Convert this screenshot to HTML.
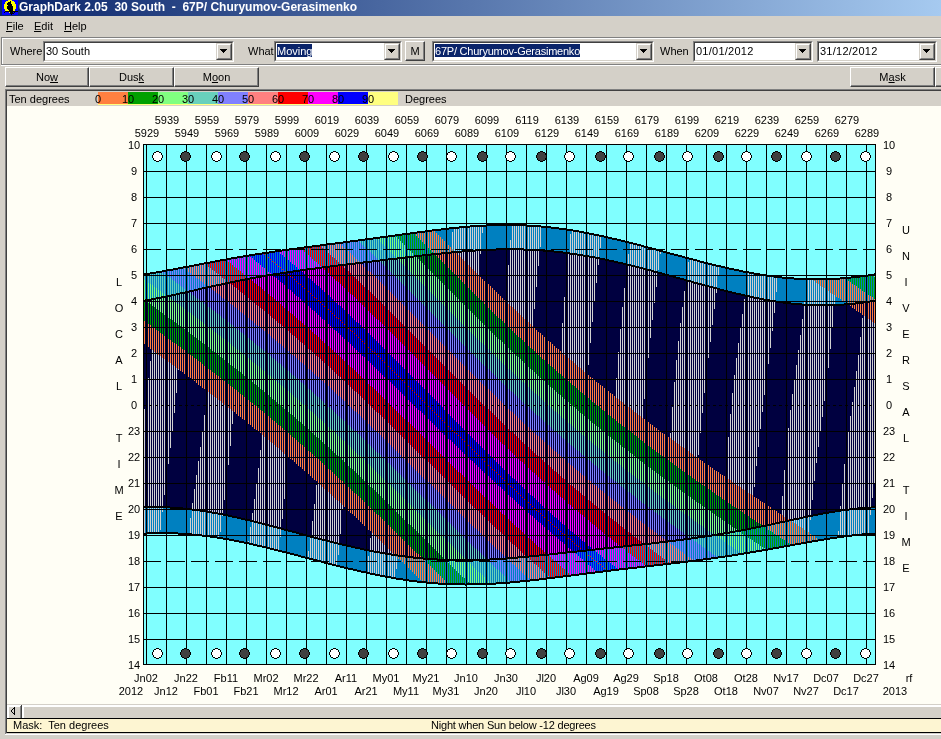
<!DOCTYPE html>
<html><head><meta charset="utf-8">
<style>
*{box-sizing:border-box}
html,body{margin:0;padding:0}
body{width:941px;height:739px;overflow:hidden;position:relative;background:#d4d0c8;font-family:"Liberation Sans",sans-serif;font-size:11px;line-height:13px;color:#000}
.a{position:absolute}
.lb{position:absolute;white-space:nowrap;line-height:13px;will-change:transform}
.title{left:0;top:0;width:941px;height:16px;background:linear-gradient(to right,#0a246a,#a6caf0)}
.ttext{left:19px;top:0px;color:#fff;font-weight:bold;font-size:12px;line-height:14px;white-space:pre;will-change:transform}
.menu span{position:absolute;top:20px;will-change:transform}
u{text-decoration:underline;text-decoration-thickness:1px;text-underline-offset:1px}
.etch{border-top:1px solid #808080;border-left:1px solid #808080;box-shadow:inset 1px 1px 0 #fff, 0 1px 0 #fff}
.combo{position:absolute;height:20px;background:#fff;border-top:1px solid #808080;border-left:1px solid #808080;border-right:1px solid #fff;border-bottom:1px solid #fff}
.combo .in{position:absolute;left:0;top:0;right:0;bottom:0;border-top:1px solid #404040;border-left:1px solid #404040;border-right:1px solid #d4d0c8;border-bottom:1px solid #d4d0c8}
.combo .txt{position:absolute;left:2px;top:3px;white-space:nowrap;will-change:transform}
.dd{position:absolute;right:0;top:0;width:16px;height:17px;background:#d4d0c8;border-top:1px solid #d4d0c8;border-left:1px solid #d4d0c8;border-right:1px solid #404040;border-bottom:1px solid #404040}
.dd .i{position:absolute;left:0;top:0;right:0;bottom:0;border-top:1px solid #fff;border-left:1px solid #fff;border-right:1px solid #808080;border-bottom:1px solid #808080}
.dd .tri{position:absolute;left:3px;top:5px}
.sel{background:#0a246a;color:#fff;display:inline-block;height:13px;line-height:14px;vertical-align:top;position:relative;top:-1px}
.btn{position:absolute;height:20px;background:#d4d0c8;border-top:1px solid #fff;border-left:1px solid #fff;border-right:1px solid #404040;border-bottom:1px solid #404040;text-align:center}
.btn .i{position:absolute;left:0;top:0;right:0;bottom:0;border-right:1px solid #808080;border-bottom:1px solid #808080}
.btn .bt{position:absolute;left:0;right:0;top:3px;text-align:center;will-change:transform}
svg.chart{position:absolute;left:0;top:0}
</style></head><body>
<div class="a title"></div>
<svg class="a" style="left:2px;top:0" width="16" height="15" viewBox="0 0 16 15" shape-rendering="crispEdges"><path fill="#0000ff" d="M0 0h6v1h-6zM10 0h6v1h-6zM0 1h4v1h-4zM12 1h4v1h-4zM0 2h3v1h-3zM13 2h3v1h-3zM0 3h3v1h-3zM13 3h3v1h-3zM0 4h2v1h-2zM14 4h2v1h-2zM0 5h2v1h-2zM14 5h2v1h-2zM0 6h2v1h-2zM14 6h2v1h-2zM0 7h2v1h-2zM14 7h2v1h-2zM0 8h2v1h-2zM14 8h2v1h-2zM0 9h3v1h-3zM13 9h3v1h-3zM0 10h3v1h-3zM13 10h3v1h-3zM0 11h3v1h-3zM0 12h2v1h-2zM3 12h4v1h-4zM11 12h1v1h-1zM13 12h3v1h-3zM0 13h8v1h-8zM12 13h4v1h-4zM0 14h9v1h-9zM10 14h6v1h-6z"/><path fill="#ffff00" d="M6 0h4v1h-4zM4 1h4v1h-4zM9 1h3v1h-3zM3 2h3v1h-3zM9 2h4v1h-4zM3 3h2v1h-2zM9 3h4v1h-4zM2 4h3v1h-3zM10 4h4v1h-4zM2 5h4v1h-4zM10 5h4v1h-4zM2 6h3v1h-3zM11 6h3v1h-3zM2 7h3v1h-3zM11 7h3v1h-3zM2 8h3v1h-3zM11 8h3v1h-3zM3 9h3v1h-3zM11 9h2v1h-2zM3 10h4v1h-4zM11 10h2v1h-2zM7 12h1v1h-1z"/><path fill="#000" d="M8 1h1v1h-1zM6 2h3v1h-3zM5 3h4v1h-4zM5 4h5v1h-5zM6 5h4v1h-4zM5 6h6v1h-6zM5 7h6v1h-6zM5 8h6v1h-6zM6 9h5v1h-5zM7 10h4v1h-4zM3 11h13v1h-13zM2 12h1v1h-1zM8 12h3v1h-3zM12 12h1v1h-1zM8 13h4v1h-4zM9 14h1v1h-1z"/></svg>
<div class="a ttext">GraphDark 2.05  30 South  -  67P/ Churyumov-Gerasimenko</div>
<div class="a menu" style="left:0;top:0">
<span style="left:6px"><u>F</u>ile</span><span style="left:34px"><u>E</u>dit</span><span style="left:64px"><u>H</u>elp</span>
</div>
<!-- panel 1 -->
<div class="a" style="left:1px;top:37px;width:945px;height:1px;background:#808080"></div>
<div class="a" style="left:2px;top:38px;width:945px;height:1px;background:#fff"></div>
<div class="a" style="left:1px;top:37px;width:1px;height:28px;background:#808080"></div>
<div class="a" style="left:2px;top:38px;width:1px;height:26px;background:#fff"></div>
<div class="a" style="left:1px;top:64px;width:945px;height:1px;background:#808080"></div>
<div class="a" style="left:1px;top:65px;width:945px;height:1px;background:#fff"></div>

<div class="lb" style="left:10px;top:45px">Where</div>
<div class="combo" style="left:43px;top:41px;width:191px;height:21px"><div class="in"></div><div class="txt">30 South</div><div class="dd" style="right:1px;top:1px"><div class="i"></div><svg class="tri" width="7" height="4" viewBox="0 0 7 4" shape-rendering="crispEdges"><path fill="#000" d="M0 0h7v1H0zM1 1h5v1H1zM2 2h3v1H2zM3 3h1v1H3z"/></svg></div></div>
<div class="lb" style="left:248px;top:45px">What</div>
<div class="combo" style="left:274px;top:41px;width:128px;height:21px"><div class="in"></div><div class="txt"><span class="sel">Moving</span></div><div class="dd" style="right:1px;top:1px"><div class="i"></div><svg class="tri" width="7" height="4" viewBox="0 0 7 4" shape-rendering="crispEdges"><path fill="#000" d="M0 0h7v1H0zM1 1h5v1H1zM2 2h3v1H2zM3 3h1v1H3z"/></svg></div></div>
<div class="btn" style="left:405px;top:41px;width:20px;height:20px"><div class="i"></div><div class="bt">M</div></div>
<div class="combo" style="left:432px;top:41px;width:222px;height:21px"><div class="in"></div><div class="txt"><span class="sel" style="letter-spacing:-0.23px">67P/ Churyumov-Gerasimenko</span></div><div class="dd" style="right:1px;top:1px"><div class="i"></div><svg class="tri" width="7" height="4" viewBox="0 0 7 4" shape-rendering="crispEdges"><path fill="#000" d="M0 0h7v1H0zM1 1h5v1H1zM2 2h3v1H2zM3 3h1v1H3z"/></svg></div></div>
<div class="lb" style="left:660px;top:45px">When</div>
<div class="combo" style="left:693px;top:41px;width:120px;height:21px"><div class="in"></div><div class="txt" style="letter-spacing:0.25px">01/01/2012</div><div class="dd" style="right:1px;top:1px"><div class="i"></div><svg class="tri" width="7" height="4" viewBox="0 0 7 4" shape-rendering="crispEdges"><path fill="#000" d="M0 0h7v1H0zM1 1h5v1H1zM2 2h3v1H2zM3 3h1v1H3z"/></svg></div></div>
<div class="combo" style="left:817px;top:41px;width:120px;height:21px"><div class="in"></div><div class="txt" style="letter-spacing:0.25px">31/12/2012</div><div class="dd" style="right:1px;top:1px"><div class="i"></div><svg class="tri" width="7" height="4" viewBox="0 0 7 4" shape-rendering="crispEdges"><path fill="#000" d="M0 0h7v1H0zM1 1h5v1H1zM2 2h3v1H2zM3 3h1v1H3z"/></svg></div></div>

<!-- buttons -->
<div class="btn" style="left:5px;top:67px;width:84px"><div class="i"></div><div class="bt">No<u>w</u></div></div>
<div class="btn" style="left:89px;top:67px;width:85px"><div class="i"></div><div class="bt">Dus<u>k</u></div></div>
<div class="btn" style="left:174px;top:67px;width:85px"><div class="i"></div><div class="bt">M<u>o</u>on</div></div>
<div class="btn" style="left:850px;top:67px;width:85px"><div class="i"></div><div class="bt">M<u>a</u>sk</div></div>
<div class="btn" style="left:935px;top:67px;width:85px"><div class="i"></div></div>

<!-- sunken frame -->
<div class="a" style="left:5px;top:89px;width:940px;height:1px;background:#808080"></div>
<div class="a" style="left:5px;top:89px;width:1px;height:645px;background:#808080"></div>
<div class="a" style="left:6px;top:90px;width:940px;height:1px;background:#404040"></div>
<div class="a" style="left:6px;top:90px;width:1px;height:643px;background:#404040"></div>
<div class="a" style="left:7px;top:91px;width:934px;height:15px;background:#d4d0c8"></div>
<div class="lb" style="left:9px;top:92.5px">Ten degrees</div>
<div style="position:absolute;left:98px;top:92px;width:30px;height:12px;background:#ff8040"></div><div style="position:absolute;left:128px;top:92px;width:30px;height:12px;background:#00a000"></div><div style="position:absolute;left:158px;top:92px;width:30px;height:12px;background:#80ff80"></div><div style="position:absolute;left:188px;top:92px;width:30px;height:12px;background:#68d0bc"></div><div style="position:absolute;left:218px;top:92px;width:30px;height:12px;background:#8080ff"></div><div style="position:absolute;left:248px;top:92px;width:30px;height:12px;background:#ff8080"></div><div style="position:absolute;left:278px;top:92px;width:30px;height:12px;background:#ff0000"></div><div style="position:absolute;left:308px;top:92px;width:30px;height:12px;background:#ff00ff"></div><div style="position:absolute;left:338px;top:92px;width:30px;height:12px;background:#0000ff"></div><div style="position:absolute;left:368px;top:92px;width:30px;height:12px;background:#ffff80"></div><div class="lb" style="left:98px;top:92.5px;width:40px;margin-left:-20px;text-align:center">0</div><div class="lb" style="left:128px;top:92.5px;width:40px;margin-left:-20px;text-align:center">10</div><div class="lb" style="left:158px;top:92.5px;width:40px;margin-left:-20px;text-align:center">20</div><div class="lb" style="left:188px;top:92.5px;width:40px;margin-left:-20px;text-align:center">30</div><div class="lb" style="left:218px;top:92.5px;width:40px;margin-left:-20px;text-align:center">40</div><div class="lb" style="left:248px;top:92.5px;width:40px;margin-left:-20px;text-align:center">50</div><div class="lb" style="left:278px;top:92.5px;width:40px;margin-left:-20px;text-align:center">60</div><div class="lb" style="left:308px;top:92.5px;width:40px;margin-left:-20px;text-align:center">70</div><div class="lb" style="left:338px;top:92.5px;width:40px;margin-left:-20px;text-align:center">80</div><div class="lb" style="left:368px;top:92.5px;width:40px;margin-left:-20px;text-align:center">90</div>
<div class="lb" style="left:405px;top:92.5px">Degrees</div>
<div class="a" style="left:98px;top:104px;width:300px;height:1px;background:#ffff80"></div>
<div class="a" style="left:7px;top:106px;width:934px;height:598px;background:#fffef5"></div>
<svg class="chart" width="941" height="739" viewBox="0 0 941 739" shape-rendering="crispEdges" fill="none" stroke-width="1"><rect x="144" y="145" width="731" height="519" fill="#80ffff"/><path stroke="#000000" d="M144.5 273v3M144.5 300v2M144.5 506v2M144.5 533v3M145.5 273v3M145.5 299v3M145.5 506v2M145.5 533v3M147.5 273v3M147.5 299v3M147.5 506v2M147.5 532v2M148.5 273v3M148.5 299v3M148.5 506v2M148.5 532v2M149.5 273v3M149.5 299v3M149.5 506v2M149.5 532v2M150.5 272v2M150.5 299v3M150.5 506v2M150.5 532v2M151.5 272v2M151.5 298v2M151.5 506v2M151.5 532v2M152.5 272v2M152.5 298v2M152.5 506v2M152.5 532v2M153.5 272v2M153.5 298v2M153.5 506v2M153.5 532v2M154.5 272v2M154.5 298v2M154.5 506v2M154.5 532v2M155.5 272v2M155.5 298v2M155.5 506v2M155.5 532v2M156.5 271v2M156.5 297v2M156.5 506v2M156.5 532v2M157.5 271v2M157.5 297v2M157.5 506v2M157.5 532v2M158.5 271v2M158.5 297v2M158.5 506v2M158.5 532v2M159.5 271v2M159.5 297v2M159.5 506v2M159.5 532v2M160.5 271v2M160.5 297v2M160.5 506v2M160.5 532v2M161.5 271v2M161.5 296v2M161.5 506v2M161.5 532v2M162.5 270v2M162.5 296v2M162.5 506v2M162.5 532v2M163.5 270v2M163.5 296v2M163.5 506v2M163.5 532v2M164.5 270v2M164.5 296v2M164.5 506v2M164.5 532v2M165.5 270v2M165.5 296v2M165.5 506v2M165.5 532v2M167.5 269v2M167.5 295v2M167.5 506v2M167.5 532v2M168.5 269v2M168.5 295v2M168.5 506v2M168.5 532v2M169.5 269v2M169.5 295v2M169.5 506v2M169.5 532v2M170.5 269v2M170.5 295v2M170.5 507v3M170.5 532v2M171.5 269v2M171.5 294v2M171.5 507v3M171.5 532v2M172.5 269v2M172.5 294v2M172.5 507v3M172.5 532v2M173.5 268v2M173.5 294v2M173.5 507v3M173.5 532v2M174.5 268v2M174.5 294v2M174.5 507v3M174.5 532v2M175.5 268v2M175.5 294v2M175.5 507v3M175.5 532v2M176.5 268v2M176.5 293v2M176.5 507v3M176.5 532v2M177.5 268v2M177.5 293v2M177.5 507v3M177.5 532v2M178.5 267v2M178.5 293v2M178.5 507v3M178.5 533v3M179.5 267v2M179.5 293v2M179.5 507v3M179.5 533v3M180.5 267v2M180.5 292v2M180.5 507v3M180.5 533v3M181.5 267v2M181.5 292v2M181.5 507v3M181.5 533v3M182.5 267v2M182.5 292v2M182.5 507v3M182.5 533v3M183.5 266v2M183.5 292v2M183.5 508v2M183.5 533v3M184.5 266v2M184.5 292v2M184.5 508v2M184.5 533v3M185.5 266v2M185.5 291v2M185.5 508v2M185.5 533v3M187.5 266v2M187.5 291v2M187.5 508v2M187.5 533v3M188.5 266v2M188.5 291v2M188.5 508v2M188.5 533v3M189.5 265v2M189.5 290v2M189.5 508v2M189.5 533v3M190.5 265v2M190.5 290v2M190.5 508v2M190.5 533v3M191.5 265v2M191.5 290v2M191.5 508v2M191.5 533v3M192.5 265v2M192.5 290v2M192.5 509v2M192.5 534v2M193.5 265v2M193.5 290v2M193.5 509v2M193.5 534v2M194.5 264v2M194.5 289v2M194.5 509v2M194.5 534v2M195.5 264v2M195.5 289v2M195.5 509v2M195.5 534v2M196.5 264v2M196.5 289v2M196.5 509v2M196.5 534v2M197.5 264v2M197.5 289v2M197.5 509v2M197.5 534v2M198.5 264v2M198.5 288v2M198.5 509v2M198.5 534v2M199.5 263v2M199.5 288v2M199.5 509v2M199.5 534v2M200.5 263v2M200.5 288v2M200.5 510v2M200.5 534v2M201.5 263v2M201.5 288v2M201.5 510v2M201.5 534v2M202.5 263v2M202.5 287v2M202.5 510v2M202.5 535v2M203.5 263v2M203.5 287v2M203.5 510v2M203.5 535v2M204.5 262v2M204.5 287v2M204.5 510v2M204.5 535v2M205.5 262v2M205.5 287v2M205.5 510v2M205.5 535v2M207.5 262v2M207.5 286v2M207.5 511v2M207.5 535v2M208.5 262v2M208.5 286v2M208.5 511v2M208.5 535v2M209.5 262v2M209.5 286v2M209.5 511v2M209.5 535v2M210.5 261v2M210.5 286v2M210.5 511v2M210.5 536v2M211.5 261v2M211.5 285v2M211.5 511v2M211.5 536v2M212.5 261v2M212.5 285v2M212.5 512v2M212.5 536v2M213.5 261v2M213.5 285v2M213.5 512v2M213.5 536v2M214.5 261v2M214.5 285v2M214.5 512v2M214.5 536v2M215.5 260v2M215.5 285v2M215.5 512v2M215.5 536v2M216.5 260v2M216.5 284v2M216.5 512v2M216.5 536v2M217.5 260v2M217.5 284v2M217.5 512v2M217.5 537v2M218.5 260v2M218.5 284v2M218.5 513v2M218.5 537v2M219.5 260v2M219.5 284v2M219.5 513v2M219.5 537v2M220.5 259v2M220.5 284v2M220.5 513v2M220.5 537v2M221.5 259v2M221.5 283v2M221.5 513v2M221.5 537v2M222.5 259v2M222.5 283v2M222.5 513v2M222.5 537v2M223.5 259v2M223.5 283v2M223.5 514v2M223.5 538v2M224.5 259v2M224.5 283v2M224.5 514v2M224.5 538v2M225.5 259v2M225.5 282v2M225.5 514v2M225.5 538v2M227.5 258v2M227.5 282v2M227.5 514v2M227.5 538v2M228.5 258v2M228.5 282v2M228.5 515v2M228.5 538v2M229.5 258v2M229.5 282v2M229.5 515v2M229.5 539v2M230.5 258v2M230.5 281v2M230.5 515v2M230.5 539v2M231.5 257v2M231.5 281v2M231.5 515v2M231.5 539v2M232.5 257v2M232.5 281v2M232.5 516v2M232.5 539v2M233.5 257v2M233.5 281v2M233.5 516v2M233.5 539v2M234.5 257v2M234.5 281v2M234.5 516v2M234.5 540v2M235.5 257v2M235.5 280v2M235.5 516v2M235.5 540v2M236.5 257v2M236.5 280v2M236.5 516v2M236.5 540v2M237.5 256v2M237.5 280v2M237.5 517v2M237.5 540v2M238.5 256v2M238.5 280v2M238.5 517v2M238.5 540v2M239.5 256v2M239.5 280v2M239.5 517v2M239.5 541v2M240.5 256v2M240.5 279v2M240.5 517v2M240.5 541v2M241.5 256v2M241.5 279v2M241.5 518v2M241.5 541v2M242.5 256v2M242.5 279v2M242.5 518v2M242.5 541v2M243.5 255v2M243.5 279v2M243.5 518v2M243.5 541v2M244.5 255v2M244.5 279v2M244.5 518v2M244.5 542v2M245.5 255v2M245.5 278v2M245.5 519v2M245.5 542v2M247.5 255v2M247.5 278v2M247.5 519v2M247.5 542v2M248.5 255v2M248.5 278v2M248.5 519v2M248.5 542v2M249.5 254v2M249.5 278v2M249.5 519v2M249.5 543v2M250.5 254v2M250.5 277v2M250.5 520v2M250.5 543v2M251.5 254v2M251.5 277v2M251.5 520v2M251.5 543v2M252.5 254v2M252.5 277v2M252.5 520v2M252.5 543v2M253.5 254v2M253.5 277v2M253.5 520v2M253.5 544v2M254.5 254v2M254.5 277v2M254.5 521v2M254.5 544v2M255.5 253v2M255.5 277v2M255.5 521v2M255.5 544v2M256.5 253v2M256.5 276v2M256.5 521v2M256.5 544v2M257.5 253v2M257.5 276v2M257.5 521v2M257.5 545v2M258.5 253v2M258.5 276v2M258.5 522v2M258.5 545v2M259.5 253v2M259.5 276v2M259.5 522v2M259.5 545v2M260.5 253v2M260.5 276v2M260.5 522v2M260.5 545v2M261.5 253v2M261.5 276v2M261.5 522v2M261.5 545v2M262.5 252v2M262.5 275v2M262.5 523v2M262.5 546v2M263.5 252v2M263.5 275v2M263.5 523v2M263.5 546v2M264.5 252v2M264.5 275v2M264.5 523v2M264.5 546v2M265.5 252v2M265.5 275v2M265.5 524v2M265.5 546v2M267.5 252v2M267.5 274v2M267.5 524v2M267.5 547v2M268.5 252v2M268.5 274v2M268.5 524v2M268.5 547v2M269.5 251v2M269.5 274v2M269.5 525v2M269.5 547v2M270.5 251v2M270.5 274v2M270.5 525v2M270.5 548v2M271.5 251v2M271.5 274v2M271.5 525v2M271.5 548v2M272.5 251v2M272.5 274v2M272.5 525v2M272.5 548v2M273.5 251v2M273.5 273v3M273.5 526v2M273.5 548v2M274.5 251v2M274.5 273v3M274.5 526v2M274.5 549v2M275.5 250v2M275.5 273v3M275.5 526v2M275.5 549v2M276.5 250v2M276.5 273v3M276.5 526v2M276.5 549v2M277.5 250v2M277.5 273v3M277.5 527v2M277.5 549v2M278.5 250v2M278.5 273v3M278.5 527v2M278.5 550v2M279.5 250v2M279.5 273v3M279.5 527v2M279.5 550v2M280.5 250v2M280.5 272v2M280.5 527v2M280.5 550v2M281.5 250v2M281.5 272v2M281.5 528v2M281.5 550v2M282.5 249v2M282.5 272v2M282.5 528v2M282.5 551v2M283.5 249v2M283.5 272v2M283.5 528v2M283.5 551v2M284.5 249v2M284.5 272v2M284.5 529v2M284.5 551v2M285.5 249v2M285.5 272v2M285.5 529v2M285.5 551v2M287.5 249v2M287.5 271v2M287.5 529v2M287.5 552v2M288.5 249v2M288.5 271v2M288.5 530v2M288.5 552v2M289.5 248v2M289.5 271v2M289.5 530v2M289.5 552v2M290.5 248v2M290.5 271v2M290.5 530v2M290.5 553v2M291.5 248v2M291.5 271v2M291.5 530v2M291.5 553v2M292.5 248v2M292.5 271v2M292.5 531v2M292.5 553v2M293.5 248v2M293.5 270v2M293.5 531v2M293.5 553v2M294.5 248v2M294.5 270v2M294.5 531v2M294.5 554v2M295.5 248v2M295.5 270v2M295.5 531v2M295.5 554v2M296.5 248v2M296.5 270v2M296.5 532v2M296.5 554v2M297.5 247v2M297.5 270v2M297.5 532v2M297.5 554v2M298.5 247v2M298.5 270v2M298.5 532v2M298.5 555v2M299.5 247v2M299.5 270v2M299.5 533v3M299.5 555v2M300.5 247v2M300.5 269v2M300.5 533v3M300.5 555v2M301.5 247v2M301.5 269v2M301.5 533v3M301.5 556v2M302.5 247v2M302.5 269v2M302.5 533v3M302.5 556v2M303.5 247v2M303.5 269v2M303.5 534v2M303.5 556v2M304.5 246v2M304.5 269v2M304.5 534v2M304.5 556v2M305.5 246v2M305.5 269v2M305.5 534v2M305.5 557v2M307.5 246v2M307.5 268v2M307.5 535v2M307.5 557v2M308.5 246v2M308.5 268v2M308.5 535v2M308.5 557v2M309.5 246v2M309.5 268v2M309.5 535v2M309.5 558v2M310.5 246v2M310.5 268v2M310.5 536v2M310.5 558v2M311.5 246v2M311.5 268v2M311.5 536v2M311.5 558v2M312.5 245v2M312.5 268v2M312.5 536v2M312.5 558v2M313.5 245v2M313.5 268v2M313.5 536v2M313.5 559v2M314.5 245v2M314.5 268v2M314.5 537v2M314.5 559v2M315.5 245v2M315.5 267v2M315.5 537v2M315.5 559v2M316.5 245v2M316.5 267v2M316.5 537v2M316.5 559v2M317.5 245v2M317.5 267v2M317.5 537v2M317.5 560v2M318.5 245v2M318.5 267v2M318.5 538v2M318.5 560v2M319.5 245v2M319.5 267v2M319.5 538v2M319.5 560v2M320.5 244v2M320.5 267v2M320.5 538v2M320.5 560v2M321.5 244v2M321.5 267v2M321.5 538v2M321.5 561v2M322.5 244v2M322.5 266v2M322.5 539v2M322.5 561v2M323.5 244v2M323.5 266v2M323.5 539v2M323.5 561v2M324.5 244v2M324.5 266v2M324.5 539v2M324.5 562v2M325.5 244v2M325.5 266v2M325.5 539v2M325.5 562v2M327.5 243v2M327.5 266v2M327.5 540v2M327.5 562v2M328.5 243v2M328.5 266v2M328.5 540v2M328.5 563v2M329.5 243v2M329.5 266v2M329.5 540v2M329.5 563v2M330.5 243v2M330.5 265v2M330.5 541v2M330.5 563v2M331.5 243v2M331.5 265v2M331.5 541v2M331.5 563v2M332.5 243v2M332.5 265v2M332.5 541v2M332.5 564v2M333.5 243v2M333.5 265v2M333.5 541v2M333.5 564v2M334.5 243v2M334.5 265v2M334.5 542v2M334.5 564v2M335.5 242v2M335.5 265v2M335.5 542v2M335.5 564v2M336.5 242v2M336.5 265v2M336.5 542v2M336.5 565v2M337.5 242v2M337.5 265v2M337.5 542v2M337.5 565v2M338.5 242v2M338.5 264v2M338.5 543v2M338.5 565v2M339.5 242v2M339.5 264v2M339.5 543v2M339.5 565v2M340.5 242v2M340.5 264v2M340.5 543v2M340.5 566v2M341.5 242v2M341.5 264v2M341.5 543v2M341.5 566v2M342.5 242v2M342.5 264v2M342.5 544v2M342.5 566v2M343.5 241v2M343.5 264v2M343.5 544v2M343.5 566v2M344.5 241v2M344.5 264v2M344.5 544v2M344.5 567v2M345.5 241v2M345.5 264v2M345.5 544v2M345.5 567v2M347.5 241v2M347.5 263v2M347.5 545v2M347.5 567v2M348.5 241v2M348.5 263v2M348.5 545v2M348.5 568v2M349.5 241v2M349.5 263v2M349.5 545v2M349.5 568v2M350.5 240v2M350.5 263v2M350.5 545v2M350.5 568v2M351.5 240v2M351.5 263v2M351.5 546v2M351.5 568v2M352.5 240v2M352.5 263v2M352.5 546v2M352.5 568v2M353.5 240v2M353.5 263v2M353.5 546v2M353.5 569v2M354.5 240v2M354.5 263v2M354.5 546v2M354.5 569v2M355.5 240v2M355.5 262v2M355.5 547v2M355.5 569v2M356.5 240v2M356.5 262v2M356.5 547v2M356.5 569v2M357.5 240v2M357.5 262v2M357.5 547v2M357.5 570v2M358.5 239v2M358.5 262v2M358.5 547v2M358.5 570v2M359.5 239v2M359.5 262v2M359.5 547v2M359.5 570v2M360.5 239v2M360.5 262v2M360.5 548v2M360.5 570v2M361.5 239v2M361.5 262v2M361.5 548v2M361.5 571v2M362.5 239v2M362.5 262v2M362.5 548v2M362.5 571v2M363.5 239v2M363.5 261v2M363.5 548v2M363.5 571v2M364.5 239v2M364.5 261v2M364.5 549v2M364.5 571v2M365.5 238v2M365.5 261v2M365.5 549v2M365.5 571v2M367.5 238v2M367.5 261v2M367.5 549v2M367.5 572v2M368.5 238v2M368.5 261v2M368.5 549v2M368.5 572v2M369.5 238v2M369.5 261v2M369.5 550v2M369.5 572v2M370.5 238v2M370.5 261v2M370.5 550v2M370.5 573v2M371.5 238v2M371.5 261v2M371.5 550v2M371.5 573v2M372.5 238v2M372.5 260v2M372.5 550v2M372.5 573v2M373.5 237v2M373.5 260v2M373.5 550v2M373.5 573v2M374.5 237v2M374.5 260v2M374.5 551v2M374.5 573v2M375.5 237v2M375.5 260v2M375.5 551v2M375.5 574v2M376.5 237v2M376.5 260v2M376.5 551v2M376.5 574v2M377.5 237v2M377.5 260v2M377.5 551v2M377.5 574v2M378.5 237v2M378.5 260v2M378.5 551v2M378.5 574v2M379.5 237v2M379.5 260v2M379.5 551v2M379.5 574v2M380.5 236v2M380.5 259v2M380.5 552v2M380.5 575v2M381.5 236v2M381.5 259v2M381.5 552v2M381.5 575v2M382.5 236v2M382.5 259v2M382.5 552v2M382.5 575v2M383.5 236v2M383.5 259v2M383.5 552v2M383.5 575v2M384.5 236v2M384.5 259v2M384.5 552v2M384.5 575v2M385.5 236v2M385.5 259v2M385.5 553v2M385.5 576v2M387.5 236v2M387.5 259v2M387.5 553v2M387.5 576v2M388.5 235v2M388.5 258v2M388.5 553v2M388.5 576v2M389.5 235v2M389.5 258v2M389.5 553v2M389.5 576v2M390.5 235v2M390.5 258v2M390.5 553v2M390.5 576v2M391.5 235v2M391.5 258v2M391.5 554v2M391.5 577v2M392.5 235v2M392.5 258v2M392.5 554v2M392.5 577v2M393.5 235v2M393.5 258v2M393.5 554v2M393.5 577v2M394.5 235v2M394.5 258v2M394.5 554v2M394.5 577v2M395.5 234v2M395.5 258v2M395.5 554v2M395.5 577v2M396.5 234v2M396.5 258v2M396.5 554v2M396.5 578v2M397.5 234v2M397.5 257v2M397.5 554v2M397.5 578v2M398.5 234v2M398.5 257v2M398.5 555v2M398.5 578v2M399.5 234v2M399.5 257v2M399.5 555v2M399.5 578v2M400.5 234v2M400.5 257v2M400.5 555v2M400.5 578v2M401.5 234v2M401.5 257v2M401.5 555v2M401.5 578v2M402.5 233v2M402.5 257v2M402.5 555v2M402.5 578v2M403.5 233v2M403.5 257v2M403.5 555v2M403.5 579v2M404.5 233v2M404.5 257v2M404.5 555v2M404.5 579v2M405.5 233v2M405.5 256v2M405.5 556v2M405.5 579v2M407.5 233v2M407.5 256v2M407.5 556v2M407.5 579v2M408.5 233v2M408.5 256v2M408.5 556v2M408.5 579v2M409.5 233v2M409.5 256v2M409.5 556v2M409.5 580v2M410.5 232v2M410.5 256v2M410.5 556v2M410.5 580v2M411.5 232v2M411.5 256v2M411.5 556v2M411.5 580v2M412.5 232v2M412.5 256v2M412.5 556v2M412.5 580v2M413.5 232v2M413.5 256v2M413.5 557v2M413.5 580v2M414.5 232v2M414.5 255v2M414.5 557v2M414.5 580v2M415.5 232v2M415.5 255v2M415.5 557v2M415.5 580v2M416.5 232v2M416.5 255v2M416.5 557v2M416.5 580v2M417.5 231v2M417.5 255v2M417.5 557v2M417.5 581v2M418.5 231v2M418.5 255v2M418.5 557v2M418.5 581v2M419.5 231v2M419.5 255v2M419.5 557v2M419.5 581v2M420.5 231v2M420.5 255v2M420.5 557v2M420.5 581v2M421.5 231v2M421.5 255v2M421.5 557v2M421.5 581v2M422.5 231v2M422.5 254v2M422.5 557v2M422.5 581v2M423.5 231v2M423.5 254v2M423.5 558v2M423.5 581v2M424.5 231v2M424.5 254v2M424.5 558v2M424.5 581v2M425.5 230v2M425.5 254v2M425.5 558v2M425.5 581v2M427.5 230v2M427.5 254v2M427.5 558v2M427.5 582v2M428.5 230v2M428.5 254v2M428.5 558v2M428.5 582v2M429.5 230v2M429.5 254v2M429.5 558v2M429.5 582v2M430.5 230v2M430.5 254v2M430.5 558v2M430.5 582v2M431.5 230v2M431.5 253v2M431.5 558v2M431.5 582v2M432.5 229v2M432.5 253v2M432.5 558v2M432.5 582v2M433.5 229v2M433.5 253v2M433.5 558v2M433.5 582v2M434.5 229v2M434.5 253v2M434.5 558v2M434.5 582v2M435.5 229v2M435.5 253v2M435.5 558v2M435.5 582v2M436.5 229v2M436.5 253v2M436.5 558v2M436.5 582v2M437.5 229v2M437.5 253v2M437.5 559v2M437.5 582v2M438.5 229v2M438.5 253v2M438.5 559v2M438.5 583v2M439.5 229v2M439.5 253v2M439.5 559v2M439.5 583v2M440.5 229v2M440.5 253v2M440.5 559v2M440.5 583v2M441.5 228v2M441.5 252v2M441.5 559v2M441.5 583v2M442.5 228v2M442.5 252v2M442.5 559v2M442.5 583v2M443.5 228v2M443.5 252v2M443.5 559v2M443.5 583v2M444.5 228v2M444.5 252v2M444.5 559v2M444.5 583v2M445.5 228v2M445.5 252v2M445.5 559v2M445.5 583v2M447.5 228v2M447.5 252v2M447.5 559v2M447.5 583v2M448.5 228v2M448.5 252v2M448.5 559v2M448.5 583v2M449.5 227v2M449.5 252v2M449.5 559v2M449.5 583v2M450.5 227v2M450.5 252v2M450.5 559v2M450.5 583v2M451.5 227v2M451.5 251v2M451.5 559v2M451.5 583v2M452.5 227v2M452.5 251v2M452.5 559v2M452.5 583v2M453.5 227v2M453.5 251v2M453.5 559v2M453.5 583v2M454.5 227v2M454.5 251v2M454.5 559v2M454.5 583v2M455.5 227v2M455.5 251v2M455.5 559v2M455.5 583v2M456.5 227v2M456.5 251v2M456.5 559v2M456.5 583v2M457.5 227v2M457.5 251v2M457.5 559v2M457.5 583v2M458.5 227v2M458.5 251v2M458.5 559v2M458.5 583v2M459.5 226v2M459.5 251v2M459.5 559v2M459.5 583v2M460.5 226v2M460.5 251v2M460.5 559v2M460.5 583v2M461.5 226v2M461.5 251v2M461.5 559v2M461.5 583v2M462.5 226v2M462.5 250v2M462.5 559v2M462.5 583v2M463.5 226v2M463.5 250v2M463.5 559v2M463.5 583v2M464.5 226v2M464.5 250v2M464.5 559v2M464.5 583v2M465.5 226v2M465.5 250v2M465.5 559v2M465.5 584v2M467.5 226v2M467.5 250v2M467.5 559v2M467.5 583v2M468.5 226v2M468.5 250v2M468.5 559v2M468.5 583v2M469.5 226v2M469.5 250v2M469.5 559v2M469.5 583v2M470.5 225v2M470.5 250v2M470.5 559v2M470.5 583v2M471.5 225v2M471.5 250v2M471.5 559v2M471.5 583v2M472.5 225v2M472.5 250v2M472.5 559v2M472.5 583v2M473.5 225v2M473.5 250v2M473.5 559v2M473.5 583v2M474.5 225v2M474.5 250v2M474.5 559v2M474.5 583v2M475.5 225v2M475.5 249v2M475.5 559v2M475.5 583v2M476.5 225v2M476.5 249v2M476.5 559v2M476.5 583v2M477.5 225v2M477.5 249v2M477.5 559v2M477.5 583v2M478.5 225v2M478.5 249v2M478.5 559v2M478.5 583v2M479.5 225v2M479.5 249v2M479.5 559v2M479.5 583v2M480.5 225v2M480.5 249v2M480.5 559v2M480.5 583v2M481.5 225v2M481.5 249v2M481.5 559v2M481.5 583v2M482.5 225v2M482.5 249v2M482.5 559v2M482.5 583v2M483.5 225v2M483.5 249v2M483.5 559v2M483.5 583v2M484.5 225v2M484.5 249v2M484.5 559v2M484.5 583v2M485.5 225v2M485.5 249v2M485.5 559v2M485.5 583v2M487.5 224v2M487.5 249v2M487.5 559v2M487.5 583v2M488.5 224v2M488.5 249v2M488.5 559v2M488.5 583v2M489.5 224v2M489.5 249v2M489.5 559v2M489.5 583v2M490.5 224v2M490.5 249v2M490.5 558v2M490.5 583v2M491.5 224v2M491.5 249v2M491.5 558v2M491.5 583v2M492.5 224v2M492.5 249v2M492.5 558v2M492.5 583v2M493.5 224v2M493.5 249v2M493.5 558v2M493.5 583v2M494.5 224v2M494.5 249v2M494.5 558v2M494.5 583v2M495.5 224v2M495.5 249v2M495.5 558v2M495.5 583v2M496.5 224v2M496.5 248v2M496.5 558v2M496.5 582v2M497.5 224v2M497.5 248v2M497.5 558v2M497.5 582v2M498.5 224v2M498.5 248v2M498.5 558v2M498.5 582v2M499.5 224v2M499.5 248v2M499.5 558v2M499.5 582v2M500.5 224v2M500.5 248v2M500.5 558v2M500.5 582v2M501.5 224v2M501.5 248v2M501.5 558v2M501.5 582v2M502.5 224v2M502.5 248v2M502.5 558v2M502.5 582v2M503.5 224v2M503.5 248v2M503.5 558v2M503.5 582v2M504.5 224v2M504.5 248v2M504.5 558v2M504.5 582v2M505.5 224v2M505.5 248v2M505.5 558v2M505.5 582v2M507.5 224v2M507.5 248v2M507.5 557v2M507.5 582v2M508.5 224v2M508.5 248v2M508.5 557v2M508.5 582v2M509.5 224v2M509.5 248v2M509.5 557v2M509.5 582v2M510.5 224v2M510.5 248v2M510.5 557v2M510.5 581v2M511.5 224v2M511.5 248v2M511.5 557v2M511.5 581v2M512.5 224v2M512.5 248v2M512.5 557v2M512.5 581v2M513.5 224v2M513.5 248v2M513.5 557v2M513.5 581v2M514.5 224v2M514.5 248v2M514.5 557v2M514.5 581v2M515.5 224v2M515.5 248v2M515.5 557v2M515.5 581v2M516.5 224v2M516.5 248v2M516.5 557v2M516.5 581v2M517.5 224v2M517.5 248v2M517.5 557v2M517.5 581v2M518.5 224v2M518.5 248v2M518.5 556v2M518.5 581v2M519.5 224v2M519.5 248v2M519.5 556v2M519.5 581v2M520.5 224v2M520.5 248v2M520.5 556v2M520.5 580v2M521.5 224v2M521.5 248v2M521.5 556v2M521.5 580v2M522.5 224v2M522.5 248v2M522.5 556v2M522.5 580v2M523.5 224v2M523.5 248v2M523.5 556v2M523.5 580v2M524.5 224v2M524.5 249v2M524.5 556v2M524.5 580v2M525.5 224v2M525.5 249v2M525.5 556v2M525.5 580v2M527.5 225v2M527.5 249v2M527.5 556v2M527.5 580v2M528.5 225v2M528.5 249v2M528.5 556v2M528.5 580v2M529.5 225v2M529.5 249v2M529.5 555v2M529.5 580v2M530.5 225v2M530.5 249v2M530.5 555v2M530.5 579v2M531.5 225v2M531.5 249v2M531.5 555v2M531.5 579v2M532.5 225v2M532.5 249v2M532.5 555v2M532.5 579v2M533.5 225v2M533.5 249v2M533.5 555v2M533.5 579v2M534.5 225v2M534.5 249v2M534.5 555v2M534.5 579v2M535.5 225v2M535.5 249v2M535.5 555v2M535.5 579v2M536.5 225v2M536.5 249v2M536.5 555v2M536.5 579v2M537.5 225v2M537.5 249v2M537.5 555v2M537.5 579v2M538.5 225v2M538.5 249v2M538.5 555v2M538.5 579v2M539.5 225v2M539.5 249v2M539.5 554v2M539.5 578v2M540.5 225v2M540.5 249v2M540.5 554v2M540.5 578v2M541.5 226v2M541.5 249v2M541.5 554v2M541.5 578v2M542.5 226v2M542.5 249v2M542.5 554v2M542.5 578v2M543.5 226v2M543.5 250v2M543.5 554v2M543.5 578v2M544.5 226v2M544.5 250v2M544.5 554v2M544.5 578v2M545.5 226v2M545.5 250v2M545.5 554v2M545.5 578v2M547.5 226v2M547.5 250v2M547.5 554v2M547.5 577v2M548.5 226v2M548.5 250v2M548.5 554v2M548.5 577v2M549.5 226v2M549.5 250v2M549.5 553v2M549.5 577v2M550.5 226v2M550.5 250v2M550.5 553v2M550.5 577v2M551.5 227v2M551.5 250v2M551.5 553v2M551.5 577v2M552.5 227v2M552.5 250v2M552.5 553v2M552.5 577v2M553.5 227v2M553.5 250v2M553.5 553v2M553.5 577v2M554.5 227v2M554.5 251v2M554.5 553v2M554.5 577v2M555.5 227v2M555.5 251v2M555.5 553v2M555.5 576v2M556.5 227v2M556.5 251v2M556.5 553v2M556.5 576v2M557.5 227v2M557.5 251v2M557.5 553v2M557.5 576v2M558.5 227v2M558.5 251v2M558.5 552v2M558.5 576v2M559.5 228v2M559.5 251v2M559.5 552v2M559.5 576v2M560.5 228v2M560.5 251v2M560.5 552v2M560.5 576v2M561.5 228v2M561.5 251v2M561.5 552v2M561.5 576v2M562.5 228v2M562.5 251v2M562.5 552v2M562.5 576v2M563.5 228v2M563.5 252v2M563.5 552v2M563.5 575v2M564.5 228v2M564.5 252v2M564.5 552v2M564.5 575v2M565.5 228v2M565.5 252v2M565.5 552v2M565.5 575v2M567.5 229v2M567.5 252v2M567.5 551v2M567.5 575v2M568.5 229v2M568.5 252v2M568.5 551v2M568.5 575v2M569.5 229v2M569.5 252v2M569.5 551v2M569.5 575v2M570.5 229v2M570.5 253v2M570.5 551v2M570.5 575v2M571.5 229v2M571.5 253v2M571.5 551v2M571.5 574v2M572.5 229v2M572.5 253v2M572.5 551v2M572.5 574v2M573.5 230v2M573.5 253v2M573.5 551v2M573.5 574v2M574.5 230v2M574.5 253v2M574.5 551v2M574.5 574v2M575.5 230v2M575.5 253v2M575.5 551v2M575.5 574v2M576.5 230v2M576.5 253v2M576.5 551v2M576.5 574v2M577.5 230v2M577.5 254v2M577.5 550v2M577.5 574v2M578.5 230v2M578.5 254v2M578.5 550v2M578.5 574v2M579.5 231v2M579.5 254v2M579.5 550v2M579.5 573v2M580.5 231v2M580.5 254v2M580.5 550v2M580.5 573v2M581.5 231v2M581.5 254v2M581.5 550v2M581.5 573v2M582.5 231v2M582.5 254v2M582.5 550v2M582.5 573v2M583.5 231v2M583.5 255v2M583.5 550v2M583.5 573v2M584.5 232v2M584.5 255v2M584.5 550v2M584.5 573v2M585.5 232v2M585.5 255v2M585.5 550v2M585.5 573v2M587.5 232v2M587.5 255v2M587.5 549v2M587.5 572v2M588.5 232v2M588.5 255v2M588.5 549v2M588.5 572v2M589.5 233v2M589.5 256v2M589.5 549v2M589.5 572v2M590.5 233v2M590.5 256v2M590.5 549v2M590.5 572v2M591.5 233v2M591.5 256v2M591.5 549v2M591.5 572v2M592.5 233v2M592.5 256v2M592.5 549v2M592.5 572v2M593.5 233v2M593.5 256v2M593.5 549v2M593.5 572v2M594.5 234v2M594.5 256v2M594.5 549v2M594.5 572v2M595.5 234v2M595.5 257v2M595.5 548v2M595.5 571v2M596.5 234v2M596.5 257v2M596.5 548v2M596.5 571v2M597.5 234v2M597.5 257v2M597.5 548v2M597.5 571v2M598.5 234v2M598.5 257v2M598.5 548v2M598.5 571v2M599.5 235v2M599.5 257v2M599.5 548v2M599.5 571v2M600.5 235v2M600.5 258v2M600.5 548v2M600.5 571v2M601.5 235v2M601.5 258v2M601.5 548v2M601.5 571v2M602.5 235v2M602.5 258v2M602.5 548v2M602.5 571v2M603.5 235v2M603.5 258v2M603.5 548v2M603.5 570v2M604.5 236v2M604.5 258v2M604.5 547v2M604.5 570v2M605.5 236v2M605.5 259v2M605.5 547v2M605.5 570v2M607.5 236v2M607.5 259v2M607.5 547v2M607.5 570v2M608.5 237v2M608.5 259v2M608.5 547v2M608.5 570v2M609.5 237v2M609.5 260v2M609.5 547v2M609.5 570v2M610.5 237v2M610.5 260v2M610.5 547v2M610.5 570v2M611.5 237v2M611.5 260v2M611.5 547v2M611.5 569v2M612.5 238v2M612.5 260v2M612.5 547v2M612.5 569v2M613.5 238v2M613.5 260v2M613.5 547v2M613.5 569v2M614.5 238v2M614.5 261v2M614.5 546v2M614.5 569v2M615.5 238v2M615.5 261v2M615.5 546v2M615.5 569v2M616.5 238v2M616.5 261v2M616.5 546v2M616.5 569v2M617.5 239v2M617.5 261v2M617.5 546v2M617.5 569v2M618.5 239v2M618.5 262v2M618.5 546v2M618.5 569v2M619.5 239v2M619.5 262v2M619.5 546v2M619.5 568v2M620.5 239v2M620.5 262v2M620.5 546v2M620.5 568v2M621.5 240v2M621.5 262v2M621.5 546v2M621.5 568v2M622.5 240v2M622.5 262v2M622.5 546v2M622.5 568v2M623.5 240v2M623.5 263v2M623.5 545v2M623.5 568v2M624.5 240v2M624.5 263v2M624.5 545v2M624.5 568v2M625.5 241v2M625.5 263v2M625.5 545v2M625.5 568v2M627.5 241v2M627.5 264v2M627.5 545v2M627.5 568v2M628.5 241v2M628.5 264v2M628.5 545v2M628.5 567v2M629.5 242v2M629.5 264v2M629.5 545v2M629.5 567v2M630.5 242v2M630.5 264v2M630.5 545v2M630.5 567v2M631.5 242v2M631.5 265v2M631.5 545v2M631.5 567v2M632.5 242v2M632.5 265v2M632.5 544v2M632.5 567v2M633.5 243v2M633.5 265v2M633.5 544v2M633.5 567v2M634.5 243v2M634.5 265v2M634.5 544v2M634.5 567v2M635.5 243v2M635.5 266v2M635.5 544v2M635.5 567v2M636.5 243v2M636.5 266v2M636.5 544v2M636.5 567v2M637.5 244v2M637.5 266v2M637.5 544v2M637.5 566v2M638.5 244v2M638.5 266v2M638.5 544v2M638.5 566v2M639.5 244v2M639.5 267v2M639.5 544v2M639.5 566v2M640.5 244v2M640.5 267v2M640.5 544v2M640.5 566v2M641.5 245v2M641.5 267v2M641.5 544v2M641.5 566v2M642.5 245v2M642.5 267v2M642.5 543v2M642.5 566v2M643.5 245v2M643.5 268v2M643.5 543v2M643.5 566v2M644.5 246v2M644.5 268v2M644.5 543v2M644.5 566v2M645.5 246v2M645.5 268v2M645.5 543v2M645.5 565v2M647.5 246v2M647.5 269v2M647.5 543v2M647.5 565v2M648.5 247v2M648.5 269v2M648.5 543v2M648.5 565v2M649.5 247v2M649.5 269v2M649.5 543v2M649.5 565v2M650.5 247v2M650.5 269v2M650.5 543v2M650.5 565v2M651.5 247v2M651.5 270v2M651.5 542v2M651.5 565v2M652.5 248v2M652.5 270v2M652.5 542v2M652.5 565v2M653.5 248v2M653.5 270v2M653.5 542v2M653.5 565v2M654.5 248v2M654.5 271v2M654.5 542v2M654.5 564v2M655.5 248v2M655.5 271v2M655.5 542v2M655.5 564v2M656.5 249v2M656.5 271v2M656.5 542v2M656.5 564v2M657.5 249v2M657.5 271v2M657.5 542v2M657.5 564v2M658.5 249v2M658.5 272v2M658.5 542v2M658.5 564v2M659.5 250v2M659.5 272v2M659.5 541v2M659.5 564v2M660.5 250v2M660.5 272v2M660.5 541v2M660.5 564v2M661.5 250v2M661.5 272v2M661.5 541v2M661.5 564v2M662.5 250v2M662.5 273v3M662.5 541v2M662.5 564v2M663.5 251v2M663.5 273v3M663.5 541v2M663.5 563v2M664.5 251v2M664.5 273v3M664.5 541v2M664.5 563v2M665.5 251v2M665.5 274v2M665.5 541v2M665.5 563v2M667.5 252v2M667.5 274v2M667.5 541v2M667.5 563v2M668.5 252v2M668.5 274v2M668.5 540v2M668.5 563v2M669.5 252v2M669.5 275v2M669.5 540v2M669.5 563v2M670.5 253v2M670.5 275v2M670.5 540v2M670.5 563v2M671.5 253v2M671.5 275v2M671.5 540v2M671.5 562v2M672.5 253v2M672.5 275v2M672.5 540v2M672.5 562v2M673.5 253v2M673.5 276v2M673.5 540v2M673.5 562v2M674.5 254v2M674.5 276v2M674.5 540v2M674.5 562v2M675.5 254v2M675.5 276v2M675.5 540v2M675.5 562v2M676.5 254v2M676.5 277v2M676.5 539v2M676.5 562v2M677.5 254v2M677.5 277v2M677.5 539v2M677.5 562v2M678.5 255v2M678.5 277v2M678.5 539v2M678.5 562v2M679.5 255v2M679.5 277v2M679.5 539v2M679.5 562v2M680.5 255v2M680.5 278v2M680.5 539v2M680.5 561v2M681.5 255v2M681.5 278v2M681.5 539v2M681.5 561v2M682.5 256v2M682.5 278v2M682.5 539v2M682.5 561v2M683.5 256v2M683.5 278v2M683.5 539v2M683.5 561v2M684.5 256v2M684.5 279v2M684.5 538v2M684.5 561v2M685.5 257v2M685.5 279v2M685.5 538v2M685.5 561v2M687.5 257v2M687.5 280v2M687.5 538v2M687.5 561v2M688.5 257v2M688.5 280v2M688.5 538v2M688.5 560v2M689.5 258v2M689.5 280v2M689.5 538v2M689.5 560v2M690.5 258v2M690.5 280v2M690.5 538v2M690.5 560v2M691.5 258v2M691.5 281v2M691.5 537v2M691.5 560v2M692.5 258v2M692.5 281v2M692.5 537v2M692.5 560v2M693.5 259v2M693.5 281v2M693.5 537v2M693.5 560v2M694.5 259v2M694.5 282v2M694.5 537v2M694.5 560v2M695.5 259v2M695.5 282v2M695.5 537v2M695.5 560v2M696.5 259v2M696.5 282v2M696.5 537v2M696.5 559v2M697.5 260v2M697.5 282v2M697.5 537v2M697.5 559v2M698.5 260v2M698.5 283v2M698.5 536v2M698.5 559v2M699.5 260v2M699.5 283v2M699.5 536v2M699.5 559v2M700.5 261v2M700.5 283v2M700.5 536v2M700.5 559v2M701.5 261v2M701.5 283v2M701.5 536v2M701.5 559v2M702.5 261v2M702.5 284v2M702.5 536v2M702.5 559v2M703.5 261v2M703.5 284v2M703.5 536v2M703.5 558v2M704.5 262v2M704.5 284v2M704.5 536v2M704.5 558v2M705.5 262v2M705.5 285v2M705.5 535v2M705.5 558v2M707.5 262v2M707.5 285v2M707.5 535v2M707.5 558v2M708.5 263v2M708.5 285v2M708.5 535v2M708.5 558v2M709.5 263v2M709.5 286v2M709.5 535v2M709.5 558v2M710.5 263v2M710.5 286v2M710.5 535v2M710.5 558v2M711.5 263v2M711.5 286v2M711.5 535v2M711.5 557v2M712.5 264v2M712.5 286v2M712.5 534v2M712.5 557v2M713.5 264v2M713.5 287v2M713.5 534v2M713.5 557v2M714.5 264v2M714.5 287v2M714.5 534v2M714.5 557v2M715.5 264v2M715.5 287v2M715.5 534v2M715.5 557v2M716.5 265v2M716.5 287v2M716.5 534v2M716.5 557v2M717.5 265v2M717.5 288v2M717.5 534v2M717.5 557v2M718.5 265v2M718.5 288v2M718.5 533v3M718.5 556v2M719.5 265v2M719.5 288v2M719.5 533v3M719.5 556v2M720.5 265v2M720.5 289v2M720.5 533v3M720.5 556v2M721.5 266v2M721.5 289v2M721.5 533v3M721.5 556v2M722.5 266v2M722.5 289v2M722.5 533v3M722.5 556v2M723.5 266v2M723.5 289v2M723.5 533v3M723.5 556v2M724.5 266v2M724.5 290v2M724.5 532v2M724.5 556v2M725.5 267v2M725.5 290v2M725.5 532v2M725.5 555v2M727.5 267v2M727.5 290v2M727.5 532v2M727.5 555v2M728.5 267v2M728.5 291v2M728.5 532v2M728.5 555v2M729.5 268v2M729.5 291v2M729.5 532v2M729.5 555v2M730.5 268v2M730.5 291v2M730.5 531v2M730.5 555v2M731.5 268v2M731.5 291v2M731.5 531v2M731.5 555v2M732.5 268v2M732.5 292v2M732.5 531v2M732.5 554v2M733.5 268v2M733.5 292v2M733.5 531v2M733.5 554v2M734.5 269v2M734.5 292v2M734.5 531v2M734.5 554v2M735.5 269v2M735.5 292v2M735.5 530v2M735.5 554v2M736.5 269v2M736.5 293v2M736.5 530v2M736.5 554v2M737.5 269v2M737.5 293v2M737.5 530v2M737.5 554v2M738.5 269v2M738.5 293v2M738.5 530v2M738.5 553v2M739.5 270v2M739.5 293v2M739.5 530v2M739.5 553v2M740.5 270v2M740.5 293v2M740.5 530v2M740.5 553v2M741.5 270v2M741.5 294v2M741.5 529v2M741.5 553v2M742.5 270v2M742.5 294v2M742.5 529v2M742.5 553v2M743.5 271v2M743.5 294v2M743.5 529v2M743.5 553v2M744.5 271v2M744.5 294v2M744.5 529v2M744.5 552v2M745.5 271v2M745.5 295v2M745.5 529v2M745.5 552v2M747.5 271v2M747.5 295v2M747.5 528v2M747.5 552v2M748.5 271v2M748.5 295v2M748.5 528v2M748.5 552v2M749.5 272v2M749.5 295v2M749.5 528v2M749.5 552v2M750.5 272v2M750.5 296v2M750.5 528v2M750.5 551v2M751.5 272v2M751.5 296v2M751.5 527v2M751.5 551v2M752.5 272v2M752.5 296v2M752.5 527v2M752.5 551v2M753.5 272v2M753.5 296v2M753.5 527v2M753.5 551v2M754.5 273v3M754.5 297v2M754.5 527v2M754.5 551v2M755.5 273v3M755.5 297v2M755.5 527v2M755.5 551v2M756.5 273v3M756.5 297v2M756.5 526v2M756.5 550v2M757.5 273v3M757.5 297v2M757.5 526v2M757.5 550v2M758.5 273v3M758.5 297v2M758.5 526v2M758.5 550v2M759.5 273v3M759.5 298v2M759.5 526v2M759.5 550v2M760.5 274v2M760.5 298v2M760.5 526v2M760.5 550v2M761.5 274v2M761.5 298v2M761.5 525v2M761.5 550v2M762.5 274v2M762.5 298v2M762.5 525v2M762.5 549v2M763.5 274v2M763.5 298v2M763.5 525v2M763.5 549v2M764.5 274v2M764.5 299v3M764.5 525v2M764.5 549v2M765.5 274v2M765.5 299v3M765.5 525v2M765.5 549v2M767.5 275v2M767.5 299v3M767.5 524v2M767.5 549v2M768.5 275v2M768.5 299v3M768.5 524v2M768.5 548v2M769.5 275v2M769.5 299v3M769.5 524v2M769.5 548v2M770.5 275v2M770.5 300v2M770.5 524v2M770.5 548v2M771.5 275v2M771.5 300v2M771.5 523v2M771.5 548v2M772.5 275v2M772.5 300v2M772.5 523v2M772.5 548v2M773.5 275v2M773.5 300v2M773.5 523v2M773.5 547v2M774.5 276v2M774.5 300v2M774.5 523v2M774.5 547v2M775.5 276v2M775.5 300v2M775.5 522v2M775.5 547v2M776.5 276v2M776.5 301v2M776.5 522v2M776.5 547v2M777.5 276v2M777.5 301v2M777.5 522v2M777.5 547v2M778.5 276v2M778.5 301v2M778.5 522v2M778.5 547v2M779.5 276v2M779.5 301v2M779.5 522v2M779.5 546v2M780.5 276v2M780.5 301v2M780.5 521v2M780.5 546v2M781.5 276v2M781.5 301v2M781.5 521v2M781.5 546v2M782.5 277v2M782.5 301v2M782.5 521v2M782.5 546v2M783.5 277v2M783.5 302v2M783.5 521v2M783.5 546v2M784.5 277v2M784.5 302v2M784.5 521v2M784.5 545v2M785.5 277v2M785.5 302v2M785.5 520v2M785.5 545v2M787.5 277v2M787.5 302v2M787.5 520v2M787.5 545v2M788.5 277v2M788.5 302v2M788.5 520v2M788.5 545v2M789.5 277v2M789.5 302v2M789.5 519v2M789.5 545v2M790.5 277v2M790.5 302v2M790.5 519v2M790.5 544v2M791.5 277v2M791.5 303v2M791.5 519v2M791.5 544v2M792.5 277v2M792.5 303v2M792.5 519v2M792.5 544v2M793.5 277v2M793.5 303v2M793.5 519v2M793.5 544v2M794.5 278v2M794.5 303v2M794.5 518v2M794.5 544v2M795.5 278v2M795.5 303v2M795.5 518v2M795.5 543v2M796.5 278v2M796.5 303v2M796.5 518v2M796.5 543v2M797.5 278v2M797.5 303v2M797.5 518v2M797.5 543v2M798.5 278v2M798.5 303v2M798.5 518v2M798.5 543v2M799.5 278v2M799.5 303v2M799.5 517v2M799.5 543v2M800.5 278v2M800.5 303v2M800.5 517v2M800.5 543v2M801.5 278v2M801.5 303v2M801.5 517v2M801.5 542v2M802.5 278v2M802.5 304v2M802.5 517v2M802.5 542v2M803.5 278v2M803.5 304v2M803.5 516v2M803.5 542v2M804.5 278v2M804.5 304v2M804.5 516v2M804.5 542v2M805.5 278v2M805.5 304v2M805.5 516v2M805.5 542v2M807.5 278v2M807.5 304v2M807.5 516v2M807.5 541v2M808.5 278v2M808.5 304v2M808.5 515v2M808.5 541v2M809.5 278v2M809.5 304v2M809.5 515v2M809.5 541v2M810.5 278v2M810.5 304v2M810.5 515v2M810.5 541v2M811.5 278v2M811.5 304v2M811.5 515v2M811.5 541v2M812.5 278v2M812.5 304v2M812.5 515v2M812.5 540v2M813.5 278v2M813.5 304v2M813.5 514v2M813.5 540v2M814.5 278v2M814.5 304v2M814.5 514v2M814.5 540v2M815.5 278v2M815.5 304v2M815.5 514v2M815.5 540v2M816.5 278v2M816.5 304v2M816.5 514v2M816.5 540v2M817.5 278v2M817.5 304v2M817.5 514v2M817.5 540v2M818.5 278v2M818.5 304v2M818.5 513v2M818.5 539v2M819.5 278v2M819.5 304v2M819.5 513v2M819.5 539v2M820.5 278v2M820.5 304v2M820.5 513v2M820.5 539v2M821.5 278v2M821.5 304v2M821.5 513v2M821.5 539v2M822.5 278v2M822.5 304v2M822.5 513v2M822.5 539v2M823.5 278v2M823.5 304v2M823.5 512v2M823.5 539v2M824.5 278v2M824.5 304v2M824.5 512v2M824.5 538v2M825.5 278v2M825.5 304v2M825.5 512v2M825.5 538v2M827.5 278v2M827.5 304v2M827.5 512v2M827.5 538v2M828.5 278v2M828.5 304v2M828.5 512v2M828.5 538v2M829.5 278v2M829.5 304v2M829.5 511v2M829.5 538v2M830.5 278v2M830.5 304v2M830.5 511v2M830.5 537v2M831.5 278v2M831.5 304v2M831.5 511v2M831.5 537v2M832.5 278v2M832.5 304v2M832.5 511v2M832.5 537v2M833.5 278v2M833.5 304v2M833.5 511v2M833.5 537v2M834.5 278v2M834.5 304v2M834.5 511v2M834.5 537v2M835.5 278v2M835.5 304v2M835.5 510v2M835.5 537v2M836.5 278v2M836.5 304v2M836.5 510v2M836.5 537v2M837.5 278v2M837.5 304v2M837.5 510v2M837.5 536v2M838.5 278v2M838.5 304v2M838.5 510v2M838.5 536v2M839.5 278v2M839.5 304v2M839.5 510v2M839.5 536v2M840.5 277v2M840.5 304v2M840.5 510v2M840.5 536v2M841.5 277v2M841.5 304v2M841.5 509v2M841.5 536v2M842.5 277v2M842.5 304v2M842.5 509v2M842.5 536v2M843.5 277v2M843.5 304v2M843.5 509v2M843.5 536v2M844.5 277v2M844.5 303v2M844.5 509v2M844.5 535v2M845.5 277v2M845.5 303v2M845.5 509v2M845.5 535v2M847.5 277v2M847.5 303v2M847.5 509v2M847.5 535v2M848.5 277v2M848.5 303v2M848.5 509v2M848.5 535v2M849.5 277v2M849.5 303v2M849.5 508v2M849.5 535v2M850.5 277v2M850.5 303v2M850.5 508v2M850.5 535v2M851.5 276v2M851.5 303v2M851.5 508v2M851.5 535v2M852.5 276v2M852.5 303v2M852.5 508v2M852.5 534v2M853.5 276v2M853.5 303v2M853.5 508v2M853.5 534v2M854.5 276v2M854.5 303v2M854.5 508v2M854.5 534v2M855.5 276v2M855.5 302v2M855.5 508v2M855.5 534v2M856.5 276v2M856.5 302v2M856.5 508v2M856.5 534v2M857.5 276v2M857.5 302v2M857.5 508v2M857.5 534v2M858.5 276v2M858.5 302v2M858.5 507v3M858.5 534v2M859.5 276v2M859.5 302v2M859.5 507v3M859.5 534v2M860.5 275v2M860.5 302v2M860.5 507v3M860.5 534v2M861.5 275v2M861.5 302v2M861.5 507v3M861.5 534v2M862.5 275v2M862.5 302v2M862.5 507v3M862.5 533v3M863.5 275v2M863.5 301v2M863.5 507v3M863.5 533v3M864.5 275v2M864.5 301v2M864.5 507v3M864.5 533v3M865.5 275v2M865.5 301v2M865.5 507v3M865.5 533v3M867.5 275v2M867.5 301v2M867.5 507v3M867.5 533v3M868.5 274v2M868.5 301v2M868.5 507v3M868.5 533v3M869.5 274v2M869.5 301v2M869.5 507v3M869.5 533v3M870.5 274v2M870.5 300v2M870.5 507v3M870.5 533v3M871.5 274v2M871.5 300v2M871.5 506v2M871.5 533v3M872.5 274v2M872.5 300v2M872.5 506v2M872.5 533v3M873.5 274v2M873.5 300v2M873.5 506v2M873.5 533v3M874.5 273v3M874.5 300v2M874.5 506v2M874.5 533v3"/>
<path stroke="#68d0bc" d="M144.5 276v4M148.5 276v7M150.5 274v10M152.5 274v11M154.5 274v13M156.5 273v15M158.5 273v17M160.5 273v18M162.5 273v20M164.5 274v20M168.5 277v18M170.5 278v17M170.5 297v2M172.5 280v14M172.5 296v4M174.5 281v13M174.5 296v6M176.5 283v10M176.5 295v8M178.5 284v9M178.5 295v9M180.5 286v6M180.5 294v12M182.5 287v5M182.5 294v13M184.5 289v3M184.5 294v15M188.5 293v19M190.5 293v20M192.5 295v20M194.5 296v20M196.5 298v20M198.5 299v20M200.5 302v19M202.5 302v20M204.5 304v20M208.5 307v21M210.5 308v20M212.5 310v20M214.5 311v21M216.5 313v20M218.5 314v21M220.5 316v20M222.5 318v20M224.5 319v20M228.5 322v20M230.5 324v20M232.5 325v21M234.5 328v19M236.5 329v20M238.5 330v20M240.5 332v20M242.5 333v21M244.5 335v20M248.5 338v20M250.5 340v20M252.5 341v21M254.5 343v20M256.5 345v20M258.5 346v20M260.5 348v20M262.5 349v21M264.5 351v20M268.5 354v21M270.5 356v20M272.5 358v20M274.5 359v21M276.5 361v20M278.5 363v20M280.5 364v21M282.5 366v20M284.5 368v20M288.5 371v20M290.5 373v20M292.5 375v20M294.5 376v21M296.5 378v20M298.5 380v20M300.5 382v20M302.5 383v21M304.5 385v20M308.5 389v20M310.5 390v21M312.5 392v20M314.5 394v20M316.5 396v20M318.5 397v21M320.5 399v20M322.5 401v20M324.5 403v20M328.5 407v20M330.5 408v21M332.5 410v20M334.5 412v20M336.5 414v20M338.5 416v20M340.5 418v20M342.5 419v21M344.5 421v20M348.5 425v20M350.5 427v20M352.5 429v20M354.5 432v19M356.5 432v21M358.5 434v21M360.5 241v2M360.5 436v20M362.5 241v4M362.5 438v20M364.5 241v6M364.5 440v20M368.5 240v10M368.5 444v20M370.5 240v12M370.5 446v20M372.5 240v14M372.5 448v20M374.5 239v17M374.5 450v20M376.5 239v19M376.5 452v20M378.5 240v20M378.5 453v21M380.5 242v17M380.5 261v1M380.5 455v21M382.5 244v15M382.5 261v3M382.5 458v20M384.5 246v13M384.5 261v5M384.5 459v21M388.5 250v8M388.5 260v10M388.5 463v21M390.5 252v6M390.5 260v12M390.5 465v20M392.5 254v4M392.5 260v14M392.5 467v20M394.5 256v2M394.5 260v16M394.5 469v20M396.5 260v18M396.5 471v20M398.5 260v20M398.5 473v20M400.5 262v20M400.5 475v20M402.5 264v20M402.5 477v20M404.5 266v20M404.5 479v20M408.5 270v20M408.5 484v19M410.5 272v20M410.5 485v20M412.5 274v20M412.5 487v20M414.5 276v20M414.5 489v21M416.5 278v20M416.5 491v20M418.5 280v20M418.5 493v20M420.5 282v20M420.5 495v20M422.5 284v20M422.5 497v20M424.5 286v20M424.5 499v20M428.5 290v20M428.5 502v21M430.5 292v20M430.5 504v21M432.5 294v20M432.5 506v21M434.5 296v20M434.5 508v21M436.5 298v20M436.5 510v21M438.5 300v20M438.5 512v21M440.5 302v20M440.5 514v22M442.5 304v20M442.5 516v20M444.5 306v20M444.5 518v20M448.5 310v20M448.5 522v20M450.5 312v20M450.5 524v20M452.5 314v20M452.5 526v20M454.5 316v20M454.5 528v20M456.5 318v20M456.5 530v20M458.5 320v20M458.5 532v20M460.5 322v20M460.5 534v20M462.5 324v20M462.5 536v20M464.5 326v20M464.5 538v20M468.5 330v20M468.5 542v17M468.5 561v1M470.5 332v20M470.5 544v15M470.5 561v3M472.5 334v20M472.5 546v13M472.5 561v5M474.5 336v20M474.5 548v11M474.5 561v7M476.5 338v20M476.5 549v10M476.5 561v9M478.5 340v20M478.5 551v8M478.5 561v11M480.5 342v20M480.5 553v6M480.5 561v12M482.5 343v21M482.5 555v4M482.5 561v14M484.5 345v21M484.5 557v2M484.5 561v16M488.5 349v20M488.5 561v20M490.5 351v20M490.5 563v20M492.5 354v19M492.5 565v18M494.5 355v20M494.5 567v16M496.5 357v20M496.5 569v13M498.5 359v21M498.5 570v12M500.5 361v20M500.5 572v10M502.5 363v20M502.5 574v8M504.5 365v20M504.5 576v6M508.5 369v20M508.5 580v2M510.5 370v21M512.5 372v20M514.5 374v20M516.5 376v20M518.5 378v20M520.5 380v20M522.5 382v20M524.5 383v21M528.5 387v20M530.5 389v20M532.5 391v20M534.5 393v20M536.5 394v21M538.5 396v20M540.5 398v20M542.5 400v20M544.5 402v20M548.5 405v20M550.5 407v20M552.5 409v20M554.5 411v21M556.5 412v20M558.5 414v20M560.5 416v20M562.5 418v20M564.5 419v20M568.5 423v20M570.5 424v21M572.5 426v20M574.5 428v20M576.5 430v20M578.5 432v19M580.5 433v20M582.5 435v20M584.5 436v20M588.5 440v20M590.5 441v20M592.5 443v20M594.5 445v20M596.5 446v20M598.5 448v20M600.5 449v21M602.5 451v20M604.5 453v20M608.5 456v20M610.5 458v20M612.5 459v20M614.5 461v20M616.5 462v20M618.5 464v20M620.5 465v21M622.5 467v20M624.5 469v20M628.5 472v20M630.5 473v20M632.5 475v20M634.5 476v20M636.5 478v20M638.5 479v21M640.5 481v20M642.5 482v21M644.5 484v20M648.5 487v20M650.5 489v21M652.5 490v20M654.5 492v20M656.5 493v20M658.5 495v20M660.5 496v20M662.5 498v20M664.5 499v20M668.5 502v20M670.5 503v21M672.5 505v20M674.5 506v20M676.5 508v20M678.5 510v19M680.5 511v20M682.5 512v20M684.5 514v20M688.5 516v21M690.5 518v20M692.5 519v18M694.5 521v16M694.5 539v2M696.5 522v15M696.5 539v3M698.5 524v12M698.5 538v6M700.5 525v11M700.5 538v7M702.5 526v10M702.5 538v9M704.5 528v8M704.5 538v10M708.5 531v4M708.5 537v14M710.5 532v3M710.5 537v15M712.5 533v1M712.5 536v18M714.5 536v19M716.5 536v20M718.5 538v18M720.5 539v17M722.5 540v16M724.5 542v14M728.5 545v10M730.5 546v9M732.5 547v7M734.5 549v5M736.5 550v4M738.5 551v2"/>
<path stroke="#80ff80" d="M144.5 280v20M148.5 283v16M148.5 302v1M150.5 284v15M150.5 302v2M152.5 285v13M152.5 300v6M154.5 287v11M154.5 300v7M156.5 288v9M156.5 299v10M158.5 290v7M158.5 299v11M160.5 291v6M160.5 299v13M162.5 293v3M162.5 298v15M164.5 294v2M164.5 298v17M168.5 297v21M170.5 299v20M172.5 300v20M174.5 302v20M176.5 303v20M178.5 304v21M180.5 306v20M182.5 307v21M184.5 309v20M188.5 312v20M190.5 313v21M192.5 315v20M194.5 316v21M196.5 318v20M198.5 319v21M200.5 321v20M202.5 322v21M204.5 324v20M208.5 328v19M210.5 328v21M212.5 330v21M214.5 332v20M216.5 333v21M218.5 335v20M220.5 336v21M222.5 338v20M224.5 339v21M228.5 342v21M230.5 344v21M232.5 346v20M234.5 347v21M236.5 349v20M238.5 350v21M240.5 352v20M242.5 354v20M244.5 355v21M248.5 358v22M250.5 360v20M252.5 362v20M254.5 363v21M256.5 365v20M258.5 366v21M260.5 368v21M262.5 370v20M264.5 371v21M268.5 375v20M270.5 376v21M272.5 378v21M274.5 380v20M276.5 381v21M278.5 383v21M280.5 385v20M282.5 386v21M284.5 388v21M288.5 391v21M290.5 393v21M292.5 395v20M294.5 397v20M296.5 398v21M298.5 400v21M300.5 402v20M302.5 404v20M304.5 405v21M308.5 409v20M310.5 411v21M312.5 412v21M314.5 414v21M316.5 416v21M318.5 418v20M320.5 419v21M322.5 421v21M324.5 423v21M328.5 427v20M330.5 429v20M332.5 430v21M334.5 432v21M336.5 434v21M338.5 436v20M340.5 438v20M342.5 440v20M344.5 441v21M348.5 445v21M350.5 447v21M352.5 449v20M354.5 451v20M356.5 453v20M358.5 455v20M360.5 456v21M362.5 458v21M364.5 460v21M368.5 464v21M370.5 466v21M372.5 468v20M374.5 470v20M376.5 472v20M378.5 239v1M378.5 474v20M380.5 238v4M380.5 476v20M382.5 238v6M382.5 478v20M384.5 238v8M384.5 480v20M388.5 237v13M388.5 484v20M390.5 237v15M390.5 485v21M392.5 237v17M392.5 487v21M394.5 237v19M394.5 489v21M396.5 237v21M396.5 491v21M398.5 239v18M398.5 259v1M398.5 493v21M400.5 241v16M400.5 259v3M400.5 495v21M402.5 243v14M402.5 259v5M402.5 497v21M404.5 245v12M404.5 259v7M404.5 499v21M408.5 249v7M408.5 258v12M408.5 503v21M410.5 251v5M410.5 258v14M410.5 505v20M412.5 253v3M412.5 258v16M412.5 507v20M414.5 257v19M414.5 510v19M416.5 257v21M416.5 511v20M418.5 259v21M418.5 513v20M420.5 261v21M420.5 515v21M422.5 263v21M422.5 517v20M424.5 265v21M424.5 519v20M428.5 269v21M428.5 523v20M430.5 271v21M430.5 525v20M432.5 273v21M432.5 527v20M434.5 276v20M434.5 529v20M436.5 277v21M436.5 531v20M438.5 279v21M438.5 533v20M440.5 281v21M440.5 536v19M442.5 283v21M442.5 536v21M444.5 285v21M444.5 538v21M448.5 289v21M448.5 542v17M448.5 561v2M450.5 291v21M450.5 544v15M450.5 561v4M452.5 293v21M452.5 546v13M452.5 561v6M454.5 295v21M454.5 548v11M454.5 561v8M456.5 297v21M456.5 550v9M456.5 561v10M458.5 299v21M458.5 552v7M458.5 561v12M460.5 302v20M460.5 554v5M460.5 561v14M462.5 303v21M462.5 556v3M462.5 561v16M464.5 305v21M464.5 558v1M464.5 561v17M468.5 309v21M468.5 562v20M470.5 311v21M470.5 564v19M472.5 313v21M472.5 566v17M474.5 315v21M474.5 568v15M476.5 317v21M476.5 570v13M478.5 319v21M478.5 572v11M480.5 321v21M480.5 573v10M482.5 323v20M482.5 575v8M484.5 325v20M484.5 577v6M488.5 329v20M488.5 581v2M490.5 331v20M492.5 333v21M494.5 335v20M496.5 337v20M498.5 339v20M500.5 340v21M502.5 342v21M504.5 344v21M508.5 348v21M510.5 350v20M512.5 352v20M514.5 354v20M516.5 356v20M518.5 357v21M520.5 359v21M522.5 361v21M524.5 363v20M528.5 367v20M530.5 369v20M532.5 370v21M534.5 372v21M536.5 374v20M538.5 376v20M540.5 378v20M542.5 380v20M544.5 381v21M548.5 385v20M550.5 387v20M552.5 388v21M554.5 390v21M556.5 392v20M558.5 394v20M560.5 395v21M562.5 397v21M564.5 399v20M568.5 402v21M570.5 404v20M572.5 406v20M574.5 407v21M576.5 409v21M578.5 411v21M580.5 413v20M582.5 414v21M584.5 416v20M588.5 419v21M590.5 421v20M592.5 423v20M594.5 424v21M596.5 426v20M598.5 427v21M600.5 429v20M602.5 432v19M604.5 432v21M608.5 436v20M610.5 437v21M612.5 439v20M614.5 440v21M616.5 442v20M618.5 443v21M620.5 445v20M622.5 447v20M624.5 448v21M628.5 451v21M630.5 453v20M632.5 454v21M634.5 456v20M636.5 458v20M638.5 459v20M640.5 461v20M642.5 462v20M644.5 464v20M648.5 467v20M650.5 468v21M652.5 470v20M654.5 471v21M656.5 473v20M658.5 474v21M660.5 476v20M662.5 477v21M664.5 479v20M668.5 481v21M670.5 484v19M672.5 484v21M674.5 486v20M676.5 487v21M678.5 489v21M680.5 490v21M682.5 492v20M684.5 493v21M688.5 496v20M690.5 497v21M692.5 499v20M694.5 500v21M696.5 502v20M698.5 503v21M700.5 504v21M702.5 506v20M704.5 507v21M708.5 510v21M710.5 511v21M712.5 513v20M714.5 514v20M716.5 516v18M718.5 517v16M718.5 536v2M720.5 518v15M720.5 536v3M722.5 520v13M722.5 536v4M724.5 521v11M724.5 534v8M728.5 524v8M728.5 534v11M730.5 525v6M730.5 533v13M732.5 527v4M732.5 533v14M734.5 528v3M734.5 533v16M736.5 529v1M736.5 532v18M738.5 532v19M740.5 532v21M742.5 534v19M744.5 536v16M748.5 538v14M750.5 539v12M752.5 540v11M754.5 542v9M756.5 543v7M758.5 544v6M760.5 546v4M762.5 547v2M764.5 548v1M874.5 276v1"/>
<path stroke="#00a000" d="M144.5 302v19M148.5 303v21M150.5 304v21M152.5 306v22M154.5 307v21M156.5 309v21M158.5 310v21M160.5 312v21M162.5 313v21M164.5 315v21M168.5 318v21M170.5 319v21M172.5 320v22M174.5 322v21M176.5 323v21M178.5 325v21M180.5 326v21M182.5 328v21M184.5 329v21M188.5 332v22M190.5 334v21M192.5 335v21M194.5 337v21M196.5 338v21M198.5 340v21M200.5 341v21M202.5 343v21M204.5 344v22M208.5 347v22M210.5 349v21M212.5 351v21M214.5 352v21M216.5 354v21M218.5 355v21M220.5 357v21M222.5 358v22M224.5 360v21M228.5 363v21M230.5 365v21M232.5 366v21M234.5 368v21M236.5 369v21M238.5 371v21M240.5 372v22M242.5 374v21M244.5 376v21M248.5 380v20M250.5 380v22M252.5 382v21M254.5 384v21M256.5 385v21M258.5 387v21M260.5 389v21M262.5 390v21M264.5 392v21M268.5 395v21M270.5 397v21M272.5 399v21M274.5 400v21M276.5 402v21M278.5 404v21M280.5 405v21M282.5 407v21M284.5 409v21M288.5 412v21M290.5 414v21M292.5 415v22M294.5 417v21M296.5 419v21M298.5 421v21M300.5 422v22M302.5 424v21M304.5 426v21M308.5 429v22M310.5 432v20M312.5 433v21M314.5 435v21M316.5 437v21M318.5 438v21M320.5 440v21M322.5 442v21M324.5 444v21M328.5 447v22M330.5 449v21M332.5 451v21M334.5 453v21M336.5 455v21M338.5 456v22M340.5 458v22M342.5 460v21M344.5 462v22M348.5 466v21M350.5 468v21M352.5 469v22M354.5 471v22M356.5 473v21M358.5 475v21M360.5 477v21M362.5 479v21M364.5 481v21M368.5 485v21M370.5 487v21M372.5 488v22M374.5 490v22M376.5 492v22M378.5 494v21M380.5 496v21M382.5 498v21M384.5 500v21M388.5 504v21M390.5 506v21M392.5 508v21M394.5 510v21M396.5 236v1M396.5 512v21M398.5 236v3M398.5 514v22M400.5 236v5M400.5 516v21M402.5 235v8M402.5 518v21M404.5 235v10M404.5 520v21M408.5 235v14M408.5 524v21M410.5 234v17M410.5 525v22M412.5 234v19M412.5 527v22M414.5 234v21M414.5 529v22M416.5 236v19M416.5 531v22M418.5 238v17M418.5 257v2M418.5 533v21M420.5 240v15M420.5 257v4M420.5 536v20M422.5 242v12M422.5 256v7M422.5 537v20M424.5 244v10M424.5 256v9M424.5 539v19M428.5 248v6M428.5 256v13M428.5 543v15M428.5 560v4M430.5 250v4M430.5 256v15M430.5 545v13M430.5 560v6M432.5 252v1M432.5 255v18M432.5 547v11M432.5 560v8M434.5 255v21M434.5 549v9M434.5 560v10M436.5 256v21M436.5 551v7M436.5 560v12M438.5 258v21M438.5 553v6M438.5 561v13M440.5 260v21M440.5 555v4M440.5 561v15M442.5 262v21M442.5 557v2M442.5 561v17M444.5 264v21M444.5 561v19M448.5 268v21M448.5 563v20M450.5 270v21M450.5 565v18M452.5 272v21M452.5 567v16M454.5 274v21M454.5 569v14M456.5 276v21M456.5 571v12M458.5 278v21M458.5 573v10M460.5 280v22M460.5 575v8M462.5 282v21M462.5 577v6M464.5 284v21M464.5 578v5M468.5 288v21M468.5 582v1M470.5 290v21M472.5 292v21M474.5 294v21M476.5 296v21M478.5 298v21M480.5 300v21M482.5 302v21M484.5 304v21M488.5 308v21M490.5 310v21M492.5 312v21M494.5 314v21M496.5 316v21M498.5 318v21M500.5 319v21M502.5 321v21M504.5 323v21M508.5 328v20M510.5 329v21M512.5 331v21M514.5 333v21M516.5 335v21M518.5 337v20M520.5 338v21M522.5 340v21M524.5 342v21M528.5 346v21M530.5 348v21M532.5 349v21M534.5 351v21M536.5 354v20M538.5 355v21M540.5 357v21M542.5 359v21M544.5 360v21M548.5 364v21M550.5 366v21M552.5 367v21M554.5 369v21M556.5 371v21M558.5 373v21M560.5 374v21M562.5 376v21M564.5 378v21M568.5 381v21M570.5 383v21M572.5 385v21M574.5 386v21M576.5 388v21M578.5 390v21M580.5 392v21M582.5 393v21M584.5 395v21M588.5 398v21M590.5 400v21M592.5 402v21M594.5 403v21M596.5 405v21M598.5 406v21M600.5 408v21M602.5 410v22M604.5 411v21M608.5 415v21M610.5 416v21M612.5 418v21M614.5 419v21M616.5 421v21M618.5 423v20M620.5 424v21M622.5 426v21M624.5 427v21M628.5 430v21M630.5 432v21M632.5 433v21M634.5 435v21M636.5 436v22M638.5 438v21M640.5 440v21M642.5 441v21M644.5 443v21M648.5 446v21M650.5 447v21M652.5 449v21M654.5 450v21M656.5 452v21M658.5 453v21M660.5 455v21M662.5 456v21M664.5 458v21M668.5 460v21M670.5 462v22M672.5 463v21M674.5 465v21M676.5 466v21M678.5 468v21M680.5 469v21M682.5 471v21M684.5 472v21M688.5 475v21M690.5 476v21M692.5 478v21M694.5 479v21M696.5 481v21M698.5 482v21M700.5 484v20M702.5 485v21M704.5 486v21M708.5 489v21M710.5 490v21M712.5 492v21M714.5 493v21M716.5 495v21M718.5 496v21M720.5 497v21M722.5 499v21M724.5 500v21M728.5 503v21M730.5 504v21M732.5 506v21M734.5 507v21M736.5 508v21M738.5 510v20M740.5 511v19M742.5 512v17M742.5 531v3M744.5 514v15M744.5 531v5M748.5 516v12M748.5 530v8M750.5 518v10M750.5 530v9M752.5 519v8M752.5 529v11M754.5 520v7M754.5 529v13M756.5 522v4M756.5 528v15M758.5 523v3M758.5 528v16M760.5 524v2M760.5 528v18M762.5 527v20M764.5 527v21M768.5 530v18M770.5 531v17M772.5 532v16M774.5 534v13M776.5 536v11M778.5 536v11M780.5 538v8M782.5 539v7M784.5 540v5M788.5 543v2M848.5 279v2M850.5 279v3M852.5 278v6M854.5 278v7M856.5 278v8M858.5 278v10M860.5 277v12M862.5 277v14M864.5 277v15M868.5 276v19M870.5 276v20M872.5 276v21M874.5 277v22"/>
<path stroke="#ff8040" d="M144.5 321v23M148.5 324v23M150.5 325v24M152.5 328v22M154.5 328v24M156.5 330v24M158.5 331v24M160.5 333v23M162.5 334v24M164.5 336v23M168.5 339v23M170.5 340v23M172.5 342v23M174.5 343v23M176.5 344v24M178.5 346v23M180.5 347v24M182.5 349v23M184.5 350v24M188.5 354v23M190.5 355v23M192.5 356v24M194.5 358v23M196.5 359v24M198.5 361v24M200.5 362v24M202.5 364v24M204.5 366v23M208.5 369v23M210.5 370v24M212.5 372v23M214.5 373v24M216.5 375v23M218.5 376v24M220.5 378v23M222.5 380v23M224.5 381v24M228.5 384v24M230.5 386v23M232.5 387v24M234.5 389v23M236.5 390v24M238.5 392v24M240.5 394v23M242.5 395v24M244.5 397v23M248.5 400v24M250.5 402v23M252.5 403v24M254.5 405v24M256.5 406v24M258.5 408v24M260.5 410v23M262.5 411v24M264.5 413v24M268.5 416v24M270.5 418v24M272.5 420v23M274.5 421v24M276.5 423v24M278.5 425v23M280.5 426v24M282.5 428v24M284.5 430v24M288.5 433v25M290.5 435v24M292.5 437v23M294.5 438v24M296.5 440v24M298.5 442v24M300.5 444v23M302.5 445v24M304.5 447v24M308.5 451v23M310.5 452v24M312.5 454v24M314.5 456v24M316.5 458v23M318.5 459v25M320.5 461v24M322.5 463v24M324.5 465v24M328.5 469v23M330.5 470v24M332.5 472v24M334.5 474v24M336.5 476v24M338.5 478v23M340.5 480v23M342.5 481v24M344.5 484v23M348.5 487v24M350.5 489v24M352.5 491v23M354.5 493v23M356.5 494v24M358.5 496v24M360.5 498v24M362.5 500v24M364.5 502v24M368.5 506v24M370.5 508v23M372.5 510v23M374.5 512v24M376.5 514v23M378.5 515v24M380.5 517v24M382.5 519v24M384.5 521v24M388.5 525v24M390.5 527v24M392.5 529v24M394.5 531v23M396.5 533v21M396.5 556v1M398.5 536v19M398.5 557v2M400.5 537v18M400.5 557v3M402.5 539v16M402.5 557v5M404.5 541v14M404.5 557v7M408.5 545v11M408.5 558v10M410.5 547v9M410.5 558v12M412.5 549v7M412.5 558v14M414.5 551v6M414.5 559v15M416.5 234v2M416.5 553v4M416.5 559v17M418.5 233v5M418.5 554v3M418.5 559v19M420.5 233v7M420.5 556v1M420.5 559v21M422.5 233v9M422.5 559v22M424.5 233v11M424.5 560v21M428.5 232v16M428.5 564v18M430.5 232v18M430.5 566v16M432.5 231v21M432.5 568v14M434.5 231v22M434.5 570v12M436.5 233v20M436.5 255v1M436.5 572v10M438.5 235v18M438.5 255v3M438.5 574v9M440.5 237v16M440.5 255v5M440.5 576v7M442.5 239v13M442.5 254v8M442.5 578v5M444.5 241v11M444.5 254v10M444.5 580v3M448.5 245v7M448.5 254v14M450.5 247v5M450.5 254v16M452.5 249v2M452.5 253v19M454.5 253v21M456.5 253v23M458.5 255v23M460.5 257v23M462.5 259v23M464.5 261v23M468.5 265v23M470.5 267v23M472.5 269v23M474.5 271v23M476.5 273v23M478.5 276v22M480.5 277v23M482.5 279v23M484.5 281v23M488.5 284v24M490.5 286v24M492.5 288v24M494.5 290v24M496.5 292v24M498.5 294v24M500.5 296v23M502.5 298v23M504.5 300v23M508.5 304v24M510.5 306v23M512.5 307v24M514.5 309v24M516.5 311v24M518.5 313v24M520.5 315v23M522.5 317v23M524.5 319v23M528.5 322v24M530.5 324v24M532.5 326v23M534.5 328v23M536.5 330v24M538.5 332v23M540.5 333v24M542.5 335v24M544.5 337v23M548.5 341v23M550.5 342v24M552.5 344v23M554.5 346v23M556.5 348v23M558.5 349v24M560.5 351v23M562.5 354v22M564.5 355v23M568.5 358v23M570.5 360v23M572.5 361v24M574.5 363v23M576.5 365v23M578.5 367v23M580.5 368v24M582.5 370v23M584.5 372v23M588.5 375v23M590.5 377v23M592.5 378v24M594.5 380v23M596.5 382v23M598.5 383v23M600.5 385v23M602.5 386v24M604.5 388v23M608.5 391v24M610.5 393v23M612.5 394v24M614.5 396v23M616.5 398v23M618.5 399v24M620.5 401v23M622.5 402v24M624.5 404v23M628.5 407v23M630.5 408v24M632.5 410v23M634.5 412v23M636.5 413v23M638.5 415v23M640.5 416v24M642.5 418v23M644.5 419v24M648.5 422v24M650.5 424v23M652.5 425v24M654.5 427v23M656.5 428v24M658.5 430v23M660.5 432v23M662.5 433v23M664.5 434v24M668.5 437v23M670.5 438v24M672.5 440v23M674.5 441v24M676.5 443v23M678.5 444v24M680.5 446v23M682.5 447v24M684.5 448v24M688.5 451v24M690.5 453v23M692.5 454v24M694.5 456v23M696.5 458v23M698.5 458v24M700.5 460v24M702.5 461v24M704.5 463v23M708.5 465v24M710.5 467v23M712.5 468v24M714.5 470v23M716.5 471v24M718.5 472v24M720.5 474v23M722.5 475v24M724.5 476v24M728.5 479v24M730.5 480v24M732.5 482v24M734.5 484v23M736.5 485v23M738.5 486v24M740.5 487v24M742.5 489v23M744.5 490v24M748.5 493v23M750.5 494v24M752.5 495v24M754.5 497v23M756.5 498v24M758.5 499v24M760.5 501v23M762.5 502v23M764.5 503v22M768.5 506v18M768.5 526v4M770.5 507v17M770.5 526v5M772.5 510v13M772.5 525v7M774.5 510v13M774.5 525v9M776.5 511v11M776.5 524v12M778.5 513v9M778.5 524v12M780.5 514v7M780.5 523v15M782.5 515v6M782.5 523v16M784.5 517v4M784.5 523v17M788.5 519v1M788.5 522v21M790.5 521v23M792.5 522v22M794.5 523v21M796.5 524v19M798.5 526v17M800.5 527v16M802.5 528v14M804.5 530v12M808.5 532v9M810.5 534v7M812.5 536v4M814.5 280v1M814.5 536v4M816.5 280v3M816.5 538v2M818.5 280v4M820.5 280v6M822.5 280v7M824.5 280v8M828.5 280v11M830.5 280v13M832.5 280v14M834.5 280v15M836.5 280v17M838.5 280v18M840.5 279v20M842.5 279v23M844.5 279v23M848.5 281v22M850.5 282v21M850.5 305v1M852.5 284v19M852.5 305v3M854.5 285v18M854.5 305v4M856.5 286v16M856.5 304v7M858.5 288v14M858.5 304v8M860.5 289v13M860.5 304v9M862.5 291v11M862.5 304v11M864.5 292v9M864.5 303v13M868.5 295v6M868.5 303v16M870.5 296v4M870.5 302v18M872.5 297v3M872.5 302v20M874.5 299v1M874.5 302v21"/>
<path stroke="#000040" d="M144.5 344v65M145.5 302v204M147.5 302v204M148.5 347v31M149.5 302v204M150.5 349v12M151.5 300v206M153.5 300v206M155.5 300v206M157.5 299v207M159.5 299v207M161.5 298v208M163.5 298v208M164.5 495v11M165.5 298v208M167.5 297v209M168.5 464v42M169.5 297v209M170.5 448v59M171.5 296v211M172.5 432v75M173.5 296v211M174.5 413v94M175.5 296v211M176.5 393v114M177.5 295v212M178.5 370v137M179.5 295v212M180.5 371v136M181.5 294v213M182.5 372v135M183.5 294v214M184.5 374v134M185.5 293v215M187.5 293v215M188.5 377v131M189.5 292v216M190.5 378v130M191.5 292v216M192.5 380v123M193.5 292v217M194.5 381v108M195.5 291v218M196.5 383v92M197.5 291v218M198.5 385v76M199.5 290v219M200.5 386v61M201.5 290v220M202.5 388v44M203.5 289v221M204.5 389v26M205.5 289v221M207.5 288v223M209.5 288v223M211.5 287v224M213.5 287v225M215.5 287v225M217.5 286v226M219.5 286v227M221.5 285v228M223.5 285v229M224.5 500v14M225.5 284v230M227.5 284v230M228.5 465v50M229.5 284v231M230.5 446v69M231.5 283v232M232.5 424v92M233.5 283v233M234.5 412v104M235.5 282v234M236.5 414v102M237.5 282v235M238.5 416v101M239.5 282v235M240.5 417v100M241.5 281v237M242.5 419v99M243.5 281v237M244.5 420v98M245.5 280v239M247.5 280v239M248.5 424v95M249.5 280v239M250.5 425v95M251.5 279v241M252.5 427v86M253.5 279v241M254.5 429v70M255.5 279v242M256.5 430v54M257.5 278v243M258.5 432v36M259.5 278v244M260.5 433v17M261.5 278v244M263.5 277v246M265.5 277v247M267.5 276v248M269.5 276v249M271.5 276v249M273.5 276v250M275.5 276v250M277.5 276v251M279.5 276v251M281.5 274v254M282.5 519v9M283.5 274v254M284.5 499v30M285.5 274v255M287.5 273v256M288.5 458v72M289.5 273v257M290.5 459v71M291.5 273v257M292.5 460v71M293.5 272v259M294.5 462v69M295.5 272v259M296.5 464v68M297.5 272v260M298.5 466v66M299.5 272v261M300.5 467v66M301.5 271v262M302.5 469v64M303.5 271v263M304.5 471v63M305.5 271v263M307.5 270v265M308.5 474v61M309.5 270v265M310.5 476v60M311.5 270v266M312.5 478v43M313.5 270v266M314.5 480v24M315.5 269v268M316.5 481v4M317.5 269v268M319.5 269v269M321.5 269v269M323.5 268v271M325.5 268v271M327.5 268v272M329.5 268v272M331.5 267v274M333.5 267v274M335.5 267v275M337.5 267v275M339.5 266v277M340.5 534v9M341.5 266v277M342.5 510v34M343.5 266v278M344.5 507v37M345.5 266v278M347.5 265v280M348.5 511v34M349.5 265v280M350.5 513v32M351.5 265v281M352.5 514v32M353.5 265v281M354.5 516v30M355.5 264v283M356.5 518v29M357.5 264v283M358.5 520v27M359.5 264v283M360.5 522v26M361.5 264v284M362.5 524v24M363.5 263v285M364.5 526v23M365.5 263v286M367.5 263v286M368.5 530v19M369.5 263v287M370.5 531v7M371.5 263v287M373.5 262v288M375.5 262v289M377.5 262v289M379.5 262v289M381.5 261v291M383.5 261v291M385.5 261v292M387.5 261v292M389.5 260v293M391.5 260v294M393.5 260v294M395.5 260v294M397.5 259v295M399.5 259v296M401.5 259v296M403.5 259v296M405.5 258v298M407.5 258v298M409.5 258v298M411.5 258v298M413.5 258v299M415.5 257v300M417.5 257v300M419.5 257v300M421.5 257v300M423.5 256v302M425.5 256v302M427.5 256v302M429.5 256v302M431.5 255v303M433.5 255v303M435.5 255v303M437.5 255v304M439.5 255v304M441.5 254v305M443.5 254v305M445.5 254v305M447.5 254v305M449.5 254v305M451.5 253v306M453.5 253v306M455.5 253v306M457.5 253v306M459.5 253v306M461.5 253v306M463.5 252v307M465.5 252v307M467.5 252v307M469.5 252v307M471.5 252v307M473.5 252v307M475.5 251v308M477.5 251v308M479.5 251v308M480.5 254v23M481.5 251v308M482.5 251v28M483.5 251v308M484.5 251v30M485.5 251v308M487.5 251v308M488.5 251v33M489.5 251v308M490.5 251v35M491.5 251v307M492.5 251v37M493.5 251v307M494.5 251v39M495.5 251v307M496.5 250v42M497.5 250v308M498.5 250v44M499.5 250v308M500.5 250v46M501.5 250v308M502.5 250v48M503.5 250v308M504.5 250v50M505.5 250v308M507.5 250v307M508.5 250v15M509.5 250v307M511.5 250v307M513.5 250v307M515.5 250v307M517.5 250v307M519.5 250v306M521.5 250v306M523.5 250v306M525.5 251v305M527.5 251v305M529.5 251v304M531.5 251v304M533.5 251v304M534.5 309v19M535.5 251v304M536.5 287v43M537.5 251v304M538.5 266v66M539.5 251v303M540.5 251v82M541.5 251v303M542.5 251v84M543.5 252v302M544.5 252v85M545.5 252v302M547.5 252v302M548.5 252v89M549.5 252v301M550.5 252v90M551.5 252v301M552.5 252v92M553.5 252v301M554.5 253v93M555.5 253v300M556.5 253v95M557.5 253v300M558.5 253v96M559.5 253v299M560.5 253v98M561.5 253v299M562.5 253v70M563.5 254v298M564.5 254v43M565.5 254v298M567.5 254v297M569.5 254v297M571.5 255v296M573.5 255v296M575.5 255v296M577.5 256v294M579.5 256v294M581.5 256v294M583.5 257v293M585.5 257v293M587.5 257v292M588.5 365v10M589.5 258v291M590.5 343v34M591.5 258v291M592.5 322v56M593.5 258v291M594.5 302v78M595.5 259v289M596.5 283v99M597.5 259v289M598.5 265v118M599.5 259v289M600.5 260v125M601.5 260v288M602.5 260v126M603.5 260v288M604.5 260v128M605.5 261v286M607.5 261v286M608.5 261v130M609.5 262v285M610.5 262v131M611.5 262v285M612.5 262v132M613.5 262v285M614.5 263v133M615.5 263v283M616.5 263v115M617.5 263v283M618.5 264v88M619.5 264v282M620.5 264v65M621.5 264v282M622.5 264v43M623.5 265v280M624.5 265v23M625.5 265v280M627.5 266v279M629.5 266v279M631.5 267v278M633.5 267v277M635.5 268v276M637.5 268v276M639.5 269v275M641.5 269v275M643.5 270v273M644.5 399v20M645.5 270v273M647.5 271v272M648.5 358v64M649.5 271v272M650.5 338v86M651.5 272v270M652.5 320v105M653.5 272v270M654.5 303v124M655.5 273v269M656.5 287v141M657.5 273v269M658.5 274v156M659.5 274v267M660.5 274v158M661.5 274v267M662.5 276v157M663.5 276v265M664.5 276v158M665.5 276v265M667.5 276v265M668.5 276v161M669.5 277v263M670.5 277v156M671.5 277v263M672.5 277v130M673.5 278v262M674.5 278v104M675.5 278v262M676.5 279v81M677.5 279v260M678.5 279v62M679.5 279v260M680.5 280v43M681.5 280v259M682.5 280v27M683.5 280v259M684.5 281v10M685.5 281v257M687.5 282v256M689.5 282v256M691.5 283v254M693.5 283v254M695.5 284v253M697.5 284v253M698.5 455v3M699.5 285v251M700.5 433v27M701.5 285v251M702.5 413v48M703.5 286v250M704.5 393v70M705.5 287v248M707.5 287v248M708.5 358v107M709.5 288v247M710.5 342v125M711.5 288v247M712.5 325v143M713.5 289v245M714.5 309v161M715.5 289v245M716.5 293v178M717.5 290v244M718.5 290v182M719.5 290v243M720.5 291v183M721.5 291v242M722.5 291v184M723.5 291v242M724.5 292v184M725.5 292v240M727.5 292v240M728.5 293v144M729.5 293v239M730.5 293v121M731.5 293v238M732.5 294v99M733.5 294v237M734.5 294v81M735.5 294v236M736.5 295v63M737.5 295v235M738.5 295v48M739.5 295v235M740.5 295v33M741.5 296v233M742.5 296v18M743.5 296v233M744.5 296v3M745.5 297v232M747.5 297v231M749.5 297v231M751.5 298v229M753.5 298v229M754.5 487v10M755.5 299v228M756.5 466v32M757.5 299v227M758.5 447v52M759.5 300v226M760.5 429v72M761.5 300v225M762.5 412v90M763.5 300v225M764.5 395v108M765.5 302v223M767.5 302v222M768.5 364v142M769.5 302v222M770.5 348v159M771.5 302v221M772.5 331v179M773.5 302v221M774.5 313v197M775.5 302v220M776.5 303v208M777.5 303v219M778.5 303v210M779.5 303v219M780.5 303v211M781.5 303v218M782.5 303v193M783.5 304v217M784.5 304v166M785.5 304v216M787.5 304v216M788.5 304v124M789.5 304v215M790.5 304v106M791.5 305v214M792.5 305v89M793.5 305v214M794.5 305v75M795.5 305v213M796.5 305v60M797.5 305v213M798.5 305v45M799.5 305v212M800.5 305v30M801.5 305v212M802.5 306v13M803.5 306v210M805.5 306v210M807.5 306v210M809.5 306v209M811.5 306v209M812.5 500v15M813.5 306v208M814.5 481v33M815.5 306v208M816.5 463v51M817.5 306v208M818.5 447v66M819.5 306v207M820.5 432v81M821.5 306v207M822.5 417v96M823.5 306v206M824.5 401v111M825.5 306v206M827.5 306v206M828.5 368v144M829.5 306v205M830.5 349v162M831.5 306v205M832.5 328v183M833.5 306v205M834.5 306v205M835.5 306v204M836.5 306v204M837.5 306v204M838.5 306v204M839.5 306v204M840.5 306v200M841.5 306v203M842.5 306v178M843.5 306v203M844.5 305v159M845.5 305v204M847.5 305v204M848.5 305v127M849.5 305v203M850.5 306v110M851.5 305v203M852.5 308v94M853.5 305v203M854.5 309v78M855.5 304v204M856.5 311v60M857.5 304v204M858.5 312v43M859.5 304v203M860.5 313v24M861.5 304v203M862.5 315v3M863.5 303v204M865.5 303v204M867.5 303v204M869.5 303v204M871.5 302v204M872.5 498v8M873.5 302v204M874.5 484v22"/>
<path stroke="#d0d0d0" d="M144.5 409v97M144.5 508v25M148.5 378v128M148.5 508v24M150.5 361v145M150.5 508v24M152.5 350v156M152.5 508v24M154.5 352v154M154.5 508v24M156.5 354v152M156.5 508v24M158.5 355v151M158.5 508v24M160.5 356v150M160.5 508v22M162.5 358v148M162.5 508v4M164.5 359v136M168.5 362v102M170.5 363v85M172.5 365v67M174.5 366v47M176.5 368v25M178.5 369v1M190.5 518v15M192.5 503v6M192.5 511v23M194.5 489v20M194.5 511v23M196.5 475v34M196.5 511v23M198.5 461v48M198.5 511v23M200.5 447v63M200.5 512v22M202.5 432v78M202.5 512v23M204.5 415v95M204.5 512v23M208.5 392v119M208.5 513v22M210.5 394v117M210.5 513v23M212.5 395v117M212.5 514v22M214.5 397v115M214.5 514v22M216.5 398v114M216.5 514v22M218.5 400v113M218.5 515v22M220.5 401v112M220.5 515v17M222.5 403v110M222.5 515v1M224.5 405v95M228.5 408v57M230.5 409v37M232.5 411v13M248.5 541v1M250.5 527v16M252.5 513v7M252.5 522v21M254.5 499v22M254.5 523v21M256.5 484v37M256.5 523v21M258.5 468v54M258.5 524v21M260.5 450v72M260.5 524v21M262.5 435v88M262.5 525v21M264.5 437v86M264.5 525v21M268.5 440v84M268.5 526v21M270.5 442v83M270.5 527v21M272.5 443v82M272.5 527v21M274.5 445v81M274.5 528v21M276.5 447v79M276.5 528v21M278.5 448v79M278.5 529v21M280.5 450v77M280.5 529v8M282.5 452v67M284.5 454v45M308.5 551v6M310.5 538v20M312.5 521v15M312.5 538v20M314.5 504v33M314.5 539v20M316.5 485v52M316.5 539v20M318.5 484v54M318.5 540v20M320.5 485v53M320.5 540v20M322.5 487v52M322.5 541v20M324.5 489v50M324.5 541v21M328.5 492v48M328.5 542v21M330.5 494v47M330.5 543v20M332.5 496v45M332.5 543v21M334.5 498v44M334.5 544v20M336.5 500v42M336.5 544v21M338.5 501v42M338.5 545v10M340.5 503v31M342.5 505v5M368.5 556v16M370.5 538v12M370.5 552v21M372.5 533v17M372.5 552v21M374.5 536v15M374.5 553v20M376.5 537v14M376.5 553v21M378.5 539v12M378.5 553v21M380.5 541v11M380.5 554v21M382.5 543v9M382.5 554v21M384.5 545v7M384.5 554v21M388.5 549v4M388.5 555v21M390.5 551v2M390.5 555v21M392.5 553v1M392.5 556v21M394.5 556v21M396.5 557v12M452.5 232v17M454.5 229v22M456.5 229v22M458.5 229v22M458.5 253v2M460.5 228v23M460.5 253v4M462.5 228v22M462.5 252v7M464.5 228v22M464.5 252v9M468.5 228v22M468.5 252v13M470.5 227v23M470.5 252v15M472.5 227v23M472.5 252v17M474.5 227v23M474.5 252v19M476.5 227v22M476.5 251v22M478.5 227v22M478.5 251v25M480.5 227v22M480.5 251v3M482.5 227v6M508.5 265v39M510.5 240v8M510.5 250v56M512.5 226v22M512.5 250v57M514.5 226v22M514.5 250v59M516.5 226v22M516.5 250v61M518.5 226v22M518.5 250v63M520.5 226v22M520.5 250v65M522.5 226v22M522.5 250v67M524.5 226v23M524.5 251v68M528.5 227v22M528.5 251v71M530.5 227v22M530.5 251v73M532.5 227v22M532.5 251v75M534.5 227v22M534.5 251v58M536.5 227v22M536.5 251v36M538.5 227v22M538.5 251v15M540.5 227v20M562.5 323v31M564.5 297v58M568.5 254v104M570.5 234v19M570.5 255v105M572.5 231v22M572.5 255v106M574.5 232v21M574.5 255v108M576.5 232v21M576.5 255v110M578.5 232v22M578.5 256v111M580.5 233v21M580.5 256v112M582.5 233v21M582.5 256v114M584.5 234v21M584.5 257v115M588.5 234v21M588.5 257v108M590.5 235v21M590.5 258v85M592.5 235v21M592.5 258v64M594.5 236v20M594.5 258v44M596.5 236v21M596.5 259v24M598.5 236v21M598.5 259v6M600.5 237v11M616.5 378v20M618.5 352v47M620.5 329v72M622.5 307v95M624.5 288v116M628.5 254v10M628.5 266v141M630.5 244v20M630.5 266v142M632.5 244v21M632.5 267v143M634.5 245v20M634.5 267v145M636.5 245v21M636.5 268v145M638.5 246v20M638.5 268v147M640.5 246v21M640.5 269v147M642.5 247v20M642.5 269v149M644.5 248v20M644.5 270v129M648.5 249v20M648.5 271v87M650.5 249v20M650.5 271v67M652.5 250v20M652.5 272v48M654.5 250v21M654.5 273v30M656.5 251v20M656.5 273v14M658.5 251v19M660.5 252v2M670.5 433v5M672.5 407v33M674.5 382v59M676.5 360v83M678.5 341v103M680.5 323v123M682.5 307v140M684.5 291v157M688.5 262v18M688.5 282v169M690.5 260v20M690.5 282v171M692.5 260v21M692.5 283v171M694.5 261v21M694.5 284v172M696.5 261v21M696.5 284v174M698.5 262v21M698.5 285v170M700.5 263v20M700.5 285v148M702.5 263v21M702.5 286v127M704.5 264v20M704.5 286v107M708.5 265v20M708.5 287v71M710.5 265v21M710.5 288v54M712.5 266v20M712.5 288v37M714.5 266v21M714.5 289v20M716.5 267v20M716.5 289v4M718.5 267v9M728.5 437v42M730.5 414v66M732.5 393v89M734.5 375v109M736.5 358v127M738.5 343v143M740.5 328v159M742.5 314v175M744.5 299v191M748.5 273v22M748.5 297v196M750.5 274v22M750.5 298v196M752.5 274v22M752.5 298v197M754.5 276v21M754.5 299v188M756.5 276v21M756.5 299v167M758.5 276v21M758.5 299v148M760.5 276v22M760.5 300v129M762.5 276v22M762.5 300v112M764.5 276v23M764.5 302v93M768.5 277v22M768.5 302v62M770.5 277v23M770.5 302v46M772.5 277v23M772.5 302v29M774.5 278v22M774.5 302v11M776.5 278v14M782.5 496v19M784.5 470v47M788.5 428v91M790.5 410v109M792.5 394v125M792.5 521v1M794.5 380v138M794.5 520v3M796.5 365v153M796.5 520v4M798.5 350v168M798.5 520v6M800.5 335v182M800.5 519v8M802.5 319v198M802.5 519v9M804.5 302v2M804.5 306v210M804.5 518v12M808.5 280v24M808.5 306v209M808.5 517v15M810.5 280v24M810.5 306v209M810.5 517v3M812.5 280v24M812.5 306v194M814.5 281v23M814.5 306v175M816.5 283v21M816.5 306v157M818.5 284v20M818.5 306v141M820.5 286v18M820.5 306v126M822.5 287v17M822.5 306v111M824.5 288v16M824.5 306v95M828.5 291v13M828.5 306v62M830.5 293v11M830.5 306v43M832.5 294v10M832.5 306v22M834.5 295v9M838.5 531v5M840.5 506v4M840.5 512v24M842.5 484v25M842.5 511v25M844.5 464v45M844.5 511v24M848.5 432v77M848.5 511v24M850.5 416v92M850.5 510v25M852.5 402v106M852.5 510v24M854.5 387v121M854.5 510v24M856.5 371v137M856.5 510v24M858.5 355v152M858.5 510v24M860.5 337v170M860.5 510v24M862.5 318v189M862.5 510v23M864.5 316v191M864.5 510v23M868.5 319v188M868.5 510v23M870.5 320v187M870.5 510v5M872.5 322v176M874.5 323v161"/>
<path stroke="#0080c0" d="M145.5 276v23M145.5 508v25M147.5 276v23M147.5 508v24M149.5 276v23M149.5 508v24M151.5 274v24M151.5 508v24M153.5 274v24M153.5 508v24M155.5 274v24M155.5 508v24M157.5 273v24M157.5 508v24M159.5 273v24M159.5 508v24M160.5 530v2M161.5 273v23M161.5 508v24M162.5 512v20M163.5 272v24M163.5 508v24M164.5 508v24M165.5 272v24M165.5 508v24M167.5 271v24M167.5 508v24M168.5 508v24M169.5 271v24M169.5 508v24M170.5 510v22M171.5 271v23M171.5 510v22M172.5 510v22M173.5 270v24M173.5 510v22M174.5 510v22M175.5 270v24M175.5 510v22M176.5 510v22M177.5 270v23M177.5 510v22M178.5 510v23M179.5 269v24M179.5 510v23M180.5 510v23M181.5 269v23M181.5 510v23M182.5 510v23M183.5 268v24M183.5 510v23M184.5 510v23M185.5 268v23M185.5 510v23M187.5 268v23M187.5 510v23M188.5 510v23M189.5 267v23M189.5 510v23M190.5 510v8M191.5 267v23M191.5 510v23M193.5 267v23M193.5 511v23M195.5 266v23M195.5 511v23M197.5 266v23M197.5 511v23M199.5 265v23M199.5 511v23M201.5 265v23M201.5 512v22M203.5 265v22M203.5 512v23M205.5 264v23M205.5 512v23M207.5 264v22M207.5 513v22M209.5 264v22M209.5 513v22M211.5 263v22M211.5 513v23M213.5 263v22M213.5 514v22M215.5 262v23M215.5 514v22M217.5 262v22M217.5 514v23M219.5 262v22M219.5 515v22M220.5 532v5M221.5 261v22M221.5 515v22M222.5 516v21M223.5 261v22M223.5 516v22M224.5 516v22M225.5 261v21M225.5 516v22M227.5 260v22M227.5 516v22M228.5 517v21M229.5 260v22M229.5 517v22M230.5 517v22M231.5 259v22M231.5 517v22M232.5 518v21M233.5 259v22M233.5 518v21M234.5 518v22M235.5 259v21M235.5 518v22M236.5 518v22M237.5 258v22M237.5 519v21M238.5 519v21M239.5 258v22M239.5 519v22M240.5 519v22M241.5 258v21M241.5 520v21M242.5 520v21M243.5 257v22M243.5 520v21M244.5 520v22M245.5 257v21M245.5 521v21M247.5 257v21M247.5 521v21M248.5 521v20M249.5 256v22M249.5 521v22M250.5 522v5M251.5 256v21M251.5 522v21M253.5 256v21M253.5 522v22M255.5 255v22M255.5 523v21M257.5 255v21M257.5 523v22M259.5 255v21M259.5 524v21M261.5 255v21M261.5 524v21M263.5 254v21M263.5 525v21M265.5 254v21M265.5 526v20M267.5 254v20M267.5 526v21M269.5 253v21M269.5 527v20M271.5 253v21M271.5 527v21M273.5 253v20M273.5 528v20M275.5 252v21M275.5 528v21M277.5 252v21M277.5 529v20M279.5 252v21M279.5 529v21M280.5 537v13M281.5 252v20M281.5 530v20M282.5 530v21M283.5 251v21M283.5 530v21M284.5 531v20M285.5 251v21M285.5 531v20M287.5 251v20M287.5 531v21M288.5 532v20M289.5 250v21M289.5 532v20M290.5 532v21M291.5 250v21M291.5 532v21M292.5 533v20M293.5 250v20M293.5 533v20M294.5 533v21M295.5 250v20M295.5 533v21M296.5 534v20M297.5 249v21M297.5 534v20M298.5 534v21M299.5 249v21M299.5 536v19M300.5 536v19M301.5 249v20M301.5 536v20M302.5 536v20M303.5 249v20M303.5 536v20M304.5 536v20M305.5 248v21M305.5 536v21M307.5 248v20M307.5 537v20M308.5 537v14M309.5 248v20M309.5 537v21M311.5 248v20M311.5 538v20M313.5 247v21M313.5 538v21M315.5 247v20M315.5 539v20M317.5 247v20M317.5 539v21M319.5 247v20M319.5 540v20M321.5 246v21M321.5 540v21M323.5 246v20M323.5 541v20M325.5 246v20M325.5 541v21M327.5 245v21M327.5 542v20M329.5 245v21M329.5 542v21M331.5 245v20M331.5 543v20M333.5 245v20M333.5 543v21M335.5 244v21M335.5 544v20M337.5 244v21M337.5 544v21M338.5 555v10M339.5 244v20M339.5 545v20M340.5 545v21M341.5 244v20M341.5 545v21M342.5 546v20M343.5 243v21M343.5 546v20M344.5 546v21M345.5 243v21M345.5 546v21M347.5 243v20M347.5 547v20M348.5 547v21M349.5 243v20M349.5 547v21M350.5 547v21M351.5 242v21M351.5 548v20M352.5 548v20M353.5 242v21M353.5 548v21M354.5 548v21M355.5 242v20M355.5 549v20M356.5 549v20M357.5 242v20M357.5 549v21M358.5 549v21M359.5 241v21M359.5 549v21M360.5 550v20M361.5 241v21M361.5 550v21M362.5 550v21M363.5 241v20M363.5 550v21M364.5 551v20M365.5 240v21M365.5 551v20M367.5 240v21M367.5 551v21M368.5 551v5M369.5 240v21M369.5 552v20M371.5 240v21M371.5 552v21M373.5 239v21M373.5 552v21M375.5 239v21M375.5 553v21M377.5 239v21M377.5 553v21M379.5 239v21M379.5 553v21M381.5 238v21M381.5 554v21M383.5 238v21M383.5 554v21M385.5 238v21M385.5 555v21M387.5 238v21M387.5 555v21M389.5 237v21M389.5 555v21M391.5 237v21M391.5 556v21M393.5 237v21M393.5 556v21M395.5 236v22M395.5 556v21M396.5 569v9M397.5 236v21M397.5 556v22M398.5 559v19M399.5 236v21M399.5 557v21M400.5 560v18M401.5 236v21M401.5 557v21M402.5 562v16M403.5 235v22M403.5 557v22M404.5 564v15M405.5 235v21M405.5 558v21M407.5 235v21M407.5 558v21M408.5 568v11M409.5 235v21M409.5 558v22M410.5 570v10M411.5 234v22M411.5 558v22M412.5 572v8M413.5 234v22M413.5 559v21M414.5 574v6M415.5 234v21M415.5 559v21M416.5 576v4M417.5 233v22M417.5 559v22M418.5 578v3M419.5 233v22M419.5 559v22M420.5 580v1M421.5 233v22M421.5 559v22M423.5 233v21M423.5 560v21M425.5 232v22M425.5 560v21M427.5 232v22M427.5 560v22M429.5 232v22M429.5 560v22M431.5 232v21M431.5 560v22M433.5 231v22M433.5 560v22M435.5 231v22M435.5 560v22M436.5 231v2M437.5 231v22M437.5 561v21M438.5 231v4M439.5 231v22M439.5 561v22M440.5 231v6M441.5 230v22M441.5 561v22M442.5 230v9M443.5 230v22M443.5 561v22M444.5 230v11M445.5 230v22M445.5 561v22M447.5 230v22M447.5 561v22M448.5 230v15M449.5 229v23M449.5 561v22M450.5 229v18M451.5 229v22M451.5 561v22M452.5 229v3M453.5 229v22M453.5 561v22M455.5 229v22M455.5 561v22M457.5 229v22M457.5 561v22M459.5 228v23M459.5 561v22M461.5 228v23M461.5 561v22M463.5 228v22M463.5 561v22M465.5 228v22M465.5 561v23M467.5 228v22M467.5 561v22M469.5 228v22M469.5 561v22M471.5 227v23M471.5 561v22M473.5 227v23M473.5 561v22M475.5 227v22M475.5 561v22M477.5 227v22M477.5 561v22M479.5 227v22M479.5 561v22M481.5 227v22M481.5 561v22M482.5 233v16M483.5 227v22M483.5 561v22M484.5 227v22M485.5 227v22M485.5 561v22M487.5 226v23M487.5 561v22M488.5 226v23M489.5 226v23M489.5 561v22M490.5 226v23M491.5 226v23M491.5 560v23M492.5 226v23M493.5 226v23M493.5 560v23M494.5 226v23M495.5 226v23M495.5 560v23M496.5 226v22M497.5 226v22M497.5 560v22M498.5 226v22M499.5 226v22M499.5 560v22M500.5 226v22M501.5 226v22M501.5 560v22M502.5 226v22M503.5 226v22M503.5 560v22M504.5 226v22M505.5 226v22M505.5 560v22M507.5 226v22M507.5 559v23M508.5 226v22M509.5 226v22M509.5 559v23M510.5 226v14M511.5 226v22M511.5 559v22M513.5 226v22M513.5 559v22M515.5 226v22M515.5 559v22M517.5 226v22M517.5 559v22M519.5 226v22M519.5 558v23M521.5 226v22M521.5 558v22M523.5 226v22M523.5 558v22M525.5 226v23M525.5 558v22M527.5 227v22M527.5 558v22M529.5 227v22M529.5 557v23M531.5 227v22M531.5 557v22M533.5 227v22M533.5 557v22M535.5 227v22M535.5 557v22M537.5 227v22M537.5 557v22M539.5 227v22M539.5 556v22M540.5 247v2M541.5 228v21M541.5 556v22M542.5 228v21M543.5 228v22M543.5 556v22M544.5 228v22M545.5 228v22M545.5 556v22M547.5 228v22M547.5 556v21M548.5 228v22M549.5 228v22M549.5 555v22M550.5 228v22M551.5 229v21M551.5 555v22M552.5 229v21M553.5 229v21M553.5 555v22M554.5 229v22M555.5 229v22M555.5 555v21M556.5 229v22M557.5 229v22M557.5 555v21M558.5 229v22M559.5 230v21M559.5 554v22M560.5 230v21M561.5 230v21M561.5 554v22M562.5 230v21M563.5 230v22M563.5 554v21M564.5 230v22M565.5 230v22M565.5 554v21M567.5 231v21M567.5 553v22M568.5 231v21M569.5 231v21M569.5 553v22M570.5 231v3M571.5 231v22M571.5 553v21M573.5 232v21M573.5 553v21M575.5 232v21M575.5 553v21M577.5 232v22M577.5 552v22M579.5 233v21M579.5 552v21M581.5 233v21M581.5 552v21M583.5 233v22M583.5 552v21M585.5 234v21M585.5 552v21M587.5 234v21M587.5 551v21M589.5 235v21M589.5 551v21M591.5 235v21M591.5 551v21M593.5 235v21M593.5 551v21M595.5 236v21M595.5 550v21M597.5 236v21M597.5 550v21M599.5 237v20M599.5 550v21M600.5 248v10M601.5 237v21M601.5 550v21M602.5 237v21M603.5 237v21M603.5 550v20M604.5 238v20M605.5 238v21M605.5 549v21M607.5 238v21M607.5 549v21M608.5 239v20M609.5 239v21M609.5 549v21M610.5 239v21M611.5 239v21M611.5 549v20M612.5 240v20M613.5 240v20M613.5 549v20M614.5 240v21M615.5 240v21M615.5 548v21M616.5 240v21M617.5 241v20M617.5 548v21M618.5 241v21M619.5 241v21M619.5 548v20M620.5 241v21M621.5 242v20M621.5 548v20M622.5 242v20M623.5 242v21M623.5 547v21M624.5 242v21M625.5 243v20M625.5 547v21M627.5 243v21M627.5 547v21M628.5 243v11M629.5 244v20M629.5 547v20M631.5 244v21M631.5 547v20M633.5 245v20M633.5 546v21M635.5 245v21M635.5 546v21M637.5 246v20M637.5 546v20M639.5 246v21M639.5 546v20M641.5 247v20M641.5 546v20M643.5 247v21M643.5 545v21M645.5 248v20M645.5 545v20M647.5 248v21M647.5 545v20M649.5 249v20M649.5 545v20M651.5 249v21M651.5 544v21M653.5 250v20M653.5 544v21M655.5 250v21M655.5 544v20M657.5 251v20M657.5 544v20M658.5 270v2M659.5 252v20M659.5 543v21M660.5 254v18M661.5 252v20M661.5 543v21M662.5 252v21M663.5 253v20M663.5 543v20M664.5 253v20M665.5 253v21M665.5 543v20M667.5 254v20M667.5 543v20M668.5 254v20M669.5 254v21M669.5 542v21M670.5 255v20M671.5 255v20M671.5 542v20M672.5 255v20M673.5 255v21M673.5 542v20M674.5 256v20M675.5 256v20M675.5 542v20M676.5 256v21M677.5 256v21M677.5 541v21M678.5 257v20M679.5 257v20M679.5 541v21M680.5 257v21M681.5 257v21M681.5 541v20M682.5 258v20M683.5 258v20M683.5 541v20M684.5 258v21M685.5 259v20M685.5 540v21M687.5 259v21M687.5 540v21M688.5 259v3M689.5 260v20M689.5 540v20M691.5 260v21M691.5 539v21M693.5 261v20M693.5 539v21M695.5 261v21M695.5 539v21M697.5 262v20M697.5 539v20M699.5 262v21M699.5 538v21M701.5 263v20M701.5 538v21M703.5 263v21M703.5 538v20M705.5 264v21M705.5 537v21M707.5 264v21M707.5 537v21M709.5 265v21M709.5 537v21M711.5 265v21M711.5 537v20M713.5 266v21M713.5 536v21M715.5 266v21M715.5 536v21M717.5 267v21M717.5 536v21M718.5 276v12M719.5 267v21M719.5 536v20M720.5 267v22M721.5 268v21M721.5 536v20M722.5 268v21M723.5 268v21M723.5 536v20M724.5 268v22M725.5 269v21M725.5 534v21M727.5 269v21M727.5 534v21M728.5 269v22M729.5 270v21M729.5 534v21M730.5 270v21M731.5 270v21M731.5 533v22M732.5 270v22M733.5 270v22M733.5 533v21M734.5 271v21M735.5 271v21M735.5 532v22M736.5 271v22M737.5 271v22M737.5 532v22M738.5 271v22M739.5 272v21M739.5 532v21M740.5 272v21M741.5 272v22M741.5 531v22M742.5 272v22M743.5 273v21M743.5 531v22M744.5 273v21M745.5 273v22M745.5 531v21M747.5 273v22M747.5 530v22M749.5 274v21M749.5 530v22M751.5 274v22M751.5 529v22M753.5 274v22M753.5 529v22M755.5 276v21M755.5 529v22M757.5 276v21M757.5 528v22M759.5 276v22M759.5 528v22M761.5 276v22M761.5 527v23M763.5 276v22M763.5 527v22M765.5 276v23M765.5 527v22M767.5 277v22M767.5 526v23M769.5 277v22M769.5 526v22M771.5 277v23M771.5 525v23M773.5 277v23M773.5 525v22M775.5 278v22M775.5 524v23M776.5 292v9M777.5 278v23M777.5 524v23M778.5 278v23M779.5 278v23M779.5 524v22M780.5 278v23M781.5 278v23M781.5 523v23M782.5 279v22M783.5 279v23M783.5 523v23M784.5 279v23M785.5 279v23M785.5 522v23M787.5 279v23M787.5 522v23M788.5 279v23M789.5 279v23M789.5 521v24M790.5 279v23M791.5 279v24M791.5 521v23M792.5 279v24M793.5 279v24M793.5 521v23M794.5 280v23M795.5 280v23M795.5 520v23M796.5 280v23M797.5 280v23M797.5 520v23M798.5 280v23M799.5 280v23M799.5 519v24M800.5 280v23M801.5 280v23M801.5 519v23M802.5 280v24M803.5 280v24M803.5 518v24M804.5 280v22M805.5 280v24M805.5 518v24M807.5 280v24M807.5 518v23M809.5 280v24M809.5 517v24M810.5 520v14M811.5 280v24M811.5 517v24M812.5 517v19M813.5 280v24M813.5 516v24M814.5 516v20M815.5 280v24M815.5 516v24M816.5 516v22M817.5 280v24M817.5 516v24M818.5 515v24M819.5 280v24M819.5 515v24M820.5 515v24M821.5 280v24M821.5 515v24M822.5 515v24M823.5 280v24M823.5 514v25M824.5 514v24M825.5 280v24M825.5 514v24M827.5 280v24M827.5 514v24M828.5 514v24M829.5 280v24M829.5 513v25M830.5 513v24M831.5 280v24M831.5 513v24M832.5 513v24M833.5 280v24M833.5 513v24M834.5 513v24M835.5 280v24M835.5 512v25M836.5 297v7M836.5 512v25M837.5 280v24M837.5 512v24M838.5 298v6M838.5 512v19M839.5 280v24M839.5 512v24M840.5 299v5M841.5 279v25M841.5 511v25M842.5 302v2M843.5 279v25M843.5 511v25M844.5 302v1M845.5 279v24M845.5 511v24M847.5 279v24M847.5 511v24M849.5 279v24M849.5 510v25M851.5 278v25M851.5 510v25M853.5 278v25M853.5 510v24M855.5 278v24M855.5 510v24M857.5 278v24M857.5 510v24M859.5 278v24M859.5 510v24M861.5 277v25M861.5 510v24M863.5 277v24M863.5 510v23M865.5 277v24M865.5 510v23M867.5 277v24M867.5 510v23M869.5 276v25M869.5 510v23M870.5 515v18M871.5 276v24M871.5 508v25M872.5 508v25M873.5 276v24M873.5 508v25M874.5 508v25"/>
<path stroke="#8080ff" d="M162.5 272v1M164.5 272v2M168.5 271v6M170.5 271v7M172.5 271v9M174.5 270v11M176.5 270v13M178.5 269v15M180.5 269v17M182.5 269v18M184.5 269v20M188.5 272v19M190.5 273v17M190.5 292v1M192.5 276v14M192.5 292v3M194.5 276v13M194.5 291v5M196.5 278v11M196.5 291v7M198.5 279v9M198.5 290v9M200.5 281v7M200.5 290v12M202.5 282v5M202.5 289v13M204.5 284v3M204.5 289v15M208.5 288v19M210.5 288v20M212.5 290v20M214.5 291v20M216.5 293v20M218.5 294v20M220.5 296v20M222.5 298v20M224.5 299v20M228.5 302v20M230.5 304v20M232.5 305v20M234.5 307v21M236.5 308v21M238.5 310v20M240.5 312v20M242.5 313v20M244.5 315v20M248.5 318v20M250.5 320v20M252.5 321v20M254.5 323v20M256.5 325v20M258.5 326v20M260.5 328v20M262.5 329v20M264.5 331v20M268.5 334v20M270.5 336v20M272.5 338v20M274.5 339v20M276.5 341v20M278.5 343v20M280.5 344v20M282.5 346v20M284.5 348v20M288.5 351v20M290.5 354v19M292.5 355v20M294.5 356v20M296.5 358v20M298.5 360v20M300.5 362v20M302.5 363v20M304.5 365v20M308.5 369v20M310.5 370v20M312.5 372v20M314.5 374v20M316.5 376v20M318.5 377v20M320.5 380v19M322.5 381v20M324.5 383v20M328.5 386v21M330.5 388v20M332.5 390v20M334.5 392v20M336.5 394v20M338.5 396v20M340.5 397v21M342.5 244v2M342.5 399v20M344.5 243v5M344.5 401v20M348.5 243v8M348.5 405v20M350.5 242v11M350.5 407v20M352.5 242v13M352.5 409v20M354.5 242v15M354.5 411v21M356.5 242v17M356.5 412v20M358.5 241v20M358.5 414v20M360.5 243v19M360.5 416v20M362.5 245v17M362.5 264v1M362.5 418v20M364.5 247v14M364.5 263v4M364.5 420v20M368.5 250v11M368.5 263v8M368.5 424v20M370.5 252v9M370.5 263v9M370.5 426v20M372.5 254v6M372.5 262v12M372.5 428v20M374.5 256v4M374.5 262v14M374.5 430v20M376.5 258v2M376.5 262v16M376.5 432v20M378.5 262v18M378.5 433v20M380.5 262v20M380.5 435v20M382.5 264v20M382.5 437v21M384.5 266v20M384.5 439v20M388.5 270v20M388.5 443v20M390.5 272v20M390.5 445v20M392.5 274v20M392.5 447v20M394.5 276v20M394.5 449v20M396.5 278v20M396.5 451v20M398.5 280v20M398.5 453v20M400.5 282v20M400.5 455v20M402.5 284v20M402.5 458v19M404.5 286v20M404.5 459v20M408.5 290v20M408.5 463v21M410.5 292v20M410.5 465v20M412.5 294v20M412.5 467v20M414.5 296v20M414.5 469v20M416.5 298v20M416.5 471v20M418.5 300v20M418.5 473v20M420.5 302v20M420.5 475v20M422.5 304v20M422.5 477v20M424.5 306v20M424.5 479v20M428.5 310v20M428.5 482v20M430.5 312v20M430.5 484v20M432.5 314v20M432.5 486v20M434.5 316v20M434.5 488v20M436.5 318v20M436.5 490v20M438.5 320v20M438.5 492v20M440.5 322v20M440.5 494v20M442.5 324v20M442.5 496v20M444.5 326v20M444.5 498v20M448.5 330v20M448.5 502v20M450.5 332v20M450.5 504v20M452.5 334v20M452.5 506v20M454.5 336v20M454.5 508v20M456.5 338v20M456.5 510v20M458.5 340v20M458.5 512v20M460.5 342v20M460.5 514v20M462.5 344v20M462.5 516v20M464.5 346v20M464.5 518v20M468.5 350v20M468.5 522v20M470.5 352v20M470.5 524v20M472.5 354v20M472.5 526v20M474.5 356v20M474.5 528v20M476.5 358v20M476.5 529v20M478.5 360v20M478.5 531v20M480.5 362v20M480.5 533v20M482.5 364v20M482.5 536v19M484.5 366v20M484.5 537v20M488.5 369v20M488.5 541v18M490.5 371v20M490.5 543v15M490.5 560v3M492.5 373v20M492.5 545v13M492.5 560v5M494.5 375v20M494.5 547v11M494.5 560v7M496.5 377v20M496.5 549v9M496.5 560v9M498.5 380v19M498.5 550v8M498.5 560v10M500.5 381v20M500.5 552v6M500.5 560v12M502.5 383v20M502.5 554v4M502.5 560v14M504.5 385v20M504.5 556v2M504.5 560v16M508.5 389v20M508.5 560v20M510.5 391v20M510.5 562v19M512.5 392v20M512.5 564v17M514.5 394v20M514.5 565v16M516.5 396v20M516.5 567v14M518.5 398v20M518.5 569v12M520.5 400v20M520.5 571v9M522.5 402v20M522.5 573v7M524.5 404v20M524.5 575v5M528.5 407v20M528.5 578v2M530.5 409v20M532.5 411v21M534.5 413v20M536.5 415v20M538.5 416v20M540.5 418v20M542.5 420v20M544.5 422v20M548.5 425v20M550.5 427v20M552.5 429v20M554.5 432v19M556.5 432v20M558.5 434v20M560.5 436v20M562.5 438v20M564.5 439v20M568.5 443v20M570.5 445v20M572.5 446v20M574.5 448v20M576.5 450v20M578.5 451v20M580.5 453v20M582.5 455v20M584.5 456v20M588.5 460v20M590.5 461v20M592.5 463v21M594.5 465v20M596.5 466v20M598.5 468v20M600.5 470v20M602.5 471v20M604.5 473v20M608.5 476v20M610.5 478v20M612.5 479v20M614.5 481v20M616.5 482v20M618.5 484v20M620.5 486v20M622.5 487v20M624.5 489v21M628.5 492v20M630.5 493v20M632.5 495v20M634.5 496v20M636.5 498v20M638.5 500v20M640.5 501v20M642.5 503v20M644.5 504v20M648.5 507v20M650.5 510v19M652.5 510v20M654.5 512v20M656.5 513v20M658.5 515v21M660.5 516v20M662.5 518v20M664.5 519v20M668.5 522v18M670.5 524v16M670.5 542v2M672.5 525v15M672.5 542v3M674.5 526v14M674.5 542v4M676.5 528v11M676.5 541v7M678.5 529v10M678.5 541v8M680.5 531v8M680.5 541v10M682.5 532v7M682.5 541v11M684.5 534v4M684.5 540v14M688.5 537v1M688.5 540v17M690.5 540v18M692.5 539v20M694.5 541v19M696.5 542v17M698.5 544v15M700.5 545v14M702.5 547v12M704.5 548v10M708.5 551v7M710.5 552v6M712.5 554v3M714.5 555v2M716.5 556v1"/>
<path stroke="#ff8080" d="M184.5 268v1M188.5 268v4M190.5 267v6M192.5 267v9M194.5 266v10M196.5 266v12M198.5 266v13M200.5 265v16M202.5 265v17M204.5 264v20M208.5 267v19M210.5 268v18M212.5 270v15M212.5 287v3M214.5 271v14M214.5 287v4M216.5 273v11M216.5 286v7M218.5 274v10M218.5 286v8M220.5 276v8M220.5 286v10M222.5 278v5M222.5 285v13M224.5 279v4M224.5 285v14M228.5 284v18M230.5 284v20M232.5 285v20M234.5 287v20M236.5 288v20M238.5 290v20M240.5 292v20M242.5 293v20M244.5 295v20M248.5 298v20M250.5 300v20M252.5 302v19M254.5 303v20M256.5 305v20M258.5 306v20M260.5 308v20M262.5 309v20M264.5 311v20M268.5 314v20M270.5 316v20M272.5 318v20M274.5 319v20M276.5 321v20M278.5 323v20M280.5 324v20M282.5 326v20M284.5 328v20M288.5 331v20M290.5 333v21M292.5 335v20M294.5 336v20M296.5 338v20M298.5 340v20M300.5 342v20M302.5 343v20M304.5 345v20M308.5 349v20M310.5 350v20M312.5 352v20M314.5 354v20M316.5 356v20M318.5 357v20M320.5 359v21M322.5 246v2M322.5 361v20M324.5 246v3M324.5 363v20M328.5 245v8M328.5 366v20M330.5 245v10M330.5 368v20M332.5 245v12M332.5 370v20M334.5 245v13M334.5 372v20M336.5 244v16M336.5 374v20M338.5 244v18M338.5 376v20M340.5 244v20M340.5 377v20M342.5 246v18M342.5 380v19M344.5 248v16M344.5 266v2M344.5 381v20M348.5 251v12M348.5 265v6M348.5 385v20M350.5 253v10M350.5 265v8M350.5 387v20M352.5 255v8M352.5 265v11M352.5 389v20M354.5 257v6M354.5 265v12M354.5 391v20M356.5 259v3M356.5 264v15M356.5 392v20M358.5 261v1M358.5 264v17M358.5 394v20M360.5 264v19M360.5 396v20M362.5 265v20M362.5 398v20M364.5 267v20M364.5 400v20M368.5 271v19M368.5 404v20M370.5 272v20M370.5 406v20M372.5 274v20M372.5 408v20M374.5 276v20M374.5 410v20M376.5 278v20M376.5 412v20M378.5 280v20M378.5 413v20M380.5 282v20M380.5 415v20M382.5 284v20M382.5 417v20M384.5 286v20M384.5 419v20M388.5 290v20M388.5 423v20M390.5 292v20M390.5 425v20M392.5 294v20M392.5 427v20M394.5 296v20M394.5 429v20M396.5 298v20M396.5 432v19M398.5 300v20M398.5 433v20M400.5 302v20M400.5 435v20M402.5 304v20M402.5 437v21M404.5 306v20M404.5 439v20M408.5 310v20M408.5 443v20M410.5 312v20M410.5 445v20M412.5 314v20M412.5 447v20M414.5 316v20M414.5 449v20M416.5 318v20M416.5 451v20M418.5 320v20M418.5 453v20M420.5 322v20M420.5 455v20M422.5 324v20M422.5 458v19M424.5 326v20M424.5 459v20M428.5 330v20M428.5 462v20M430.5 332v20M430.5 464v20M432.5 334v20M432.5 466v20M434.5 336v20M434.5 468v20M436.5 338v20M436.5 470v20M438.5 340v20M438.5 472v20M440.5 342v20M440.5 474v20M442.5 344v20M442.5 476v20M444.5 346v20M444.5 478v20M448.5 350v20M448.5 482v20M450.5 352v20M450.5 484v20M452.5 354v20M452.5 486v20M454.5 356v20M454.5 488v20M456.5 358v20M456.5 490v20M458.5 360v20M458.5 492v20M460.5 362v20M460.5 494v20M462.5 364v20M462.5 496v20M464.5 366v20M464.5 498v20M468.5 370v20M468.5 502v20M470.5 372v20M470.5 504v20M472.5 374v20M472.5 506v20M474.5 376v20M474.5 508v20M476.5 378v20M476.5 510v19M478.5 380v20M478.5 511v20M480.5 382v20M480.5 513v20M482.5 384v20M482.5 515v21M484.5 386v20M484.5 517v20M488.5 389v20M488.5 521v20M490.5 391v20M490.5 523v20M492.5 393v20M492.5 525v20M494.5 395v20M494.5 527v20M496.5 397v20M496.5 529v20M498.5 399v20M498.5 530v20M500.5 401v20M500.5 532v20M502.5 403v20M502.5 534v20M504.5 405v20M504.5 536v20M508.5 409v20M508.5 540v17M508.5 559v1M510.5 411v21M510.5 542v15M510.5 559v3M512.5 412v20M512.5 544v13M512.5 559v5M514.5 414v20M514.5 545v12M514.5 559v6M516.5 416v20M516.5 547v10M516.5 559v8M518.5 418v20M518.5 549v7M518.5 558v11M520.5 420v20M520.5 551v5M520.5 558v13M522.5 422v20M522.5 553v3M522.5 558v15M524.5 424v20M524.5 555v1M524.5 558v17M528.5 427v20M528.5 558v20M530.5 429v20M530.5 560v19M532.5 432v19M532.5 562v17M534.5 433v20M534.5 564v15M536.5 435v20M536.5 565v14M538.5 436v20M538.5 567v12M540.5 438v20M540.5 569v9M542.5 440v20M542.5 571v7M544.5 442v20M544.5 573v5M548.5 445v20M548.5 576v1M550.5 447v20M552.5 449v20M554.5 451v20M556.5 452v20M558.5 454v20M560.5 456v20M562.5 458v20M564.5 459v20M568.5 463v21M570.5 465v20M572.5 466v20M574.5 468v20M576.5 470v20M578.5 471v20M580.5 473v20M582.5 475v20M584.5 476v20M588.5 480v20M590.5 481v20M592.5 484v19M594.5 485v20M596.5 486v20M598.5 488v20M600.5 490v20M602.5 491v20M604.5 493v20M608.5 496v20M610.5 498v20M612.5 499v20M614.5 501v20M616.5 502v20M618.5 504v20M620.5 506v20M622.5 507v20M624.5 510v19M628.5 512v20M630.5 513v20M632.5 515v21M634.5 516v21M636.5 518v20M638.5 520v20M640.5 521v20M642.5 523v20M644.5 524v19M648.5 527v16M648.5 545v2M650.5 529v14M650.5 545v4M652.5 530v12M652.5 544v6M654.5 532v10M654.5 544v8M656.5 533v9M656.5 544v9M658.5 536v6M658.5 544v11M660.5 536v5M660.5 543v13M662.5 538v3M662.5 543v15M664.5 539v2M664.5 543v16M668.5 542v20M670.5 544v19M672.5 545v17M674.5 546v16M676.5 548v14M678.5 549v13M680.5 551v10M682.5 552v9M684.5 554v7M688.5 557v3M690.5 558v2M692.5 559v1"/>
<path stroke="#ff0000" d="M208.5 264v3M210.5 263v5M212.5 263v7M214.5 263v8M216.5 262v11M218.5 262v12M220.5 261v15M222.5 261v17M224.5 261v18M228.5 262v20M230.5 263v18M230.5 283v1M232.5 265v16M232.5 283v2M234.5 267v14M234.5 283v4M236.5 268v12M236.5 282v6M238.5 270v10M238.5 282v8M240.5 271v8M240.5 281v11M242.5 273v6M242.5 281v12M244.5 276v3M244.5 281v14M248.5 280v18M250.5 279v21M252.5 281v21M254.5 283v20M256.5 284v21M258.5 286v20M260.5 287v21M262.5 289v20M264.5 254v1M264.5 291v20M268.5 257v1M268.5 294v20M270.5 259v1M270.5 296v20M272.5 261v1M272.5 297v21M274.5 262v1M274.5 299v20M276.5 264v1M276.5 302v19M278.5 266v1M278.5 302v21M280.5 267v1M280.5 304v20M282.5 269v1M282.5 306v20M284.5 271v1M284.5 308v20M288.5 274v2M288.5 311v20M290.5 276v1M290.5 313v20M292.5 277v1M292.5 314v21M294.5 279v1M294.5 316v20M296.5 281v1M296.5 318v20M298.5 283v1M298.5 320v20M300.5 284v1M300.5 321v21M302.5 249v1M302.5 286v1M302.5 323v20M304.5 248v4M304.5 288v1M304.5 325v20M308.5 248v7M308.5 291v1M308.5 328v21M310.5 248v9M310.5 293v1M310.5 330v20M312.5 247v12M312.5 295v1M312.5 332v20M314.5 247v14M314.5 297v1M314.5 334v20M316.5 247v15M316.5 298v1M316.5 335v21M318.5 247v17M318.5 300v2M318.5 337v20M320.5 246v20M320.5 302v1M320.5 339v20M322.5 248v18M322.5 304v1M322.5 341v20M324.5 249v17M324.5 268v2M324.5 306v1M324.5 343v20M328.5 253v13M328.5 268v5M328.5 309v1M328.5 346v20M330.5 255v10M330.5 267v9M330.5 311v1M330.5 348v20M332.5 257v8M332.5 267v10M332.5 313v1M332.5 350v20M334.5 258v7M334.5 267v12M334.5 315v1M334.5 352v20M336.5 260v5M336.5 267v14M336.5 317v1M336.5 354v20M338.5 262v2M338.5 266v16M338.5 318v1M338.5 355v21M340.5 266v18M340.5 320v1M340.5 357v20M342.5 266v20M342.5 322v1M342.5 359v21M344.5 268v20M344.5 324v1M344.5 361v20M348.5 271v21M348.5 328v1M348.5 365v20M350.5 273v21M350.5 330v1M350.5 367v20M352.5 276v19M352.5 331v1M352.5 368v21M354.5 277v20M354.5 333v1M354.5 370v21M356.5 279v20M356.5 335v1M356.5 372v20M358.5 281v21M358.5 337v1M358.5 374v20M360.5 283v20M360.5 339v1M360.5 376v20M362.5 285v20M362.5 341v1M362.5 378v20M364.5 287v20M364.5 343v1M364.5 380v20M368.5 290v21M368.5 347v1M368.5 384v20M370.5 292v21M370.5 349v1M370.5 386v20M372.5 294v21M372.5 351v1M372.5 387v21M374.5 296v21M374.5 352v2M374.5 389v21M376.5 298v21M376.5 354v1M376.5 391v21M378.5 300v20M378.5 356v1M378.5 393v20M380.5 302v20M380.5 358v1M380.5 395v20M382.5 304v20M382.5 360v1M382.5 397v20M384.5 306v20M384.5 362v1M384.5 399v20M388.5 310v20M388.5 366v1M388.5 403v20M390.5 312v20M390.5 368v1M390.5 405v20M392.5 314v20M392.5 370v1M392.5 407v20M394.5 316v20M394.5 372v1M394.5 409v20M396.5 318v20M396.5 374v1M396.5 411v21M398.5 320v20M398.5 376v1M398.5 413v20M400.5 322v20M400.5 378v2M400.5 415v20M402.5 324v20M402.5 380v1M402.5 417v20M404.5 326v20M404.5 382v1M404.5 419v20M408.5 330v20M408.5 386v1M408.5 422v21M410.5 332v20M410.5 388v1M410.5 424v21M412.5 334v20M412.5 390v1M412.5 426v21M414.5 336v20M414.5 392v1M414.5 428v21M416.5 338v20M416.5 394v1M416.5 430v21M418.5 340v20M418.5 396v1M418.5 432v21M420.5 342v20M420.5 398v1M420.5 434v21M422.5 344v20M422.5 400v1M422.5 436v22M424.5 346v20M424.5 402v1M424.5 438v21M428.5 350v20M428.5 406v1M428.5 442v20M430.5 352v20M430.5 408v1M430.5 444v20M432.5 354v20M432.5 410v1M432.5 446v20M434.5 356v20M434.5 412v1M434.5 448v20M436.5 358v20M436.5 414v1M436.5 450v20M438.5 360v20M438.5 416v1M438.5 452v20M440.5 362v20M440.5 418v1M440.5 454v20M442.5 364v20M442.5 420v1M442.5 456v20M444.5 366v20M444.5 422v1M444.5 458v20M448.5 370v20M448.5 426v1M448.5 462v20M450.5 372v20M450.5 428v1M450.5 464v20M452.5 374v20M452.5 430v2M452.5 466v20M454.5 376v20M454.5 432v1M454.5 468v20M456.5 378v20M456.5 433v1M456.5 470v20M458.5 380v20M458.5 435v1M458.5 472v20M460.5 382v20M460.5 437v1M460.5 473v21M462.5 384v20M462.5 439v1M462.5 475v21M464.5 386v20M464.5 441v1M464.5 477v21M468.5 390v20M468.5 445v1M468.5 481v21M470.5 392v20M470.5 447v1M470.5 484v20M472.5 394v20M472.5 449v1M472.5 485v21M474.5 396v20M474.5 451v1M474.5 487v21M476.5 398v20M476.5 453v1M476.5 489v21M478.5 400v20M478.5 455v1M478.5 491v20M480.5 402v20M480.5 493v20M482.5 404v20M482.5 459v1M482.5 495v20M484.5 406v20M484.5 461v1M484.5 497v20M488.5 409v21M488.5 465v1M488.5 500v21M490.5 411v21M490.5 467v1M490.5 502v21M492.5 413v21M492.5 469v1M492.5 504v21M494.5 415v21M494.5 470v1M494.5 506v21M496.5 417v21M496.5 472v1M496.5 508v21M498.5 419v21M498.5 474v1M498.5 510v20M500.5 421v21M500.5 476v1M500.5 512v20M502.5 423v21M502.5 478v1M502.5 514v20M504.5 425v20M504.5 480v1M504.5 515v21M508.5 429v20M508.5 484v1M508.5 519v21M510.5 432v19M510.5 486v1M510.5 521v21M512.5 432v21M512.5 487v1M512.5 523v21M514.5 434v21M514.5 489v1M514.5 525v20M516.5 436v22M516.5 491v1M516.5 527v20M518.5 438v21M518.5 493v1M518.5 528v21M520.5 440v21M520.5 495v1M520.5 530v21M522.5 442v20M522.5 497v1M522.5 532v21M524.5 444v20M524.5 499v1M524.5 534v21M528.5 447v21M528.5 502v1M528.5 538v18M530.5 449v21M530.5 504v1M530.5 539v16M530.5 557v3M532.5 451v21M532.5 506v1M532.5 541v14M532.5 557v5M534.5 453v20M534.5 508v2M534.5 543v12M534.5 557v7M536.5 455v20M536.5 510v1M536.5 545v10M536.5 557v8M538.5 456v21M538.5 511v1M538.5 547v8M538.5 557v10M540.5 458v21M540.5 513v1M540.5 548v6M540.5 556v13M542.5 460v21M542.5 515v1M542.5 550v4M542.5 556v15M544.5 462v20M544.5 517v1M544.5 552v2M544.5 556v17M548.5 465v21M548.5 520v1M548.5 556v20M550.5 467v21M550.5 522v1M550.5 557v20M552.5 469v21M552.5 524v1M552.5 559v18M554.5 471v20M554.5 526v1M554.5 561v16M556.5 472v21M556.5 527v1M556.5 562v14M558.5 474v21M558.5 529v1M558.5 564v12M560.5 476v21M560.5 531v1M560.5 566v10M562.5 478v20M562.5 533v1M562.5 568v8M564.5 479v21M564.5 534v2M564.5 569v6M568.5 484v20M568.5 538v1M568.5 573v2M570.5 485v20M570.5 539v1M572.5 486v21M572.5 541v1M574.5 488v22M574.5 543v1M576.5 490v20M576.5 545v1M578.5 491v21M578.5 546v1M580.5 493v21M580.5 548v1M582.5 495v20M584.5 496v21M588.5 500v20M588.5 555v1M590.5 501v21M590.5 556v1M592.5 503v21M592.5 558v1M594.5 505v20M594.5 560v1M596.5 506v21M596.5 561v1M598.5 508v21M598.5 563v1M600.5 510v20M600.5 564v1M602.5 511v21M602.5 566v1M604.5 513v21M604.5 568v1M608.5 516v21M610.5 518v20M612.5 519v21M614.5 521v21M616.5 522v21M618.5 524v21M620.5 526v20M622.5 527v19M624.5 529v16M624.5 547v2M628.5 532v13M628.5 547v6M630.5 533v12M630.5 547v7M632.5 536v8M632.5 546v10M634.5 537v7M634.5 546v11M636.5 538v6M636.5 546v13M638.5 540v4M638.5 546v14M640.5 541v3M640.5 546v16M642.5 545v18M644.5 545v20M648.5 547v18M650.5 549v16M652.5 550v15M654.5 552v12M656.5 553v11M658.5 555v9M660.5 556v8M662.5 558v6M664.5 559v4M668.5 562v1"/>
<path stroke="#ff00ff" d="M228.5 260v2M230.5 260v3M232.5 259v6M234.5 259v8M236.5 259v9M238.5 258v12M240.5 258v13M242.5 258v15M244.5 257v19M248.5 257v21M250.5 257v20M252.5 258v19M252.5 279v2M254.5 260v17M254.5 279v4M256.5 262v14M256.5 278v6M258.5 263v13M258.5 278v8M260.5 265v11M260.5 278v9M262.5 267v8M262.5 277v12M264.5 268v7M264.5 277v14M268.5 272v2M268.5 276v18M270.5 273v1M270.5 276v20M272.5 276v21M274.5 277v22M276.5 278v24M278.5 280v22M280.5 252v2M280.5 282v22M282.5 251v4M282.5 283v23M284.5 251v6M284.5 285v23M288.5 251v9M288.5 289v22M290.5 250v12M290.5 290v23M292.5 250v14M292.5 292v22M294.5 250v15M294.5 294v22M296.5 250v17M296.5 296v22M298.5 249v20M298.5 297v23M300.5 249v20M300.5 299v22M302.5 250v19M302.5 271v1M302.5 302v21M304.5 252v17M304.5 271v3M304.5 303v22M308.5 255v13M308.5 270v8M308.5 306v22M310.5 257v11M310.5 270v9M310.5 308v22M312.5 259v9M312.5 270v11M312.5 310v22M314.5 261v7M314.5 270v13M314.5 311v23M316.5 262v5M316.5 269v16M316.5 313v22M318.5 264v3M318.5 269v17M318.5 315v22M320.5 266v1M320.5 269v19M320.5 317v22M322.5 268v22M322.5 319v22M324.5 270v22M324.5 320v23M328.5 273v22M328.5 324v22M330.5 276v21M330.5 326v22M332.5 277v22M332.5 328v22M334.5 279v23M334.5 330v22M336.5 281v22M336.5 331v23M338.5 282v23M338.5 333v22M340.5 284v22M340.5 335v22M342.5 286v22M342.5 337v22M344.5 288v22M344.5 339v22M348.5 292v22M348.5 342v23M350.5 294v22M350.5 344v23M352.5 295v23M352.5 346v22M354.5 297v23M354.5 348v22M356.5 299v23M356.5 350v22M358.5 302v21M358.5 352v22M360.5 303v22M360.5 354v22M362.5 305v23M362.5 356v22M364.5 307v22M364.5 357v23M368.5 311v22M368.5 361v23M370.5 313v22M370.5 363v23M372.5 315v22M372.5 365v22M374.5 317v22M374.5 367v22M376.5 319v22M376.5 369v22M378.5 320v23M378.5 371v22M380.5 322v23M380.5 373v22M382.5 324v23M382.5 375v22M384.5 326v23M384.5 377v22M388.5 330v24M388.5 380v23M390.5 332v23M390.5 382v23M392.5 334v23M392.5 384v23M394.5 336v23M394.5 386v23M396.5 338v23M396.5 388v23M398.5 340v23M398.5 390v23M400.5 342v23M400.5 392v23M402.5 344v23M402.5 394v23M404.5 346v23M404.5 396v23M408.5 350v23M408.5 400v22M410.5 352v23M410.5 402v22M412.5 354v23M412.5 404v22M414.5 356v24M414.5 406v22M416.5 358v23M416.5 408v22M418.5 360v23M418.5 410v22M420.5 362v23M420.5 411v23M422.5 364v23M422.5 413v23M424.5 366v23M424.5 415v23M428.5 370v23M428.5 419v23M430.5 372v23M430.5 421v23M432.5 374v23M432.5 423v23M434.5 376v23M434.5 425v23M436.5 378v23M436.5 427v23M438.5 380v23M438.5 429v23M440.5 382v23M440.5 432v22M442.5 384v23M442.5 433v23M444.5 386v24M444.5 435v23M448.5 390v24M448.5 439v23M450.5 392v24M450.5 440v24M452.5 394v24M452.5 442v24M454.5 396v24M454.5 444v24M456.5 398v24M456.5 446v24M458.5 400v24M458.5 448v24M460.5 402v24M460.5 450v23M462.5 404v24M462.5 452v23M464.5 406v24M464.5 454v23M468.5 410v24M468.5 458v23M470.5 412v24M470.5 460v24M472.5 414v24M472.5 461v24M474.5 416v24M474.5 463v24M476.5 418v24M476.5 465v24M478.5 420v24M478.5 467v24M480.5 422v24M480.5 469v24M482.5 424v24M482.5 471v24M484.5 426v24M484.5 473v24M488.5 430v24M488.5 476v24M490.5 432v24M490.5 478v24M492.5 434v24M492.5 480v24M494.5 436v24M494.5 482v24M496.5 438v24M496.5 484v24M498.5 440v24M498.5 486v24M500.5 442v24M500.5 487v25M502.5 444v24M502.5 489v25M504.5 445v25M504.5 491v24M508.5 449v25M508.5 495v24M510.5 451v25M510.5 497v24M512.5 453v25M512.5 498v25M514.5 455v24M514.5 500v25M516.5 458v23M516.5 502v25M518.5 459v25M518.5 504v24M520.5 461v24M520.5 506v24M522.5 462v25M522.5 507v25M524.5 464v25M524.5 510v24M528.5 468v25M528.5 513v25M530.5 470v25M530.5 515v24M532.5 472v24M532.5 516v25M534.5 473v25M534.5 518v25M536.5 475v25M536.5 520v25M538.5 477v25M538.5 522v25M540.5 479v25M540.5 523v25M542.5 481v25M542.5 525v25M544.5 482v26M544.5 527v25M548.5 486v25M548.5 530v24M550.5 488v25M550.5 532v21M550.5 555v2M552.5 490v25M552.5 534v19M552.5 555v4M554.5 491v26M554.5 536v17M554.5 555v6M556.5 493v25M556.5 537v16M556.5 555v7M558.5 495v25M558.5 539v13M558.5 554v10M560.5 497v25M560.5 541v11M560.5 554v12M562.5 498v26M562.5 542v10M562.5 554v14M564.5 500v25M564.5 544v8M564.5 554v15M568.5 504v25M568.5 548v3M568.5 553v20M570.5 505v26M570.5 549v2M570.5 553v22M572.5 507v25M572.5 553v21M574.5 510v24M574.5 553v21M576.5 510v26M576.5 554v20M578.5 512v25M578.5 556v18M580.5 514v25M580.5 558v15M582.5 515v26M582.5 559v14M584.5 517v25M584.5 561v12M588.5 520v26M588.5 565v7M590.5 522v25M590.5 566v6M592.5 524v25M592.5 568v4M594.5 525v24M594.5 570v2M596.5 527v21M596.5 550v2M598.5 529v19M598.5 550v4M600.5 530v18M600.5 550v5M602.5 532v16M602.5 550v7M604.5 534v13M604.5 549v10M608.5 537v10M608.5 549v13M610.5 538v9M610.5 549v14M612.5 540v7M612.5 549v16M614.5 542v4M614.5 548v18M616.5 543v3M616.5 548v20M618.5 545v1M618.5 548v21M620.5 548v20M622.5 548v20M624.5 549v19M628.5 553v14M630.5 554v13M632.5 556v11M634.5 557v10M636.5 559v8M638.5 560v6M640.5 562v4M642.5 563v3M644.5 565v1"/>
<path stroke="#0000ff" d="M250.5 256v1M252.5 256v2M254.5 256v4M256.5 255v7M258.5 255v8M260.5 255v10M262.5 254v13M264.5 255v13M268.5 254v3M268.5 258v14M270.5 253v6M270.5 260v13M272.5 253v8M272.5 262v12M274.5 253v9M274.5 263v10M274.5 276v1M276.5 252v12M276.5 265v8M276.5 276v2M278.5 252v14M278.5 267v6M278.5 276v4M280.5 254v13M280.5 268v4M280.5 274v8M282.5 255v14M282.5 270v2M282.5 274v9M284.5 257v14M284.5 274v11M288.5 260v11M288.5 273v1M288.5 276v13M290.5 262v9M290.5 273v3M290.5 277v13M292.5 264v7M292.5 273v4M292.5 278v14M294.5 265v5M294.5 272v7M294.5 280v14M296.5 267v3M296.5 272v9M296.5 282v14M298.5 269v1M298.5 272v11M298.5 284v13M300.5 271v13M300.5 285v14M302.5 272v14M302.5 287v15M304.5 274v14M304.5 289v14M308.5 278v13M308.5 292v14M310.5 279v14M310.5 294v14M312.5 281v14M312.5 296v14M314.5 283v14M314.5 298v13M316.5 285v13M316.5 299v14M318.5 286v14M318.5 302v13M320.5 288v14M320.5 303v14M322.5 290v14M322.5 305v14M324.5 292v14M324.5 307v13M328.5 295v14M328.5 310v14M330.5 297v14M330.5 312v14M332.5 299v14M332.5 314v14M334.5 302v13M334.5 316v14M336.5 303v14M336.5 318v13M338.5 305v13M338.5 319v14M340.5 306v14M340.5 321v14M342.5 308v14M342.5 323v14M344.5 310v14M344.5 325v14M348.5 314v14M348.5 329v13M350.5 316v14M350.5 331v13M352.5 318v13M352.5 332v14M354.5 320v13M354.5 334v14M356.5 322v13M356.5 336v14M358.5 323v14M358.5 338v14M360.5 325v14M360.5 340v14M362.5 328v13M362.5 342v14M364.5 329v14M364.5 344v13M368.5 333v14M368.5 348v13M370.5 335v14M370.5 350v13M372.5 337v14M372.5 352v13M374.5 339v13M374.5 354v13M376.5 341v13M376.5 355v14M378.5 343v13M378.5 357v14M380.5 345v13M380.5 359v14M382.5 347v13M382.5 361v14M384.5 349v13M384.5 363v14M388.5 354v12M388.5 367v13M390.5 355v13M390.5 369v13M392.5 357v13M392.5 371v13M394.5 359v13M394.5 373v13M396.5 361v13M396.5 375v13M398.5 363v13M398.5 377v13M400.5 365v13M400.5 380v12M402.5 367v13M402.5 381v13M404.5 369v13M404.5 383v13M408.5 373v13M408.5 387v13M410.5 375v13M410.5 389v13M412.5 377v13M412.5 391v13M414.5 380v12M414.5 393v13M416.5 381v13M416.5 395v13M418.5 383v13M418.5 397v13M420.5 385v13M420.5 399v12M422.5 387v13M422.5 401v12M424.5 389v13M424.5 403v12M428.5 393v13M428.5 407v12M430.5 395v13M430.5 409v12M432.5 397v13M432.5 411v12M434.5 399v13M434.5 413v12M436.5 401v13M436.5 415v12M438.5 403v13M438.5 417v12M440.5 405v13M440.5 419v13M442.5 407v13M442.5 421v12M444.5 410v12M444.5 423v12M448.5 414v12M448.5 427v12M450.5 416v12M450.5 429v11M452.5 418v12M452.5 432v10M454.5 420v12M454.5 433v11M456.5 422v11M456.5 434v12M458.5 424v11M458.5 436v12M460.5 426v11M460.5 438v12M462.5 428v11M462.5 440v12M464.5 430v11M464.5 442v12M468.5 434v11M468.5 446v12M470.5 436v11M470.5 448v12M472.5 438v11M472.5 450v11M474.5 440v11M474.5 452v11M476.5 442v11M476.5 454v11M478.5 444v11M478.5 456v11M480.5 446v23M482.5 448v11M482.5 460v11M484.5 450v11M484.5 462v11M488.5 454v11M488.5 466v10M490.5 456v11M490.5 468v10M492.5 458v11M492.5 470v10M494.5 460v10M494.5 471v11M496.5 462v10M496.5 473v11M498.5 464v10M498.5 475v11M500.5 466v10M500.5 477v10M502.5 468v10M502.5 479v10M504.5 470v10M504.5 481v10M508.5 474v10M508.5 485v10M510.5 476v10M510.5 487v10M512.5 478v9M512.5 488v10M514.5 479v10M514.5 490v10M516.5 481v10M516.5 492v10M518.5 484v9M518.5 494v10M520.5 485v10M520.5 496v10M522.5 487v10M522.5 498v9M524.5 489v10M524.5 500v10M528.5 493v9M528.5 503v10M530.5 495v9M530.5 505v10M532.5 496v10M532.5 507v9M534.5 498v10M534.5 510v8M536.5 500v10M536.5 511v9M538.5 502v9M538.5 512v10M540.5 504v9M540.5 514v9M542.5 506v9M542.5 516v9M544.5 508v9M544.5 518v9M548.5 511v9M548.5 521v9M550.5 513v9M550.5 523v9M552.5 515v9M552.5 525v9M554.5 517v9M554.5 527v9M556.5 518v9M556.5 528v9M558.5 520v9M558.5 530v9M560.5 522v9M560.5 532v9M562.5 524v9M562.5 534v8M564.5 525v9M564.5 536v8M568.5 529v9M568.5 539v9M570.5 531v8M570.5 540v9M572.5 532v9M572.5 542v9M574.5 534v9M574.5 544v7M576.5 536v9M576.5 546v5M576.5 553v1M578.5 537v9M578.5 547v3M578.5 552v4M580.5 539v9M580.5 549v1M580.5 552v6M582.5 541v9M582.5 552v7M584.5 542v8M584.5 552v9M588.5 546v3M588.5 551v4M588.5 556v9M590.5 547v2M590.5 551v5M590.5 557v9M592.5 551v7M592.5 559v9M594.5 551v9M594.5 561v9M596.5 552v9M596.5 562v9M598.5 554v9M598.5 564v7M600.5 555v9M600.5 565v6M602.5 557v9M602.5 567v4M604.5 559v9M604.5 569v1M608.5 562v8M610.5 563v7M612.5 565v4M614.5 566v3M616.5 568v1"/><path stroke="#000" d="M146.5 145v519M166.5 145v519M186.5 145v519M206.5 145v519M226.5 145v519M246.5 145v519M266.5 145v519M286.5 145v519M306.5 145v519M326.5 145v519M346.5 145v519M366.5 145v519M386.5 145v519M406.5 145v519M426.5 145v519M446.5 145v519M466.5 145v519M486.5 145v519M506.5 145v519M526.5 145v519M546.5 145v519M566.5 145v519M586.5 145v519M606.5 145v519M626.5 145v519M646.5 145v519M666.5 145v519M686.5 145v519M706.5 145v519M726.5 145v519M746.5 145v519M766.5 145v519M786.5 145v519M806.5 145v519M826.5 145v519M846.5 145v519M866.5 145v519M144 171.5h731M144 197.5h731M144 223.5h731M144 275.5h731M144 301.5h731M144 327.5h731M144 353.5h731M144 379.5h731M144 431.5h731M144 457.5h731M144 483.5h731M144 509.5h731M144 535.5h731M144 587.5h731M144 613.5h731M144 639.5h731"/><path stroke="#000" stroke-dasharray="18 6" d="M143 249.5h732M143 561.5h732"/><path stroke="#000" stroke-dasharray="3 3" d="M143 405.5h732"/><rect x="143.5" y="144.5" width="732" height="520" fill="none" stroke="#000"/><path stroke="#fff" d="M156 152.5h3M215 152.5h3M274 152.5h3M333 152.5h3M392 152.5h3M450 152.5h3M509 152.5h3M568 152.5h3M627 152.5h3M686 152.5h3M745 152.5h3M805 152.5h3M864 152.5h3M154 153.5h7M213 153.5h7M272 153.5h7M331 153.5h7M390 153.5h7M448 153.5h7M507 153.5h7M566 153.5h7M625 153.5h7M684 153.5h7M743 153.5h7M803 153.5h7M862 153.5h7M154 154.5h7M213 154.5h7M272 154.5h7M331 154.5h7M390 154.5h7M448 154.5h7M507 154.5h7M566 154.5h7M625 154.5h7M684 154.5h7M743 154.5h7M803 154.5h7M862 154.5h7M153 155.5h9M212 155.5h9M271 155.5h9M330 155.5h9M389 155.5h9M447 155.5h9M506 155.5h9M565 155.5h9M624 155.5h9M683 155.5h9M742 155.5h9M802 155.5h9M861 155.5h9M153 156.5h9M212 156.5h9M271 156.5h9M330 156.5h9M389 156.5h9M447 156.5h9M506 156.5h9M565 156.5h9M624 156.5h9M683 156.5h9M742 156.5h9M802 156.5h9M861 156.5h9M153 157.5h9M212 157.5h9M271 157.5h9M330 157.5h9M389 157.5h9M447 157.5h9M506 157.5h9M565 157.5h9M624 157.5h9M683 157.5h9M742 157.5h9M802 157.5h9M861 157.5h9M154 158.5h7M213 158.5h7M272 158.5h7M331 158.5h7M390 158.5h7M448 158.5h7M507 158.5h7M566 158.5h7M625 158.5h7M684 158.5h7M743 158.5h7M803 158.5h7M862 158.5h7M154 159.5h7M213 159.5h7M272 159.5h7M331 159.5h7M390 159.5h7M448 159.5h7M507 159.5h7M566 159.5h7M625 159.5h7M684 159.5h7M743 159.5h7M803 159.5h7M862 159.5h7M156 160.5h3M215 160.5h3M274 160.5h3M333 160.5h3M392 160.5h3M450 160.5h3M509 160.5h3M568 160.5h3M627 160.5h3M686 160.5h3M745 160.5h3M805 160.5h3M864 160.5h3M156 649.5h3M215 649.5h3M274 649.5h3M333 649.5h3M392 649.5h3M450 649.5h3M509 649.5h3M568 649.5h3M627 649.5h3M686 649.5h3M745 649.5h3M805 649.5h3M864 649.5h3M154 650.5h7M213 650.5h7M272 650.5h7M331 650.5h7M390 650.5h7M448 650.5h7M507 650.5h7M566 650.5h7M625 650.5h7M684 650.5h7M743 650.5h7M803 650.5h7M862 650.5h7M154 651.5h7M213 651.5h7M272 651.5h7M331 651.5h7M390 651.5h7M448 651.5h7M507 651.5h7M566 651.5h7M625 651.5h7M684 651.5h7M743 651.5h7M803 651.5h7M862 651.5h7M153 652.5h9M212 652.5h9M271 652.5h9M330 652.5h9M389 652.5h9M447 652.5h9M506 652.5h9M565 652.5h9M624 652.5h9M683 652.5h9M742 652.5h9M802 652.5h9M861 652.5h9M153 653.5h9M212 653.5h9M271 653.5h9M330 653.5h9M389 653.5h9M447 653.5h9M506 653.5h9M565 653.5h9M624 653.5h9M683 653.5h9M742 653.5h9M802 653.5h9M861 653.5h9M153 654.5h9M212 654.5h9M271 654.5h9M330 654.5h9M389 654.5h9M447 654.5h9M506 654.5h9M565 654.5h9M624 654.5h9M683 654.5h9M742 654.5h9M802 654.5h9M861 654.5h9M154 655.5h7M213 655.5h7M272 655.5h7M331 655.5h7M390 655.5h7M448 655.5h7M507 655.5h7M566 655.5h7M625 655.5h7M684 655.5h7M743 655.5h7M803 655.5h7M862 655.5h7M154 656.5h7M213 656.5h7M272 656.5h7M331 656.5h7M390 656.5h7M448 656.5h7M507 656.5h7M566 656.5h7M625 656.5h7M684 656.5h7M743 656.5h7M803 656.5h7M862 656.5h7M156 657.5h3M215 657.5h3M274 657.5h3M333 657.5h3M392 657.5h3M450 657.5h3M509 657.5h3M568 657.5h3M627 657.5h3M686 657.5h3M745 657.5h3M805 657.5h3M864 657.5h3"/><path stroke="#404040" d="M184 152.5h3M243 152.5h3M303 152.5h3M362 152.5h3M421 152.5h3M481 152.5h3M540 152.5h3M599 152.5h3M658 152.5h3M717 152.5h3M775 152.5h3M834 152.5h3M182 153.5h7M241 153.5h7M301 153.5h7M360 153.5h7M419 153.5h7M479 153.5h7M538 153.5h7M597 153.5h7M656 153.5h7M715 153.5h7M773 153.5h7M832 153.5h7M182 154.5h7M241 154.5h7M301 154.5h7M360 154.5h7M419 154.5h7M479 154.5h7M538 154.5h7M597 154.5h7M656 154.5h7M715 154.5h7M773 154.5h7M832 154.5h7M181 155.5h9M240 155.5h9M300 155.5h9M359 155.5h9M418 155.5h9M478 155.5h9M537 155.5h9M596 155.5h9M655 155.5h9M714 155.5h9M772 155.5h9M831 155.5h9M181 156.5h9M240 156.5h9M300 156.5h9M359 156.5h9M418 156.5h9M478 156.5h9M537 156.5h9M596 156.5h9M655 156.5h9M714 156.5h9M772 156.5h9M831 156.5h9M181 157.5h9M240 157.5h9M300 157.5h9M359 157.5h9M418 157.5h9M478 157.5h9M537 157.5h9M596 157.5h9M655 157.5h9M714 157.5h9M772 157.5h9M831 157.5h9M182 158.5h7M241 158.5h7M301 158.5h7M360 158.5h7M419 158.5h7M479 158.5h7M538 158.5h7M597 158.5h7M656 158.5h7M715 158.5h7M773 158.5h7M832 158.5h7M182 159.5h7M241 159.5h7M301 159.5h7M360 159.5h7M419 159.5h7M479 159.5h7M538 159.5h7M597 159.5h7M656 159.5h7M715 159.5h7M773 159.5h7M832 159.5h7M184 160.5h3M243 160.5h3M303 160.5h3M362 160.5h3M421 160.5h3M481 160.5h3M540 160.5h3M599 160.5h3M658 160.5h3M717 160.5h3M775 160.5h3M834 160.5h3M184 649.5h3M243 649.5h3M303 649.5h3M362 649.5h3M421 649.5h3M481 649.5h3M540 649.5h3M599 649.5h3M658 649.5h3M717 649.5h3M775 649.5h3M834 649.5h3M182 650.5h7M241 650.5h7M301 650.5h7M360 650.5h7M419 650.5h7M479 650.5h7M538 650.5h7M597 650.5h7M656 650.5h7M715 650.5h7M773 650.5h7M832 650.5h7M182 651.5h7M241 651.5h7M301 651.5h7M360 651.5h7M419 651.5h7M479 651.5h7M538 651.5h7M597 651.5h7M656 651.5h7M715 651.5h7M773 651.5h7M832 651.5h7M181 652.5h9M240 652.5h9M300 652.5h9M359 652.5h9M418 652.5h9M478 652.5h9M537 652.5h9M596 652.5h9M655 652.5h9M714 652.5h9M772 652.5h9M831 652.5h9M181 653.5h9M240 653.5h9M300 653.5h9M359 653.5h9M418 653.5h9M478 653.5h9M537 653.5h9M596 653.5h9M655 653.5h9M714 653.5h9M772 653.5h9M831 653.5h9M181 654.5h9M240 654.5h9M300 654.5h9M359 654.5h9M418 654.5h9M478 654.5h9M537 654.5h9M596 654.5h9M655 654.5h9M714 654.5h9M772 654.5h9M831 654.5h9M182 655.5h7M241 655.5h7M301 655.5h7M360 655.5h7M419 655.5h7M479 655.5h7M538 655.5h7M597 655.5h7M656 655.5h7M715 655.5h7M773 655.5h7M832 655.5h7M182 656.5h7M241 656.5h7M301 656.5h7M360 656.5h7M419 656.5h7M479 656.5h7M538 656.5h7M597 656.5h7M656 656.5h7M715 656.5h7M773 656.5h7M832 656.5h7M184 657.5h3M243 657.5h3M303 657.5h3M362 657.5h3M421 657.5h3M481 657.5h3M540 657.5h3M599 657.5h3M658 657.5h3M717 657.5h3M775 657.5h3M834 657.5h3"/><path stroke="#000" d="M156 151.5h3M184 151.5h3M215 151.5h3M243 151.5h3M274 151.5h3M303 151.5h3M333 151.5h3M362 151.5h3M392 151.5h3M421 151.5h3M450 151.5h3M481 151.5h3M509 151.5h3M540 151.5h3M568 151.5h3M599 151.5h3M627 151.5h3M658 151.5h3M686 151.5h3M717 151.5h3M745 151.5h3M775 151.5h3M805 151.5h3M834 151.5h3M864 151.5h3M154 152.5h2M159 152.5h2M182 152.5h2M187 152.5h2M213 152.5h2M218 152.5h2M241 152.5h2M246 152.5h2M272 152.5h2M277 152.5h2M301 152.5h2M306 152.5h2M331 152.5h2M336 152.5h2M360 152.5h2M365 152.5h2M390 152.5h2M395 152.5h2M419 152.5h2M424 152.5h2M448 152.5h2M453 152.5h2M479 152.5h2M484 152.5h2M507 152.5h2M512 152.5h2M538 152.5h2M543 152.5h2M566 152.5h2M571 152.5h2M597 152.5h2M602 152.5h2M625 152.5h2M630 152.5h2M656 152.5h2M661 152.5h2M684 152.5h2M689 152.5h2M715 152.5h2M720 152.5h2M743 152.5h2M748 152.5h2M773 152.5h2M778 152.5h2M803 152.5h2M808 152.5h2M832 152.5h2M837 152.5h2M862 152.5h2M867 152.5h2M153 153.5h1M161 153.5h1M181 153.5h1M189 153.5h1M212 153.5h1M220 153.5h1M240 153.5h1M248 153.5h1M271 153.5h1M279 153.5h1M300 153.5h1M308 153.5h1M330 153.5h1M338 153.5h1M359 153.5h1M367 153.5h1M389 153.5h1M397 153.5h1M418 153.5h1M426 153.5h1M447 153.5h1M455 153.5h1M478 153.5h1M486 153.5h1M506 153.5h1M514 153.5h1M537 153.5h1M545 153.5h1M565 153.5h1M573 153.5h1M596 153.5h1M604 153.5h1M624 153.5h1M632 153.5h1M655 153.5h1M663 153.5h1M683 153.5h1M691 153.5h1M714 153.5h1M722 153.5h1M742 153.5h1M750 153.5h1M772 153.5h1M780 153.5h1M802 153.5h1M810 153.5h1M831 153.5h1M839 153.5h1M861 153.5h1M869 153.5h1M153 154.5h1M161 154.5h1M181 154.5h1M189 154.5h1M212 154.5h1M220 154.5h1M240 154.5h1M248 154.5h1M271 154.5h1M279 154.5h1M300 154.5h1M308 154.5h1M330 154.5h1M338 154.5h1M359 154.5h1M367 154.5h1M389 154.5h1M397 154.5h1M418 154.5h1M426 154.5h1M447 154.5h1M455 154.5h1M478 154.5h1M486 154.5h1M506 154.5h1M514 154.5h1M537 154.5h1M545 154.5h1M565 154.5h1M573 154.5h1M596 154.5h1M604 154.5h1M624 154.5h1M632 154.5h1M655 154.5h1M663 154.5h1M683 154.5h1M691 154.5h1M714 154.5h1M722 154.5h1M742 154.5h1M750 154.5h1M772 154.5h1M780 154.5h1M802 154.5h1M810 154.5h1M831 154.5h1M839 154.5h1M861 154.5h1M869 154.5h1M152 155.5h1M162 155.5h1M180 155.5h1M190 155.5h1M211 155.5h1M221 155.5h1M239 155.5h1M249 155.5h1M270 155.5h1M280 155.5h1M299 155.5h1M309 155.5h1M329 155.5h1M339 155.5h1M358 155.5h1M368 155.5h1M388 155.5h1M398 155.5h1M417 155.5h1M427 155.5h1M446 155.5h1M456 155.5h1M477 155.5h1M487 155.5h1M505 155.5h1M515 155.5h1M536 155.5h1M546 155.5h1M564 155.5h1M574 155.5h1M595 155.5h1M605 155.5h1M623 155.5h1M633 155.5h1M654 155.5h1M664 155.5h1M682 155.5h1M692 155.5h1M713 155.5h1M723 155.5h1M741 155.5h1M751 155.5h1M771 155.5h1M781 155.5h1M801 155.5h1M811 155.5h1M830 155.5h1M840 155.5h1M860 155.5h1M870 155.5h1M152 156.5h1M162 156.5h1M180 156.5h1M190 156.5h1M211 156.5h1M221 156.5h1M239 156.5h1M249 156.5h1M270 156.5h1M280 156.5h1M299 156.5h1M309 156.5h1M329 156.5h1M339 156.5h1M358 156.5h1M368 156.5h1M388 156.5h1M398 156.5h1M417 156.5h1M427 156.5h1M446 156.5h1M456 156.5h1M477 156.5h1M487 156.5h1M505 156.5h1M515 156.5h1M536 156.5h1M546 156.5h1M564 156.5h1M574 156.5h1M595 156.5h1M605 156.5h1M623 156.5h1M633 156.5h1M654 156.5h1M664 156.5h1M682 156.5h1M692 156.5h1M713 156.5h1M723 156.5h1M741 156.5h1M751 156.5h1M771 156.5h1M781 156.5h1M801 156.5h1M811 156.5h1M830 156.5h1M840 156.5h1M860 156.5h1M870 156.5h1M152 157.5h1M162 157.5h1M180 157.5h1M190 157.5h1M211 157.5h1M221 157.5h1M239 157.5h1M249 157.5h1M270 157.5h1M280 157.5h1M299 157.5h1M309 157.5h1M329 157.5h1M339 157.5h1M358 157.5h1M368 157.5h1M388 157.5h1M398 157.5h1M417 157.5h1M427 157.5h1M446 157.5h1M456 157.5h1M477 157.5h1M487 157.5h1M505 157.5h1M515 157.5h1M536 157.5h1M546 157.5h1M564 157.5h1M574 157.5h1M595 157.5h1M605 157.5h1M623 157.5h1M633 157.5h1M654 157.5h1M664 157.5h1M682 157.5h1M692 157.5h1M713 157.5h1M723 157.5h1M741 157.5h1M751 157.5h1M771 157.5h1M781 157.5h1M801 157.5h1M811 157.5h1M830 157.5h1M840 157.5h1M860 157.5h1M870 157.5h1M153 158.5h1M161 158.5h1M181 158.5h1M189 158.5h1M212 158.5h1M220 158.5h1M240 158.5h1M248 158.5h1M271 158.5h1M279 158.5h1M300 158.5h1M308 158.5h1M330 158.5h1M338 158.5h1M359 158.5h1M367 158.5h1M389 158.5h1M397 158.5h1M418 158.5h1M426 158.5h1M447 158.5h1M455 158.5h1M478 158.5h1M486 158.5h1M506 158.5h1M514 158.5h1M537 158.5h1M545 158.5h1M565 158.5h1M573 158.5h1M596 158.5h1M604 158.5h1M624 158.5h1M632 158.5h1M655 158.5h1M663 158.5h1M683 158.5h1M691 158.5h1M714 158.5h1M722 158.5h1M742 158.5h1M750 158.5h1M772 158.5h1M780 158.5h1M802 158.5h1M810 158.5h1M831 158.5h1M839 158.5h1M861 158.5h1M869 158.5h1M153 159.5h1M161 159.5h1M181 159.5h1M189 159.5h1M212 159.5h1M220 159.5h1M240 159.5h1M248 159.5h1M271 159.5h1M279 159.5h1M300 159.5h1M308 159.5h1M330 159.5h1M338 159.5h1M359 159.5h1M367 159.5h1M389 159.5h1M397 159.5h1M418 159.5h1M426 159.5h1M447 159.5h1M455 159.5h1M478 159.5h1M486 159.5h1M506 159.5h1M514 159.5h1M537 159.5h1M545 159.5h1M565 159.5h1M573 159.5h1M596 159.5h1M604 159.5h1M624 159.5h1M632 159.5h1M655 159.5h1M663 159.5h1M683 159.5h1M691 159.5h1M714 159.5h1M722 159.5h1M742 159.5h1M750 159.5h1M772 159.5h1M780 159.5h1M802 159.5h1M810 159.5h1M831 159.5h1M839 159.5h1M861 159.5h1M869 159.5h1M154 160.5h2M159 160.5h2M182 160.5h2M187 160.5h2M213 160.5h2M218 160.5h2M241 160.5h2M246 160.5h2M272 160.5h2M277 160.5h2M301 160.5h2M306 160.5h2M331 160.5h2M336 160.5h2M360 160.5h2M365 160.5h2M390 160.5h2M395 160.5h2M419 160.5h2M424 160.5h2M448 160.5h2M453 160.5h2M479 160.5h2M484 160.5h2M507 160.5h2M512 160.5h2M538 160.5h2M543 160.5h2M566 160.5h2M571 160.5h2M597 160.5h2M602 160.5h2M625 160.5h2M630 160.5h2M656 160.5h2M661 160.5h2M684 160.5h2M689 160.5h2M715 160.5h2M720 160.5h2M743 160.5h2M748 160.5h2M773 160.5h2M778 160.5h2M803 160.5h2M808 160.5h2M832 160.5h2M837 160.5h2M862 160.5h2M867 160.5h2M156 161.5h3M184 161.5h3M215 161.5h3M243 161.5h3M274 161.5h3M303 161.5h3M333 161.5h3M362 161.5h3M392 161.5h3M421 161.5h3M450 161.5h3M481 161.5h3M509 161.5h3M540 161.5h3M568 161.5h3M599 161.5h3M627 161.5h3M658 161.5h3M686 161.5h3M717 161.5h3M745 161.5h3M775 161.5h3M805 161.5h3M834 161.5h3M864 161.5h3M156 648.5h3M184 648.5h3M215 648.5h3M243 648.5h3M274 648.5h3M303 648.5h3M333 648.5h3M362 648.5h3M392 648.5h3M421 648.5h3M450 648.5h3M481 648.5h3M509 648.5h3M540 648.5h3M568 648.5h3M599 648.5h3M627 648.5h3M658 648.5h3M686 648.5h3M717 648.5h3M745 648.5h3M775 648.5h3M805 648.5h3M834 648.5h3M864 648.5h3M154 649.5h2M159 649.5h2M182 649.5h2M187 649.5h2M213 649.5h2M218 649.5h2M241 649.5h2M246 649.5h2M272 649.5h2M277 649.5h2M301 649.5h2M306 649.5h2M331 649.5h2M336 649.5h2M360 649.5h2M365 649.5h2M390 649.5h2M395 649.5h2M419 649.5h2M424 649.5h2M448 649.5h2M453 649.5h2M479 649.5h2M484 649.5h2M507 649.5h2M512 649.5h2M538 649.5h2M543 649.5h2M566 649.5h2M571 649.5h2M597 649.5h2M602 649.5h2M625 649.5h2M630 649.5h2M656 649.5h2M661 649.5h2M684 649.5h2M689 649.5h2M715 649.5h2M720 649.5h2M743 649.5h2M748 649.5h2M773 649.5h2M778 649.5h2M803 649.5h2M808 649.5h2M832 649.5h2M837 649.5h2M862 649.5h2M867 649.5h2M153 650.5h1M161 650.5h1M181 650.5h1M189 650.5h1M212 650.5h1M220 650.5h1M240 650.5h1M248 650.5h1M271 650.5h1M279 650.5h1M300 650.5h1M308 650.5h1M330 650.5h1M338 650.5h1M359 650.5h1M367 650.5h1M389 650.5h1M397 650.5h1M418 650.5h1M426 650.5h1M447 650.5h1M455 650.5h1M478 650.5h1M486 650.5h1M506 650.5h1M514 650.5h1M537 650.5h1M545 650.5h1M565 650.5h1M573 650.5h1M596 650.5h1M604 650.5h1M624 650.5h1M632 650.5h1M655 650.5h1M663 650.5h1M683 650.5h1M691 650.5h1M714 650.5h1M722 650.5h1M742 650.5h1M750 650.5h1M772 650.5h1M780 650.5h1M802 650.5h1M810 650.5h1M831 650.5h1M839 650.5h1M861 650.5h1M869 650.5h1M153 651.5h1M161 651.5h1M181 651.5h1M189 651.5h1M212 651.5h1M220 651.5h1M240 651.5h1M248 651.5h1M271 651.5h1M279 651.5h1M300 651.5h1M308 651.5h1M330 651.5h1M338 651.5h1M359 651.5h1M367 651.5h1M389 651.5h1M397 651.5h1M418 651.5h1M426 651.5h1M447 651.5h1M455 651.5h1M478 651.5h1M486 651.5h1M506 651.5h1M514 651.5h1M537 651.5h1M545 651.5h1M565 651.5h1M573 651.5h1M596 651.5h1M604 651.5h1M624 651.5h1M632 651.5h1M655 651.5h1M663 651.5h1M683 651.5h1M691 651.5h1M714 651.5h1M722 651.5h1M742 651.5h1M750 651.5h1M772 651.5h1M780 651.5h1M802 651.5h1M810 651.5h1M831 651.5h1M839 651.5h1M861 651.5h1M869 651.5h1M152 652.5h1M162 652.5h1M180 652.5h1M190 652.5h1M211 652.5h1M221 652.5h1M239 652.5h1M249 652.5h1M270 652.5h1M280 652.5h1M299 652.5h1M309 652.5h1M329 652.5h1M339 652.5h1M358 652.5h1M368 652.5h1M388 652.5h1M398 652.5h1M417 652.5h1M427 652.5h1M446 652.5h1M456 652.5h1M477 652.5h1M487 652.5h1M505 652.5h1M515 652.5h1M536 652.5h1M546 652.5h1M564 652.5h1M574 652.5h1M595 652.5h1M605 652.5h1M623 652.5h1M633 652.5h1M654 652.5h1M664 652.5h1M682 652.5h1M692 652.5h1M713 652.5h1M723 652.5h1M741 652.5h1M751 652.5h1M771 652.5h1M781 652.5h1M801 652.5h1M811 652.5h1M830 652.5h1M840 652.5h1M860 652.5h1M870 652.5h1M152 653.5h1M162 653.5h1M180 653.5h1M190 653.5h1M211 653.5h1M221 653.5h1M239 653.5h1M249 653.5h1M270 653.5h1M280 653.5h1M299 653.5h1M309 653.5h1M329 653.5h1M339 653.5h1M358 653.5h1M368 653.5h1M388 653.5h1M398 653.5h1M417 653.5h1M427 653.5h1M446 653.5h1M456 653.5h1M477 653.5h1M487 653.5h1M505 653.5h1M515 653.5h1M536 653.5h1M546 653.5h1M564 653.5h1M574 653.5h1M595 653.5h1M605 653.5h1M623 653.5h1M633 653.5h1M654 653.5h1M664 653.5h1M682 653.5h1M692 653.5h1M713 653.5h1M723 653.5h1M741 653.5h1M751 653.5h1M771 653.5h1M781 653.5h1M801 653.5h1M811 653.5h1M830 653.5h1M840 653.5h1M860 653.5h1M870 653.5h1M152 654.5h1M162 654.5h1M180 654.5h1M190 654.5h1M211 654.5h1M221 654.5h1M239 654.5h1M249 654.5h1M270 654.5h1M280 654.5h1M299 654.5h1M309 654.5h1M329 654.5h1M339 654.5h1M358 654.5h1M368 654.5h1M388 654.5h1M398 654.5h1M417 654.5h1M427 654.5h1M446 654.5h1M456 654.5h1M477 654.5h1M487 654.5h1M505 654.5h1M515 654.5h1M536 654.5h1M546 654.5h1M564 654.5h1M574 654.5h1M595 654.5h1M605 654.5h1M623 654.5h1M633 654.5h1M654 654.5h1M664 654.5h1M682 654.5h1M692 654.5h1M713 654.5h1M723 654.5h1M741 654.5h1M751 654.5h1M771 654.5h1M781 654.5h1M801 654.5h1M811 654.5h1M830 654.5h1M840 654.5h1M860 654.5h1M870 654.5h1M153 655.5h1M161 655.5h1M181 655.5h1M189 655.5h1M212 655.5h1M220 655.5h1M240 655.5h1M248 655.5h1M271 655.5h1M279 655.5h1M300 655.5h1M308 655.5h1M330 655.5h1M338 655.5h1M359 655.5h1M367 655.5h1M389 655.5h1M397 655.5h1M418 655.5h1M426 655.5h1M447 655.5h1M455 655.5h1M478 655.5h1M486 655.5h1M506 655.5h1M514 655.5h1M537 655.5h1M545 655.5h1M565 655.5h1M573 655.5h1M596 655.5h1M604 655.5h1M624 655.5h1M632 655.5h1M655 655.5h1M663 655.5h1M683 655.5h1M691 655.5h1M714 655.5h1M722 655.5h1M742 655.5h1M750 655.5h1M772 655.5h1M780 655.5h1M802 655.5h1M810 655.5h1M831 655.5h1M839 655.5h1M861 655.5h1M869 655.5h1M153 656.5h1M161 656.5h1M181 656.5h1M189 656.5h1M212 656.5h1M220 656.5h1M240 656.5h1M248 656.5h1M271 656.5h1M279 656.5h1M300 656.5h1M308 656.5h1M330 656.5h1M338 656.5h1M359 656.5h1M367 656.5h1M389 656.5h1M397 656.5h1M418 656.5h1M426 656.5h1M447 656.5h1M455 656.5h1M478 656.5h1M486 656.5h1M506 656.5h1M514 656.5h1M537 656.5h1M545 656.5h1M565 656.5h1M573 656.5h1M596 656.5h1M604 656.5h1M624 656.5h1M632 656.5h1M655 656.5h1M663 656.5h1M683 656.5h1M691 656.5h1M714 656.5h1M722 656.5h1M742 656.5h1M750 656.5h1M772 656.5h1M780 656.5h1M802 656.5h1M810 656.5h1M831 656.5h1M839 656.5h1M861 656.5h1M869 656.5h1M154 657.5h2M159 657.5h2M182 657.5h2M187 657.5h2M213 657.5h2M218 657.5h2M241 657.5h2M246 657.5h2M272 657.5h2M277 657.5h2M301 657.5h2M306 657.5h2M331 657.5h2M336 657.5h2M360 657.5h2M365 657.5h2M390 657.5h2M395 657.5h2M419 657.5h2M424 657.5h2M448 657.5h2M453 657.5h2M479 657.5h2M484 657.5h2M507 657.5h2M512 657.5h2M538 657.5h2M543 657.5h2M566 657.5h2M571 657.5h2M597 657.5h2M602 657.5h2M625 657.5h2M630 657.5h2M656 657.5h2M661 657.5h2M684 657.5h2M689 657.5h2M715 657.5h2M720 657.5h2M743 657.5h2M748 657.5h2M773 657.5h2M778 657.5h2M803 657.5h2M808 657.5h2M832 657.5h2M837 657.5h2M862 657.5h2M867 657.5h2M156 658.5h3M184 658.5h3M215 658.5h3M243 658.5h3M274 658.5h3M303 658.5h3M333 658.5h3M362 658.5h3M392 658.5h3M421 658.5h3M450 658.5h3M481 658.5h3M509 658.5h3M540 658.5h3M568 658.5h3M599 658.5h3M627 658.5h3M658 658.5h3M686 658.5h3M717 658.5h3M745 658.5h3M775 658.5h3M805 658.5h3M834 658.5h3M864 658.5h3"/></svg>
<div class="lb" style="left:147px;top:126.5px;width:60px;margin-left:-30px;text-align:center">5929</div>
<div class="lb" style="left:146px;top:672px;width:60px;margin-left:-30px;text-align:center">Jn02</div>
<div class="lb" style="left:167px;top:113.5px;width:60px;margin-left:-30px;text-align:center">5939</div>
<div class="lb" style="left:166px;top:685px;width:60px;margin-left:-30px;text-align:center">Jn12</div>
<div class="lb" style="left:187px;top:126.5px;width:60px;margin-left:-30px;text-align:center">5949</div>
<div class="lb" style="left:186px;top:672px;width:60px;margin-left:-30px;text-align:center">Jn22</div>
<div class="lb" style="left:207px;top:113.5px;width:60px;margin-left:-30px;text-align:center">5959</div>
<div class="lb" style="left:206px;top:685px;width:60px;margin-left:-30px;text-align:center">Fb01</div>
<div class="lb" style="left:227px;top:126.5px;width:60px;margin-left:-30px;text-align:center">5969</div>
<div class="lb" style="left:226px;top:672px;width:60px;margin-left:-30px;text-align:center">Fb11</div>
<div class="lb" style="left:247px;top:113.5px;width:60px;margin-left:-30px;text-align:center">5979</div>
<div class="lb" style="left:246px;top:685px;width:60px;margin-left:-30px;text-align:center">Fb21</div>
<div class="lb" style="left:267px;top:126.5px;width:60px;margin-left:-30px;text-align:center">5989</div>
<div class="lb" style="left:266px;top:672px;width:60px;margin-left:-30px;text-align:center">Mr02</div>
<div class="lb" style="left:287px;top:113.5px;width:60px;margin-left:-30px;text-align:center">5999</div>
<div class="lb" style="left:286px;top:685px;width:60px;margin-left:-30px;text-align:center">Mr12</div>
<div class="lb" style="left:307px;top:126.5px;width:60px;margin-left:-30px;text-align:center">6009</div>
<div class="lb" style="left:306px;top:672px;width:60px;margin-left:-30px;text-align:center">Mr22</div>
<div class="lb" style="left:327px;top:113.5px;width:60px;margin-left:-30px;text-align:center">6019</div>
<div class="lb" style="left:326px;top:685px;width:60px;margin-left:-30px;text-align:center">Ar01</div>
<div class="lb" style="left:347px;top:126.5px;width:60px;margin-left:-30px;text-align:center">6029</div>
<div class="lb" style="left:346px;top:672px;width:60px;margin-left:-30px;text-align:center">Ar11</div>
<div class="lb" style="left:367px;top:113.5px;width:60px;margin-left:-30px;text-align:center">6039</div>
<div class="lb" style="left:366px;top:685px;width:60px;margin-left:-30px;text-align:center">Ar21</div>
<div class="lb" style="left:387px;top:126.5px;width:60px;margin-left:-30px;text-align:center">6049</div>
<div class="lb" style="left:386px;top:672px;width:60px;margin-left:-30px;text-align:center">My01</div>
<div class="lb" style="left:407px;top:113.5px;width:60px;margin-left:-30px;text-align:center">6059</div>
<div class="lb" style="left:406px;top:685px;width:60px;margin-left:-30px;text-align:center">My11</div>
<div class="lb" style="left:427px;top:126.5px;width:60px;margin-left:-30px;text-align:center">6069</div>
<div class="lb" style="left:426px;top:672px;width:60px;margin-left:-30px;text-align:center">My21</div>
<div class="lb" style="left:447px;top:113.5px;width:60px;margin-left:-30px;text-align:center">6079</div>
<div class="lb" style="left:446px;top:685px;width:60px;margin-left:-30px;text-align:center">My31</div>
<div class="lb" style="left:467px;top:126.5px;width:60px;margin-left:-30px;text-align:center">6089</div>
<div class="lb" style="left:466px;top:672px;width:60px;margin-left:-30px;text-align:center">Jn10</div>
<div class="lb" style="left:487px;top:113.5px;width:60px;margin-left:-30px;text-align:center">6099</div>
<div class="lb" style="left:486px;top:685px;width:60px;margin-left:-30px;text-align:center">Jn20</div>
<div class="lb" style="left:507px;top:126.5px;width:60px;margin-left:-30px;text-align:center">6109</div>
<div class="lb" style="left:506px;top:672px;width:60px;margin-left:-30px;text-align:center">Jn30</div>
<div class="lb" style="left:527px;top:113.5px;width:60px;margin-left:-30px;text-align:center">6119</div>
<div class="lb" style="left:526px;top:685px;width:60px;margin-left:-30px;text-align:center">Jl10</div>
<div class="lb" style="left:547px;top:126.5px;width:60px;margin-left:-30px;text-align:center">6129</div>
<div class="lb" style="left:546px;top:672px;width:60px;margin-left:-30px;text-align:center">Jl20</div>
<div class="lb" style="left:567px;top:113.5px;width:60px;margin-left:-30px;text-align:center">6139</div>
<div class="lb" style="left:566px;top:685px;width:60px;margin-left:-30px;text-align:center">Jl30</div>
<div class="lb" style="left:587px;top:126.5px;width:60px;margin-left:-30px;text-align:center">6149</div>
<div class="lb" style="left:586px;top:672px;width:60px;margin-left:-30px;text-align:center">Ag09</div>
<div class="lb" style="left:607px;top:113.5px;width:60px;margin-left:-30px;text-align:center">6159</div>
<div class="lb" style="left:606px;top:685px;width:60px;margin-left:-30px;text-align:center">Ag19</div>
<div class="lb" style="left:627px;top:126.5px;width:60px;margin-left:-30px;text-align:center">6169</div>
<div class="lb" style="left:626px;top:672px;width:60px;margin-left:-30px;text-align:center">Ag29</div>
<div class="lb" style="left:647px;top:113.5px;width:60px;margin-left:-30px;text-align:center">6179</div>
<div class="lb" style="left:646px;top:685px;width:60px;margin-left:-30px;text-align:center">Sp08</div>
<div class="lb" style="left:667px;top:126.5px;width:60px;margin-left:-30px;text-align:center">6189</div>
<div class="lb" style="left:666px;top:672px;width:60px;margin-left:-30px;text-align:center">Sp18</div>
<div class="lb" style="left:687px;top:113.5px;width:60px;margin-left:-30px;text-align:center">6199</div>
<div class="lb" style="left:686px;top:685px;width:60px;margin-left:-30px;text-align:center">Sp28</div>
<div class="lb" style="left:707px;top:126.5px;width:60px;margin-left:-30px;text-align:center">6209</div>
<div class="lb" style="left:706px;top:672px;width:60px;margin-left:-30px;text-align:center">Ot08</div>
<div class="lb" style="left:727px;top:113.5px;width:60px;margin-left:-30px;text-align:center">6219</div>
<div class="lb" style="left:726px;top:685px;width:60px;margin-left:-30px;text-align:center">Ot18</div>
<div class="lb" style="left:747px;top:126.5px;width:60px;margin-left:-30px;text-align:center">6229</div>
<div class="lb" style="left:746px;top:672px;width:60px;margin-left:-30px;text-align:center">Ot28</div>
<div class="lb" style="left:767px;top:113.5px;width:60px;margin-left:-30px;text-align:center">6239</div>
<div class="lb" style="left:766px;top:685px;width:60px;margin-left:-30px;text-align:center">Nv07</div>
<div class="lb" style="left:787px;top:126.5px;width:60px;margin-left:-30px;text-align:center">6249</div>
<div class="lb" style="left:786px;top:672px;width:60px;margin-left:-30px;text-align:center">Nv17</div>
<div class="lb" style="left:807px;top:113.5px;width:60px;margin-left:-30px;text-align:center">6259</div>
<div class="lb" style="left:806px;top:685px;width:60px;margin-left:-30px;text-align:center">Nv27</div>
<div class="lb" style="left:827px;top:126.5px;width:60px;margin-left:-30px;text-align:center">6269</div>
<div class="lb" style="left:826px;top:672px;width:60px;margin-left:-30px;text-align:center">Dc07</div>
<div class="lb" style="left:847px;top:113.5px;width:60px;margin-left:-30px;text-align:center">6279</div>
<div class="lb" style="left:846px;top:685px;width:60px;margin-left:-30px;text-align:center">Dc17</div>
<div class="lb" style="left:867px;top:126.5px;width:60px;margin-left:-30px;text-align:center">6289</div>
<div class="lb" style="left:866px;top:672px;width:60px;margin-left:-30px;text-align:center">Dc27</div>
<div class="lb" style="left:131px;top:685px;width:60px;margin-left:-30px;text-align:center">2012</div>
<div class="lb" style="left:895px;top:685px;width:60px;margin-left:-30px;text-align:center">2013</div>
<div class="lb" style="left:909px;top:672px;width:60px;margin-left:-30px;text-align:center">rf</div>
<div class="lb" style="left:133.5px;top:139px;width:60px;margin-left:-30px;text-align:center">10</div>
<div class="lb" style="left:888.5px;top:139px;width:60px;margin-left:-30px;text-align:center">10</div>
<div class="lb" style="left:133.5px;top:165px;width:60px;margin-left:-30px;text-align:center">9</div>
<div class="lb" style="left:888.5px;top:165px;width:60px;margin-left:-30px;text-align:center">9</div>
<div class="lb" style="left:133.5px;top:191px;width:60px;margin-left:-30px;text-align:center">8</div>
<div class="lb" style="left:888.5px;top:191px;width:60px;margin-left:-30px;text-align:center">8</div>
<div class="lb" style="left:133.5px;top:217px;width:60px;margin-left:-30px;text-align:center">7</div>
<div class="lb" style="left:888.5px;top:217px;width:60px;margin-left:-30px;text-align:center">7</div>
<div class="lb" style="left:133.5px;top:243px;width:60px;margin-left:-30px;text-align:center">6</div>
<div class="lb" style="left:888.5px;top:243px;width:60px;margin-left:-30px;text-align:center">6</div>
<div class="lb" style="left:133.5px;top:269px;width:60px;margin-left:-30px;text-align:center">5</div>
<div class="lb" style="left:888.5px;top:269px;width:60px;margin-left:-30px;text-align:center">5</div>
<div class="lb" style="left:133.5px;top:295px;width:60px;margin-left:-30px;text-align:center">4</div>
<div class="lb" style="left:888.5px;top:295px;width:60px;margin-left:-30px;text-align:center">4</div>
<div class="lb" style="left:133.5px;top:321px;width:60px;margin-left:-30px;text-align:center">3</div>
<div class="lb" style="left:888.5px;top:321px;width:60px;margin-left:-30px;text-align:center">3</div>
<div class="lb" style="left:133.5px;top:347px;width:60px;margin-left:-30px;text-align:center">2</div>
<div class="lb" style="left:888.5px;top:347px;width:60px;margin-left:-30px;text-align:center">2</div>
<div class="lb" style="left:133.5px;top:373px;width:60px;margin-left:-30px;text-align:center">1</div>
<div class="lb" style="left:888.5px;top:373px;width:60px;margin-left:-30px;text-align:center">1</div>
<div class="lb" style="left:133.5px;top:399px;width:60px;margin-left:-30px;text-align:center">0</div>
<div class="lb" style="left:888.5px;top:399px;width:60px;margin-left:-30px;text-align:center">0</div>
<div class="lb" style="left:133.5px;top:425px;width:60px;margin-left:-30px;text-align:center">23</div>
<div class="lb" style="left:888.5px;top:425px;width:60px;margin-left:-30px;text-align:center">23</div>
<div class="lb" style="left:133.5px;top:451px;width:60px;margin-left:-30px;text-align:center">22</div>
<div class="lb" style="left:888.5px;top:451px;width:60px;margin-left:-30px;text-align:center">22</div>
<div class="lb" style="left:133.5px;top:477px;width:60px;margin-left:-30px;text-align:center">21</div>
<div class="lb" style="left:888.5px;top:477px;width:60px;margin-left:-30px;text-align:center">21</div>
<div class="lb" style="left:133.5px;top:503px;width:60px;margin-left:-30px;text-align:center">20</div>
<div class="lb" style="left:888.5px;top:503px;width:60px;margin-left:-30px;text-align:center">20</div>
<div class="lb" style="left:133.5px;top:529px;width:60px;margin-left:-30px;text-align:center">19</div>
<div class="lb" style="left:888.5px;top:529px;width:60px;margin-left:-30px;text-align:center">19</div>
<div class="lb" style="left:133.5px;top:555px;width:60px;margin-left:-30px;text-align:center">18</div>
<div class="lb" style="left:888.5px;top:555px;width:60px;margin-left:-30px;text-align:center">18</div>
<div class="lb" style="left:133.5px;top:581px;width:60px;margin-left:-30px;text-align:center">17</div>
<div class="lb" style="left:888.5px;top:581px;width:60px;margin-left:-30px;text-align:center">17</div>
<div class="lb" style="left:133.5px;top:607px;width:60px;margin-left:-30px;text-align:center">16</div>
<div class="lb" style="left:888.5px;top:607px;width:60px;margin-left:-30px;text-align:center">16</div>
<div class="lb" style="left:133.5px;top:633px;width:60px;margin-left:-30px;text-align:center">15</div>
<div class="lb" style="left:888.5px;top:633px;width:60px;margin-left:-30px;text-align:center">15</div>
<div class="lb" style="left:133.5px;top:659px;width:60px;margin-left:-30px;text-align:center">14</div>
<div class="lb" style="left:888.5px;top:659px;width:60px;margin-left:-30px;text-align:center">14</div>
<div class="lb" style="left:119px;top:276px;width:60px;margin-left:-30px;text-align:center">L</div>
<div class="lb" style="left:119px;top:302px;width:60px;margin-left:-30px;text-align:center">O</div>
<div class="lb" style="left:119px;top:328px;width:60px;margin-left:-30px;text-align:center">C</div>
<div class="lb" style="left:119px;top:354px;width:60px;margin-left:-30px;text-align:center">A</div>
<div class="lb" style="left:119px;top:380px;width:60px;margin-left:-30px;text-align:center">L</div>
<div class="lb" style="left:119px;top:432px;width:60px;margin-left:-30px;text-align:center">T</div>
<div class="lb" style="left:119px;top:458px;width:60px;margin-left:-30px;text-align:center">I</div>
<div class="lb" style="left:119px;top:484px;width:60px;margin-left:-30px;text-align:center">M</div>
<div class="lb" style="left:119px;top:510px;width:60px;margin-left:-30px;text-align:center">E</div>
<div class="lb" style="left:906px;top:224px;width:60px;margin-left:-30px;text-align:center">U</div>
<div class="lb" style="left:906px;top:250px;width:60px;margin-left:-30px;text-align:center">N</div>
<div class="lb" style="left:906px;top:276px;width:60px;margin-left:-30px;text-align:center">I</div>
<div class="lb" style="left:906px;top:302px;width:60px;margin-left:-30px;text-align:center">V</div>
<div class="lb" style="left:906px;top:328px;width:60px;margin-left:-30px;text-align:center">E</div>
<div class="lb" style="left:906px;top:354px;width:60px;margin-left:-30px;text-align:center">R</div>
<div class="lb" style="left:906px;top:380px;width:60px;margin-left:-30px;text-align:center">S</div>
<div class="lb" style="left:906px;top:406px;width:60px;margin-left:-30px;text-align:center">A</div>
<div class="lb" style="left:906px;top:432px;width:60px;margin-left:-30px;text-align:center">L</div>
<div class="lb" style="left:906px;top:484px;width:60px;margin-left:-30px;text-align:center">T</div>
<div class="lb" style="left:906px;top:510px;width:60px;margin-left:-30px;text-align:center">I</div>
<div class="lb" style="left:906px;top:536px;width:60px;margin-left:-30px;text-align:center">M</div>
<div class="lb" style="left:906px;top:562px;width:60px;margin-left:-30px;text-align:center">E</div>
<!-- scrollbar -->
<div class="a" style="left:7px;top:704px;width:934px;height:14px;background:#d4d0c8"></div>
<div class="a" style="left:7px;top:705px;width:934px;height:1px;background:#fff"></div>
<div class="a" style="left:7px;top:705px;width:2px;height:13px;background:#fff"></div><div class="a" style="left:7px;top:706px;width:14px;height:1px;background:#fff"></div>
<div class="a" style="left:20px;top:706px;width:1px;height:12px;background:#808080"></div>
<div class="a" style="left:21px;top:705px;width:1px;height:13px;background:#404040"></div>
<div class="a" style="left:22px;top:705px;width:2px;height:13px;background:#fff"></div><div class="a" style="left:22px;top:706px;width:919px;height:1px;background:#fff"></div>
<svg class="a" style="left:10px;top:707px" width="8" height="10" viewBox="0 0 8 10" shape-rendering="crispEdges"><path fill="#000" d="M4 0h1v1h-1zM3 1h1v1h-1zM2 2h1v1h-1zM1 3h1v2h-1zM2 5h1v1h-1zM3 6h1v1h-1zM4 7h1v1h-1zM4 1h1v6h-1z"/></svg>
<!-- status -->
<div class="a" style="left:7px;top:718px;width:934px;height:15px;background:#fdf5d2;border-top:1px solid #000;border-bottom:1px solid #000"></div>
<div class="a" style="left:5px;top:734px;width:936px;height:1px;background:#fff"></div>
<div class="lb" style="left:13px;top:719px;white-space:pre">Mask:  Ten degrees</div>
<div class="lb" style="left:431px;top:719px;letter-spacing:-0.2px">Night when Sun below -12 degrees</div>
</body></html>
